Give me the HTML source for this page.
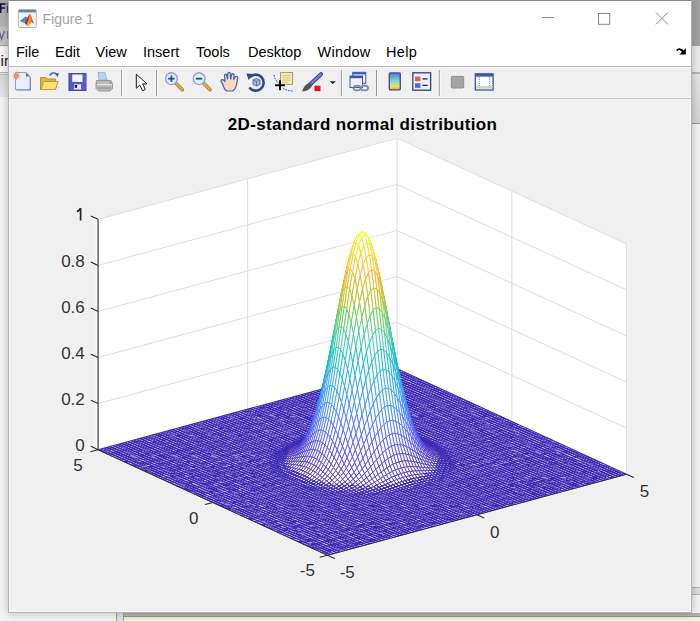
<!DOCTYPE html>
<html><head><meta charset="utf-8"><style>
html,body{margin:0;padding:0;}
body{width:700px;height:621px;position:relative;overflow:hidden;background:#f4f4f4;font-family:"Liberation Sans",sans-serif;}
.a{position:absolute;}
#win{position:absolute;left:8px;top:0px;width:684px;height:613px;background:#f0f0f0;box-sizing:border-box;border:1px solid #b4b4b4;border-top-color:#8a8a8a;box-shadow:0 0 9px rgba(0,0,0,0.26), inset 1px 0 0 #f6f6f6, inset -1px 0 0 #f6f6f6, inset 0 -1px 0 #f4f4f4;}
#title{position:absolute;left:0;top:0;width:682px;height:37px;background:#fff;}
#menu{position:absolute;left:0;top:37px;width:682px;height:28px;background:#fff;}
#tb{position:absolute;left:0;top:65px;width:682px;height:31px;background:#f0f0f0;border-top:1px solid #b8b8b8;border-bottom:1px solid #c0c0c0;box-shadow:inset 0 1px 0 #f5f5f5, inset 0 -1px 0 #f6f6f6, 0 1px 0 #f8f8f8;}
.menu{position:absolute;top:44px;font-size:14.5px;color:#000;}
.c0{stroke:#3c28b2;stroke-width:1.05}.c1{stroke:#402ab4;stroke-width:0.75}.c2{stroke:#422ec0;stroke-width:0.75}.c3{stroke:#4332cb;stroke-width:0.75}.c4{stroke:#4537d5;stroke-width:0.75}.c5{stroke:#463cde;stroke-width:0.75}.c6{stroke:#4741e5;stroke-width:0.75}.c7{stroke:#4747eb;stroke-width:0.75}.c8{stroke:#484df0;stroke-width:0.75}.c9{stroke:#4852f4;stroke-width:0.75}.c10{stroke:#4758f8;stroke-width:0.75}.c11{stroke:#465efb;stroke-width:0.75}.c12{stroke:#4563fd;stroke-width:0.75}.c13{stroke:#4269fe;stroke-width:0.75}.c14{stroke:#3e6fff;stroke-width:0.75}.c15{stroke:#3875fe;stroke-width:0.75}.c16{stroke:#327cfc;stroke-width:0.75}.c17{stroke:#2f81fa;stroke-width:0.75}.c18{stroke:#2e87f7;stroke-width:0.75}.c19{stroke:#2d8cf3;stroke-width:0.75}.c20{stroke:#2b91ef;stroke-width:0.75}.c21{stroke:#2797eb;stroke-width:0.75}.c22{stroke:#259be8;stroke-width:0.75}.c23{stroke:#23a0e5;stroke-width:0.75}.c24{stroke:#20a5e3;stroke-width:0.75}.c25{stroke:#1ca9df;stroke-width:0.75}.c26{stroke:#18addb;stroke-width:0.75}.c27{stroke:#12b1d6;stroke-width:0.75}.c29{stroke:#01b8ca;stroke-width:0.75}.c30{stroke:#02bac3;stroke-width:0.75}.c32{stroke:#19bfb6;stroke-width:0.75}.c34{stroke:#2cc4a7;stroke-width:0.75}.c35{stroke:#31c69f;stroke-width:0.75}.c36{stroke:#37c897;stroke-width:0.75}.c37{stroke:#3fca8e;stroke-width:0.75}.c38{stroke:#4acb84;stroke-width:0.75}.c39{stroke:#57cc7a;stroke-width:0.75}.c40{stroke:#64cd6f;stroke-width:0.95}.c41{stroke:#72cd64;stroke-width:0.95}.c42{stroke:#81cc59;stroke-width:0.95}.c44{stroke:#9dc943;stroke-width:0.95}.c46{stroke:#b9c431;stroke-width:0.95}.c47{stroke:#c5c22a;stroke-width:0.95}.c48{stroke:#d1bf27;stroke-width:0.95}.c49{stroke:#dcbd29;stroke-width:0.95}.c50{stroke:#e6bb2d;stroke-width:0.95}.c51{stroke:#f0ba36;stroke-width:0.95}.c52{stroke:#f8ba3d;stroke-width:0.95}.c55{stroke:#fec934;stroke-width:0.95}.c56{stroke:#fccf30;stroke-width:0.95}.c58{stroke:#f7dc2a;stroke-width:0.95}.c59{stroke:#f5e327;stroke-width:0.95}.c60{stroke:#f5e924;stroke-width:0.95}.c62{stroke:#f7f51b;stroke-width:0.95}.c63{stroke:#f9fb15;stroke-width:0.95}
svg text{font-family:"Liberation Sans",sans-serif;font-size:17px;fill:#333;}
</style></head><body>
<div class="a" style="left:0;top:0;width:9px;height:27px;background:linear-gradient(180deg,#a8a8a8,#b8b8b8);"></div>
<div class="a" style="left:0;top:27px;width:9px;height:18px;background:#c4c4c4;"></div><div class="a" style="left:0;top:45px;width:9px;height:1px;background:#a8a8a8;"></div><div class="a" style="left:0;top:46px;width:9px;height:1px;background:#e8e8e8;"></div>
<div class="a" style="left:0;top:47px;width:9px;height:25px;background:#f8f8f8;"></div>
<div class="a" style="left:0;top:72px;width:9px;height:3px;background:linear-gradient(180deg,#b8b8b8 0,#b8b8b8 1px,#e4e4e4 1px,#e4e4e4 2px,#c0c0c0 2px);"></div><div class="a" style="left:0;top:75px;width:9px;height:22px;background:linear-gradient(180deg,#dadada,#e8e8e8);"></div>
<svg class="a" style="left:0;top:0" width="9" height="75"><path d="M-0.2 3.2H5.6V4.7H1.5V7.3H5V8.7H1.5V12.9H-0.2Z" fill="#1e0a3c"/><path d="M6.8 3.2H8.3V4.6H6.8ZM6.8 5.8H8.3V12.9H6.8Z" fill="#4a3a6a"/><path d="M-0.8 30.9L1.6 39.1L4.4 30.9" stroke="#6a6a86" stroke-width="1.4" fill="none"/><path d="M7.8 30.9V39.1" stroke="#6a6a86" stroke-width="1.3"/><text x="0.6" y="66.3" style="font-family:'Liberation Sans';font-size:15px;fill:#1a1a1a">ir</text></svg>
<div class="a" style="left:691px;top:0;width:9px;height:46px;background:#a4a4a4;"></div>
<div class="a" style="left:691px;top:46px;width:9px;height:27px;background:#ececec;"></div>
<div class="a" style="left:691px;top:72px;width:9px;height:2px;background:#b8b8b8;"></div><div class="a" style="left:691px;top:74px;width:9px;height:49px;background:linear-gradient(180deg,#e6e6e6,#d4d4d4);"></div><div class="a" style="left:691px;top:123px;width:9px;height:1px;background:#999;"></div><div class="a" style="left:691px;top:587px;width:9px;height:8px;background:#dedede;border-top:1px solid #b4b4b4;border-bottom:1px solid #b4b4b4;box-sizing:border-box;"></div>
<div class="a" style="left:124px;top:613px;width:576px;height:8px;background:linear-gradient(180deg,#acacac 0,#b8b8b8 3px,#929292 3px,#929292 4px,#eeeed4 4px,#f8f8de 8px);"></div>
<div class="a" style="left:116px;top:613px;width:1px;height:8px;background:#a0a0a0;"></div>
<div class="a" style="left:117px;top:613px;width:6px;height:8px;background:#e2e2e2;"></div>
<div class="a" style="left:123px;top:613px;width:1px;height:8px;background:#a0a0a0;"></div>
<div id="win">
 <div id="title"></div>
 <div id="menu"></div>
 <div id="tb"></div>
</div>
<div class="a" style="left:42.5px;top:11px;font-size:14px;color:#a2a2a2;">Figure 1</div>
<div class="menu" style="left:16px">File</div>
<div class="menu" style="left:55px">Edit</div>
<div class="menu" style="left:95.5px">View</div>
<div class="menu" style="left:143px">Insert</div>
<div class="menu" style="left:196px">Tools</div>
<div class="menu" style="left:248px">Desktop</div>
<div class="menu" style="left:317.5px;letter-spacing:0.25px">Window</div>
<div class="menu" style="left:386px;letter-spacing:0.3px">Help</div>
<svg class="a" style="left:0;top:0" width="700" height="621" viewBox="0 0 700 621">
<path d="M98.1 449.7L397.1 368.7L397.1 138.3L98.1 219.3Z M397.1 368.7L626.5 474.2L626.5 243.9L397.1 138.3Z M98.1 449.7L397.1 368.7L626.5 474.2L327.5 555.2Z" fill="#fff"/>
<path d="M98.1 449.7L397.1 368.7L626.5 474.2M98.1 403.6L397.1 322.6L626.5 428.1M98.1 357.5L397.1 276.6L626.5 382.1M98.1 311.4L397.1 230.5L626.5 336M98.1 265.4L397.1 184.4L626.5 289.9M98.1 219.3L397.1 138.3L626.5 243.9M247.6 409.2L247.6 178.8M397.1 368.7L397.1 138.3M511.8 421.5L511.8 191.1M626.5 474.2L626.5 243.9" stroke="#dedede" stroke-width="1" fill="none"/>
<filter id="fb" x="-5%" y="-5%" width="110%" height="110%"><feGaussianBlur stdDeviation="0.3"/></filter><path d="M327.5 555.2L98.1 449.7M327.5 555.2L626.5 474.2M330.5 554.4L101.1 448.9M325.2 554.1L624.2 473.2M333.5 553.6L104.1 448M322.9 553.1L621.9 472.1M336.5 552.8L107 447.2M320.6 552L619.6 471.1M339.5 551.9L110 446.4M318.3 551L617.4 470M342.5 551.1L113 445.6M316 549.9L615.1 468.9M345.5 550.3L116 444.8M313.7 548.9L612.8 467.9M348.4 549.5L119 444M311.5 547.8L610.5 466.8M351.4 548.7L122 443.2M309.2 546.7L608.2 465.8M354.4 547.9L125 442.4M306.9 545.7L605.9 464.7M357.4 547.1L128 441.6M304.6 544.6L603.6 463.7M360.4 546.3L131 440.8M302.3 543.6L601.3 462.6M363.4 545.5L134 440M300 542.5L599 461.6M366.4 544.7L136.9 439.1M297.7 541.5L596.7 460.5M369.4 543.8L139.9 438.3M295.4 540.4L594.4 459.4M372.4 543L142.9 437.5M293.1 539.4L592.1 458.4M375.4 542.2L145.9 436.7M290.8 538.3L589.8 457.3M378.3 541.4L148.9 435.9M288.5 537.2L587.5 456.3M381.3 540.6L151.9 435.1M286.2 536.2L585.2 455.2M384.3 539.8L154.9 434.3M283.9 535.1L582.9 454.2M387.3 539L157.9 433.5M281.6 534.1L580.6 453.1M390.3 538.2L160.9 432.7M279.3 533L578.3 452.1M393.3 537.4L163.9 431.9M277 532L576.1 451M396.3 536.6L166.8 431M274.7 530.9L573.8 449.9M399.3 535.8L169.8 430.2M272.4 529.9L571.5 448.9M402.3 534.9L172.8 429.4M270.2 528.8L569.2 447.8M405.3 534.1L175.8 428.6M267.9 527.7L566.9 446.8M408.2 533.3L178.8 427.8M265.6 526.7L564.6 445.7M411.2 532.5L181.8 427M263.3 525.6L562.3 444.7M414.2 531.7L184.8 426.2M261 524.6L560 443.6M417.2 530.9L187.8 425.4M258.7 523.5L557.7 442.6M420.2 530.1L190.8 424.6M256.4 522.5L555.4 441.5M423.2 529.3L193.8 423.8M254.1 521.4L553.1 440.5M426.2 528.5L196.7 422.9M251.8 520.4L550.8 439.4M429.2 527.7L199.7 422.1M249.5 519.3L548.5 438.3M432.2 526.8L202.7 421.3M247.2 518.3L546.2 437.3M435.2 526L205.7 420.5M244.9 517.2L543.9 436.2M438.1 525.2L208.7 419.7M242.6 516.1L541.6 435.2M441.1 524.4L211.7 418.9M240.3 515.1L539.3 434.1M444.1 523.6L214.7 418.1M238 514L537 433.1M447.1 522.8L217.7 417.3M235.7 513L534.8 432M450.1 522L220.7 416.5M233.4 511.9L532.5 431M453.1 521.2L223.7 415.7M231.1 510.9L530.2 429.9M456.1 520.4L226.6 414.9M228.9 509.8L527.9 428.8M459.1 519.6L229.6 414M226.6 508.8L525.6 427.8M462.1 518.7L232.6 413.2M224.3 507.7L523.3 426.7M465.1 517.9L235.6 412.4M222 506.6L521 425.7M468.1 517.1L238.6 411.6M219.7 505.6L518.7 424.6M471 516.3L241.6 410.8M217.4 504.5L516.4 423.6M474 515.5L244.6 410M215.1 503.5L514.1 422.5M477 514.7L247.6 409.2M212.8 502.4L511.8 421.5M480 513.9L250.6 408.4M210.5 501.4L509.5 420.4M483 513.1L253.6 407.6M208.2 500.3L507.2 419.3M486 512.3L256.5 406.8M205.9 499.3L504.9 418.3M489 511.5L259.5 405.9M203.6 498.2L502.6 417.2M492 510.7L262.5 405.1M201.3 497.1L500.3 416.2M495 509.8L265.5 404.3M199 496.1L498 415.1M498 509L268.5 403.5M196.7 495L495.7 414.1M500.9 508.2L271.5 402.7M194.4 494L493.5 413M503.9 507.4L274.5 401.9M192.1 492.9L491.2 412M506.9 506.6L277.5 401.1M189.8 491.9L488.9 410.9M509.9 505.8L280.5 400.3M187.6 490.8L486.6 409.9M512.9 505L283.5 399.5M185.3 489.8L484.3 408.8M515.9 504.2L286.5 398.7M183 488.7L482 407.7M518.9 503.4L289.4 397.8M180.7 487.7L479.7 406.7M521.9 502.6L292.4 397M178.4 486.6L477.4 405.6M524.9 501.7L295.4 396.2M176.1 485.5L475.1 404.6M527.9 500.9L298.4 395.4M173.8 484.5L472.8 403.5M530.8 500.1L301.4 394.6M171.5 483.4L470.5 402.5M533.8 499.3L304.4 393.8M169.2 482.4L468.2 401.4M536.8 498.5L307.4 393M166.9 481.3L465.9 400.4M539.8 497.7L310.4 392.2M164.6 480.3L463.6 399.3M542.8 496.9L313.4 391.4M162.3 479.2L461.3 398.2M545.8 496.1L316.4 390.6M160 478.2L459 397.2M548.8 495.3L319.3 389.8M157.7 477.1L456.7 396.1M551.8 494.5L322.3 388.9M155.4 476L454.4 395.1M554.8 493.6L325.3 388.1M153.1 475L452.2 394M557.8 492.8L328.3 387.3M150.8 473.9L449.9 393M560.7 492L331.3 386.5M148.5 472.9L447.6 391.9M563.7 491.2L334.3 385.7M146.3 471.8L445.3 390.9M566.7 490.4L337.3 384.9M144 470.8L443 389.8M569.7 489.6L340.3 384.1M141.7 469.7L440.7 388.7M572.7 488.8L343.3 383.3M139.4 468.7L438.4 387.7M575.7 488L346.3 382.5M137.1 467.6L436.1 386.6M578.7 487.2L349.2 381.7M134.8 466.5L433.8 385.6M581.7 486.4L352.2 380.8M132.5 465.5L431.5 384.5M584.7 485.6L355.2 380M130.2 464.4L429.2 383.5M587.7 484.7L358.2 379.2M127.9 463.4L426.9 382.4M590.6 483.9L361.2 378.4M125.6 462.3L424.6 381.4M593.6 483.1L364.2 377.6M123.3 461.3L422.3 380.3M596.6 482.3L367.2 376.8M121 460.2L420 379.3M599.6 481.5L370.2 376M118.7 459.2L417.7 378.2M602.6 480.7L373.2 375.2M116.4 458.1L415.4 377.1M605.6 479.9L376.2 374.4M114.1 457.1L413.1 376.1M608.6 479.1L379.1 373.6M111.8 456L410.9 375M611.6 478.3L382.1 372.7M109.5 454.9L408.6 374M614.6 477.5L385.1 371.9M107.2 453.9L406.3 372.9M617.6 476.6L388.1 371.1M105 452.8L404 371.9M620.5 475.8L391.1 370.3M102.7 451.8L401.7 370.8M623.5 475L394.1 369.5M100.4 450.7L399.4 369.8M626.5 474.2L397.1 368.7M98.1 449.7L397.1 368.7" stroke="#3c28b2" stroke-width="1.05" fill="none" filter="url(#fb)"/>
<g fill="#fff">
<g class="c0"><path d="M321.5 434.4L324.5 433.6 322.2 432.6 319.2 433.4z"/><path d="M318.5 435.1L321.5 434.4 319.2 433.4 316.2 434.2z"/><path d="M315.5 435.9L318.5 435.1 316.2 434.2 313.2 435z"/><path d="M312.5 436.6L315.5 435.9 313.2 435 310.2 435.8z"/><path d="M309.5 437.4L312.5 436.6 310.2 435.8 307.2 436.6z"/><path d="M306.5 438.3L309.5 437.4 307.2 436.6 304.2 437.4z"/><path d="M303.5 439.1L306.5 438.3 304.2 437.4 301.3 438.2z"/><path d="M300.6 440L303.5 439.1 301.3 438.2 298.3 439z"/><path d="M297.6 440.8L300.6 440 298.3 439 295.3 439.9z"/><path d="M294.6 441.7L297.6 440.8 295.3 439.9 292.3 440.7z"/><path d="M335.7 432.2L338.7 431.4 336.4 430.4 333.4 431.2z"/><path d="M332.8 432.9L335.7 432.2 333.4 431.2 330.5 432z"/><path d="M329.8 433.5L332.8 432.9 330.5 432 327.5 432.8z"/><path d="M326.8 434.2L329.8 433.5 327.5 432.8 324.5 433.6z"/><path d="M323.8 434.9L326.8 434.2 324.5 433.6 321.5 434.4z"/><path d="M320.8 435.6L323.8 434.9 321.5 434.4 318.5 435.1z"/><path d="M317.8 436.3L320.8 435.6 318.5 435.1 315.5 435.9z"/><path d="M314.8 437L317.8 436.3 315.5 435.9 312.5 436.6z"/><path d="M311.8 437.8L314.8 437 312.5 436.6 309.5 437.4z"/><path d="M308.8 438.7L311.8 437.8 309.5 437.4 306.5 438.3z"/><path d="M305.8 439.5L308.8 438.7 306.5 438.3 303.5 439.1z"/><path d="M302.9 440.4L305.8 439.5 303.5 439.1 300.6 440z"/><path d="M299.9 441.3L302.9 440.4 300.6 440 297.6 440.8z"/><path d="M296.9 442.3L299.9 441.3 297.6 440.8 294.6 441.7z"/><path d="M293.9 443.2L296.9 442.3 294.6 441.7 291.6 442.5z"/><path d="M290.9 444.2L293.9 443.2 291.6 442.5 288.6 443.3z"/><path d="M287.9 445.2L290.9 444.2 288.6 443.3 285.6 444.1z"/><path d="M284.9 446L287.9 445.2 285.6 444.1 282.6 445z"/><path d="M344 431.6L347 430.9 344.7 429.8 341.7 430.6z"/><path d="M341 432.2L344 431.6 341.7 430.6 338.7 431.4z"/><path d="M338 432.7L341 432.2 338.7 431.4 335.7 432.2z"/><path d="M335 433.3L338 432.7 335.7 432.2 332.8 432.9z"/><path d="M332.1 433.9L335 433.3 332.8 432.9 329.8 433.5z"/><path d="M329.1 434.5L332.1 433.9 329.8 433.5 326.8 434.2z"/><path d="M326.1 435.1L329.1 434.5 326.8 434.2 323.8 434.9z"/><path d="M323.1 435.7L326.1 435.1 323.8 434.9 320.8 435.6z"/><path d="M320.1 436.4L323.1 435.7 320.8 435.6 317.8 436.3z"/><path d="M317.1 437.1L320.1 436.4 317.8 436.3 314.8 437z"/><path d="M314.1 437.9L317.1 437.1 314.8 437 311.8 437.8z"/><path d="M311.1 438.7L314.1 437.9 311.8 437.8 308.8 438.7z"/><path d="M308.1 439.6L311.1 438.7 308.8 438.7 305.8 439.5z"/><path d="M305.1 440.6L308.1 439.6 305.8 439.5 302.9 440.4z"/><path d="M302.2 441.6L305.1 440.6 302.9 440.4 299.9 441.3z"/><path d="M299.2 442.6L302.2 441.6 299.9 441.3 296.9 442.3z"/><path d="M296.2 443.6L299.2 442.6 296.9 442.3 293.9 443.2z"/><path d="M293.2 444.7L296.2 443.6 293.9 443.2 290.9 444.2z"/><path d="M290.2 445.7L293.2 444.7 290.9 444.2 287.9 445.2z"/><path d="M287.2 446.7L290.2 445.7 287.9 445.2 284.9 446z"/><path d="M284.2 447.8L287.2 446.7 284.9 446 281.9 446.8z"/><path d="M281.2 448.7L284.2 447.8 281.9 446.8 278.9 447.6z"/><path d="M352.3 431L355.3 430.3 353 429.3 350 430.1z"/><path d="M349.3 431.6L352.3 431 350 430.1 347 430.9z"/><path d="M346.3 432.1L349.3 431.6 347 430.9 344 431.6z"/><path d="M343.3 432.6L346.3 432.1 344 431.6 341 432.2z"/><path d="M340.3 433.1L343.3 432.6 341 432.2 338 432.7z"/><path d="M337.3 433.5L340.3 433.1 338 432.7 335 433.3z"/><path d="M334.4 433.9L337.3 433.5 335 433.3 332.1 433.9z"/><path d="M331.4 434.4L334.4 433.9 332.1 433.9 329.1 434.5z"/><path d="M328.4 434.9L331.4 434.4 329.1 434.5 326.1 435.1z"/><path d="M325.4 435.5L328.4 434.9 326.1 435.1 323.1 435.7z"/><path d="M322.4 436.1L325.4 435.5 323.1 435.7 320.1 436.4z"/><path d="M319.4 436.8L322.4 436.1 320.1 436.4 317.1 437.1z"/><path d="M316.4 437.5L319.4 436.8 317.1 437.1 314.1 437.9z"/><path d="M313.4 438.4L316.4 437.5 314.1 437.9 311.1 438.7z"/><path d="M310.4 439.3L313.4 438.4 311.1 438.7 308.1 439.6z"/><path d="M307.4 440.3L310.4 439.3 308.1 439.6 305.1 440.6z"/><path d="M304.5 441.4L307.4 440.3 305.1 440.6 302.2 441.6z"/><path d="M301.5 442.5L304.5 441.4 302.2 441.6 299.2 442.6z"/><path d="M298.5 443.7L301.5 442.5 299.2 442.6 296.2 443.6z"/><path d="M295.5 444.8L298.5 443.7 296.2 443.6 293.2 444.7z"/><path d="M292.5 446L295.5 444.8 293.2 444.7 290.2 445.7z"/><path d="M289.5 447.2L292.5 446 290.2 445.7 287.2 446.7z"/><path d="M286.5 448.3L289.5 447.2 287.2 446.7 284.2 447.8z"/><path d="M283.5 449.4L286.5 448.3 284.2 447.8 281.2 448.7z"/><path d="M280.5 450.5L283.5 449.4 281.2 448.7 278.2 449.5z"/><path d="M277.5 451.4L280.5 450.5 278.2 449.5 275.2 450.3z"/><path d="M357.6 431.1L360.6 430.6 358.3 429.5 355.3 430.3z"/><path d="M354.6 431.6L357.6 431.1 355.3 430.3 352.3 431z"/><path d="M351.6 432L354.6 431.6 352.3 431 349.3 431.6z"/><path d="M348.6 432.4L351.6 432 349.3 431.6 346.3 432.1z"/><path d="M345.6 432.7L348.6 432.4 346.3 432.1 343.3 432.6z"/><path d="M342.6 433L345.6 432.7 343.3 432.6 340.3 433.1z"/><path d="M339.6 433.3L342.6 433 340.3 433.1 337.3 433.5z"/><path d="M336.6 433.6L339.6 433.3 337.3 433.5 334.4 433.9z"/></g>
<g class="c1"><path d="M333.7 433.9L336.6 433.6 334.4 433.9 331.4 434.4z"/><path d="M330.7 434.2L333.7 433.9 331.4 434.4 328.4 434.9z"/><path d="M327.7 434.7L330.7 434.2 328.4 434.9 325.4 435.5z"/><path d="M324.7 435.2L327.7 434.7 325.4 435.5 322.4 436.1z"/><path d="M321.7 435.8L324.7 435.2 322.4 436.1 319.4 436.8z"/><path d="M318.7 436.6L321.7 435.8 319.4 436.8 316.4 437.5z"/><path d="M315.7 437.4L318.7 436.6 316.4 437.5 313.4 438.4z"/><path d="M312.7 438.4L315.7 437.4 313.4 438.4 310.4 439.3z"/><path d="M309.7 439.5L312.7 438.4 310.4 439.3 307.4 440.3z"/><path d="M306.7 440.7L309.7 439.5 307.4 440.3 304.5 441.4z"/><path d="M303.8 442L306.7 440.7 304.5 441.4 301.5 442.5z"/><path d="M300.8 443.3L303.8 442 301.5 442.5 298.5 443.7z"/></g>
<g class="c0"><path d="M297.8 444.7L300.8 443.3 298.5 443.7 295.5 444.8z"/><path d="M294.8 446L297.8 444.7 295.5 444.8 292.5 446z"/><path d="M291.8 447.3L294.8 446 292.5 446 289.5 447.2z"/><path d="M288.8 448.6L291.8 447.3 289.5 447.2 286.5 448.3z"/><path d="M285.8 449.9L288.8 448.6 286.5 448.3 283.5 449.4z"/><path d="M282.8 451.1L285.8 449.9 283.5 449.4 280.5 450.5z"/><path d="M279.8 452.2L282.8 451.1 280.5 450.5 277.5 451.4z"/><path d="M276.8 453.2L279.8 452.2 277.5 451.4 274.5 452.2z"/><path d="M365.9 430.8L368.8 430 366.5 428.9 363.6 429.7z"/><path d="M362.9 431.3L365.9 430.8 363.6 429.7 360.6 430.6z"/><path d="M359.9 431.7L362.9 431.3 360.6 430.6 357.6 431.1z"/><path d="M356.9 432L359.9 431.7 357.6 431.1 354.6 431.6z"/><path d="M353.9 432.3L356.9 432 354.6 431.6 351.6 432z"/><path d="M350.9 432.4L353.9 432.3 351.6 432 348.6 432.4z"/><path d="M347.9 432.6L350.9 432.4 348.6 432.4 345.6 432.7z"/></g>
<g class="c1"><path d="M344.9 432.6L347.9 432.6 345.6 432.7 342.6 433z"/><path d="M341.9 432.7L344.9 432.6 342.6 433 339.6 433.3z"/><path d="M338.9 432.7L341.9 432.7 339.6 433.3 336.6 433.6z"/><path d="M336 432.8L338.9 432.7 336.6 433.6 333.7 433.9z"/><path d="M333 432.9L336 432.8 333.7 433.9 330.7 434.2z"/><path d="M330 433.2L333 432.9 330.7 434.2 327.7 434.7z"/><path d="M327 433.6L330 433.2 327.7 434.7 324.7 435.2z"/></g>
<g class="c2"><path d="M324 434.1L327 433.6 324.7 435.2 321.7 435.8z"/><path d="M321 434.8L324 434.1 321.7 435.8 318.7 436.6z"/><path d="M318 435.7L321 434.8 318.7 436.6 315.7 437.4z"/><path d="M315 436.8L318 435.7 315.7 437.4 312.7 438.4z"/></g>
<g class="c1"><path d="M312 438L315 436.8 312.7 438.4 309.7 439.5z"/><path d="M309 439.4L312 438 309.7 439.5 306.7 440.7z"/><path d="M306 440.9L309 439.4 306.7 440.7 303.8 442z"/><path d="M303.1 442.4L306 440.9 303.8 442 300.8 443.3z"/><path d="M300.1 444L303.1 442.4 300.8 443.3 297.8 444.7z"/><path d="M297.1 445.6L300.1 444 297.8 444.7 294.8 446z"/><path d="M294.1 447.1L297.1 445.6 294.8 446 291.8 447.3z"/></g>
<g class="c0"><path d="M291.1 448.6L294.1 447.1 291.8 447.3 288.8 448.6z"/><path d="M288.1 450.1L291.1 448.6 288.8 448.6 285.8 449.9z"/><path d="M285.1 451.4L288.1 450.1 285.8 449.9 282.8 451.1z"/><path d="M282.1 452.7L285.1 451.4 282.8 451.1 279.8 452.2z"/><path d="M279.1 453.9L282.1 452.7 279.8 452.2 276.8 453.2z"/><path d="M276.1 455.1L279.1 453.9 276.8 453.2 273.9 454z"/><path d="M273.2 455.9L276.1 455.1 273.9 454 270.9 454.8z"/><path d="M371.1 431L374.1 430.2 371.8 429.2 368.8 430z"/><path d="M368.1 431.4L371.1 431 368.8 430 365.9 430.8z"/><path d="M365.2 431.8L368.1 431.4 365.9 430.8 362.9 431.3z"/><path d="M362.2 432L365.2 431.8 362.9 431.3 359.9 431.7z"/><path d="M359.2 432.2L362.2 432 359.9 431.7 356.9 432z"/><path d="M356.2 432.2L359.2 432.2 356.9 432 353.9 432.3z"/></g>
<g class="c1"><path d="M353.2 432.1L356.2 432.2 353.9 432.3 350.9 432.4z"/><path d="M350.2 431.9L353.2 432.1 350.9 432.4 347.9 432.6z"/><path d="M347.2 431.7L350.2 431.9 347.9 432.6 344.9 432.6z"/><path d="M344.2 431.4L347.2 431.7 344.9 432.6 341.9 432.7z"/><path d="M341.2 431.1L344.2 431.4 341.9 432.7 338.9 432.7z"/></g>
<g class="c2"><path d="M338.2 430.9L341.2 431.1 338.9 432.7 336 432.8z"/><path d="M335.3 430.7L338.2 430.9 336 432.8 333 432.9z"/><path d="M332.3 430.8L335.3 430.7 333 432.9 330 433.2z"/><path d="M329.3 431L332.3 430.8 330 433.2 327 433.6z"/><path d="M326.3 431.4L329.3 431 327 433.6 324 434.1z"/></g>
<g class="c3"><path d="M323.3 432.1L326.3 431.4 324 434.1 321 434.8z"/><path d="M320.3 433L323.3 432.1 321 434.8 318 435.7z"/></g>
<g class="c2"><path d="M317.3 434.2L320.3 433 318 435.7 315 436.8z"/><path d="M314.3 435.6L317.3 434.2 315 436.8 312 438z"/><path d="M311.3 437.2L314.3 435.6 312 438 309 439.4z"/><path d="M308.3 439L311.3 437.2 309 439.4 306 440.9z"/><path d="M305.4 440.8L308.3 439 306 440.9 303.1 442.4z"/></g>
<g class="c1"><path d="M302.4 442.7L305.4 440.8 303.1 442.4 300.1 444z"/><path d="M299.4 444.6L302.4 442.7 300.1 444 297.1 445.6z"/><path d="M296.4 446.5L299.4 444.6 297.1 445.6 294.1 447.1z"/><path d="M293.4 448.3L296.4 446.5 294.1 447.1 291.1 448.6z"/><path d="M290.4 450L293.4 448.3 291.1 448.6 288.1 450.1z"/></g>
<g class="c0"><path d="M287.4 451.6L290.4 450 288.1 450.1 285.1 451.4z"/><path d="M284.4 453.1L287.4 451.6 285.1 451.4 282.1 452.7z"/><path d="M281.4 454.5L284.4 453.1 282.1 452.7 279.1 453.9z"/><path d="M278.4 455.7L281.4 454.5 279.1 453.9 276.1 455.1z"/><path d="M275.5 456.9L278.4 455.7 276.1 455.1 273.2 455.9z"/><path d="M272.5 457.8L275.5 456.9 273.2 455.9 270.2 456.7z"/><path d="M376.4 431.2L379.4 430.5 377.1 429.4 374.1 430.2z"/><path d="M373.4 431.6L376.4 431.2 374.1 430.2 371.1 431z"/><path d="M370.4 432L373.4 431.6 371.1 431 368.1 431.4z"/><path d="M367.5 432.1L370.4 432 368.1 431.4 365.2 431.8z"/><path d="M364.5 432.2L367.5 432.1 365.2 431.8 362.2 432z"/><path d="M361.5 432L364.5 432.2 362.2 432 359.2 432.2z"/></g>
<g class="c1"><path d="M358.5 431.7L361.5 432 359.2 432.2 356.2 432.2z"/><path d="M355.5 431.3L358.5 431.7 356.2 432.2 353.2 432.1z"/><path d="M352.5 430.7L355.5 431.3 353.2 432.1 350.2 431.9z"/></g>
<g class="c2"><path d="M349.5 430.1L352.5 430.7 350.2 431.9 347.2 431.7z"/><path d="M346.5 429.4L349.5 430.1 347.2 431.7 344.2 431.4z"/><path d="M343.5 428.7L346.5 429.4 344.2 431.4 341.2 431.1z"/></g>
<g class="c3"><path d="M340.5 428L343.5 428.7 341.2 431.1 338.2 430.9z"/><path d="M337.5 427.5L340.5 428 338.2 430.9 335.3 430.7z"/><path d="M334.6 427.2L337.5 427.5 335.3 430.7 332.3 430.8z"/><path d="M331.6 427.2L334.6 427.2 332.3 430.8 329.3 431z"/></g>
<g class="c4"><path d="M328.6 427.5L331.6 427.2 329.3 431 326.3 431.4z"/><path d="M325.6 428.1L328.6 427.5 326.3 431.4 323.3 432.1z"/><path d="M322.6 429.1L325.6 428.1 323.3 432.1 320.3 433z"/><path d="M319.6 430.4L322.6 429.1 320.3 433 317.3 434.2z"/></g>
<g class="c3"><path d="M316.6 432.1L319.6 430.4 317.3 434.2 314.3 435.6z"/><path d="M313.6 434L316.6 432.1 314.3 435.6 311.3 437.2z"/><path d="M310.6 436.1L313.6 434 311.3 437.2 308.3 439z"/><path d="M307.6 438.4L310.6 436.1 308.3 439 305.4 440.8z"/></g>
<g class="c2"><path d="M304.7 440.7L307.6 438.4 305.4 440.8 302.4 442.7z"/><path d="M301.7 443L304.7 440.7 302.4 442.7 299.4 444.6z"/><path d="M298.7 445.3L301.7 443 299.4 444.6 296.4 446.5z"/></g>
<g class="c1"><path d="M295.7 447.5L298.7 445.3 296.4 446.5 293.4 448.3z"/><path d="M292.7 449.6L295.7 447.5 293.4 448.3 290.4 450z"/><path d="M289.7 451.5L292.7 449.6 290.4 450 287.4 451.6z"/></g>
<g class="c0"><path d="M286.7 453.2L289.7 451.5 287.4 451.6 284.4 453.1z"/><path d="M283.7 454.8L286.7 453.2 284.4 453.1 281.4 454.5z"/><path d="M280.7 456.2L283.7 454.8 281.4 454.5 278.4 455.7z"/><path d="M277.7 457.6L280.7 456.2 278.4 455.7 275.5 456.9z"/><path d="M274.8 458.8L277.7 457.6 275.5 456.9 272.5 457.8z"/><path d="M271.8 459.6L274.8 458.8 272.5 457.8 269.5 458.6z"/><path d="M381.7 431.5L384.7 430.7 382.4 429.7 379.4 430.5z"/><path d="M378.7 431.9L381.7 431.5 379.4 430.5 376.4 431.2z"/><path d="M375.7 432.2L378.7 431.9 376.4 431.2 373.4 431.6z"/><path d="M372.7 432.3L375.7 432.2 373.4 431.6 370.4 432z"/><path d="M369.7 432.3L372.7 432.3 370.4 432 367.5 432.1z"/><path d="M366.8 432L369.7 432.3 367.5 432.1 364.5 432.2z"/></g>
<g class="c1"><path d="M363.8 431.5L366.8 432 364.5 432.2 361.5 432z"/><path d="M360.8 430.9L363.8 431.5 361.5 432 358.5 431.7z"/><path d="M357.8 430L360.8 430.9 358.5 431.7 355.5 431.3z"/></g>
<g class="c2"><path d="M354.8 428.9L357.8 430 355.5 431.3 352.5 430.7z"/><path d="M351.8 427.7L354.8 428.9 352.5 430.7 349.5 430.1z"/></g>
<g class="c3"><path d="M348.8 426.4L351.8 427.7 349.5 430.1 346.5 429.4z"/><path d="M345.8 425.2L348.8 426.4 346.5 429.4 343.5 428.7z"/></g>
<g class="c4"><path d="M342.8 424L345.8 425.2 343.5 428.7 340.5 428z"/><path d="M339.8 423L342.8 424 340.5 428 337.5 427.5z"/></g>
<g class="c5"><path d="M336.9 422.3L339.8 423 337.5 427.5 334.6 427.2z"/><path d="M333.9 422L336.9 422.3 334.6 427.2 331.6 427.2z"/><path d="M330.9 422.1L333.9 422 331.6 427.2 328.6 427.5z"/><path d="M327.9 422.7L330.9 422.1 328.6 427.5 325.6 428.1z"/><path d="M324.9 423.7L327.9 422.7 325.6 428.1 322.6 429.1z"/><path d="M321.9 425.2L324.9 423.7 322.6 429.1 319.6 430.4z"/><path d="M318.9 427.2L321.9 425.2 319.6 430.4 316.6 432.1z"/><path d="M315.9 429.5L318.9 427.2 316.6 432.1 313.6 434z"/></g>
<g class="c4"><path d="M312.9 432.1L315.9 429.5 313.6 434 310.6 436.1z"/><path d="M309.9 434.9L312.9 432.1 310.6 436.1 307.6 438.4z"/></g>
<g class="c3"><path d="M307 437.8L309.9 434.9 307.6 438.4 304.7 440.7z"/><path d="M304 440.7L307 437.8 304.7 440.7 301.7 443z"/></g>
<g class="c2"><path d="M301 443.5L304 440.7 301.7 443 298.7 445.3z"/><path d="M298 446.2L301 443.5 298.7 445.3 295.7 447.5z"/></g>
<g class="c1"><path d="M295 448.7L298 446.2 295.7 447.5 292.7 449.6z"/><path d="M292 451L295 448.7 292.7 449.6 289.7 451.5z"/><path d="M289 453.1L292 451 289.7 451.5 286.7 453.2z"/></g>
<g class="c0"><path d="M286 454.9L289 453.1 286.7 453.2 283.7 454.8z"/><path d="M283 456.6L286 454.9 283.7 454.8 280.7 456.2z"/><path d="M280 458.1L283 456.6 280.7 456.2 277.7 457.6z"/><path d="M277.1 459.4L280 458.1 277.7 457.6 274.8 458.8z"/><path d="M274.1 460.7L277.1 459.4 274.8 458.8 271.8 459.6z"/><path d="M271.1 461.5L274.1 460.7 271.8 459.6 268.8 460.4z"/><path d="M384 432.2L387 431.8 384.7 430.7 381.7 431.5z"/><path d="M381 432.5L384 432.2 381.7 431.5 378.7 431.9z"/><path d="M378 432.6L381 432.5 378.7 431.9 375.7 432.2z"/><path d="M375 432.5L378 432.6 375.7 432.2 372.7 432.3z"/><path d="M372 432.2L375 432.5 372.7 432.3 369.7 432.3z"/></g>
<g class="c1"><path d="M369.1 431.6L372 432.2 369.7 432.3 366.8 432z"/><path d="M366.1 430.7L369.1 431.6 366.8 432 363.8 431.5z"/></g>
<g class="c2"><path d="M363.1 429.5L366.1 430.7 363.8 431.5 360.8 430.9z"/><path d="M360.1 428L363.1 429.5 360.8 430.9 357.8 430z"/></g>
<g class="c3"><path d="M357.1 426.3L360.1 428 357.8 430 354.8 428.9z"/><path d="M354.1 424.4L357.1 426.3 354.8 428.9 351.8 427.7z"/></g>
<g class="c4"><path d="M351.1 422.5L354.1 424.4 351.8 427.7 348.8 426.4z"/></g>
<g class="c5"><path d="M348.1 420.5L351.1 422.5 348.8 426.4 345.8 425.2z"/><path d="M345.1 418.7L348.1 420.5 345.8 425.2 342.8 424z"/></g>
<g class="c6"><path d="M342.1 417.1L345.1 418.7 342.8 424 339.8 423z"/><path d="M339.1 415.9L342.1 417.1 339.8 423 336.9 422.3z"/></g>
<g class="c7"><path d="M336.2 415.2L339.1 415.9 336.9 422.3 333.9 422z"/><path d="M333.2 415L336.2 415.2 333.9 422 330.9 422.1z"/><path d="M330.2 415.5L333.2 415 330.9 422.1 327.9 422.7z"/><path d="M327.2 416.6L330.2 415.5 327.9 422.7 324.9 423.7z"/><path d="M324.2 418.4L327.2 416.6 324.9 423.7 321.9 425.2z"/><path d="M321.2 420.7L324.2 418.4 321.9 425.2 318.9 427.2z"/></g>
<g class="c6"><path d="M318.2 423.6L321.2 420.7 318.9 427.2 315.9 429.5z"/><path d="M315.2 426.8L318.2 423.6 315.9 429.5 312.9 432.1z"/></g>
<g class="c5"><path d="M312.2 430.2L315.2 426.8 312.9 432.1 309.9 434.9z"/><path d="M309.2 433.8L312.2 430.2 309.9 434.9 307 437.8z"/></g>
<g class="c4"><path d="M306.3 437.4L309.2 433.8 307 437.8 304 440.7z"/></g>
<g class="c3"><path d="M303.3 440.9L306.3 437.4 304 440.7 301 443.5z"/><path d="M300.3 444.2L303.3 440.9 301 443.5 298 446.2z"/></g>
<g class="c2"><path d="M297.3 447.3L300.3 444.2 298 446.2 295 448.7z"/><path d="M294.3 450.1L297.3 447.3 295 448.7 292 451z"/></g>
<g class="c1"><path d="M291.3 452.6L294.3 450.1 292 451 289 453.1z"/><path d="M288.3 454.8L291.3 452.6 289 453.1 286 454.9z"/></g>
<g class="c0"><path d="M285.3 456.8L288.3 454.8 286 454.9 283 456.6z"/><path d="M282.3 458.5L285.3 456.8 283 456.6 280 458.1z"/><path d="M279.3 460L282.3 458.5 280 458.1 277.1 459.4z"/><path d="M276.4 461.4L279.3 460 277.1 459.4 274.1 460.7z"/><path d="M273.4 462.6L276.4 461.4 274.1 460.7 271.1 461.5z"/><path d="M389.3 432.6L392.3 432 390 431 387 431.8z"/><path d="M386.3 432.9L389.3 432.6 387 431.8 384 432.2z"/><path d="M383.3 433L386.3 432.9 384 432.2 381 432.5z"/><path d="M380.3 432.9L383.3 433 381 432.5 378 432.6z"/><path d="M377.3 432.5L380.3 432.9 378 432.6 375 432.5z"/></g>
<g class="c1"><path d="M374.3 431.8L377.3 432.5 375 432.5 372 432.2z"/><path d="M371.3 430.7L374.3 431.8 372 432.2 369.1 431.6z"/></g>
<g class="c2"><path d="M368.4 429.3L371.3 430.7 369.1 431.6 366.1 430.7z"/><path d="M365.4 427.5L368.4 429.3 366.1 430.7 363.1 429.5z"/></g>
<g class="c3"><path d="M362.4 425.4L365.4 427.5 363.1 429.5 360.1 428z"/></g>
<g class="c4"><path d="M359.4 422.9L362.4 425.4 360.1 428 357.1 426.3z"/></g>
<g class="c5"><path d="M356.4 420.2L359.4 422.9 357.1 426.3 354.1 424.4z"/><path d="M353.4 417.3L356.4 420.2 354.1 424.4 351.1 422.5z"/></g>
<g class="c6"><path d="M350.4 414.5L353.4 417.3 351.1 422.5 348.1 420.5z"/></g>
<g class="c7"><path d="M347.4 411.9L350.4 414.5 348.1 420.5 345.1 418.7z"/></g>
<g class="c8"><path d="M344.4 409.5L347.4 411.9 345.1 418.7 342.1 417.1z"/></g>
<g class="c9"><path d="M341.4 407.7L344.4 409.5 342.1 417.1 339.1 415.9z"/><path d="M338.5 406.5L341.4 407.7 339.1 415.9 336.2 415.2z"/></g>
<g class="c10"><path d="M335.5 406.1L338.5 406.5 336.2 415.2 333.2 415z"/><path d="M332.5 406.5L335.5 406.1 333.2 415 330.2 415.5z"/><path d="M329.5 407.7L332.5 406.5 330.2 415.5 327.2 416.6z"/><path d="M326.5 409.8L329.5 407.7 327.2 416.6 324.2 418.4z"/></g>
<g class="c9"><path d="M323.5 412.6L326.5 409.8 324.2 418.4 321.2 420.7z"/><path d="M320.5 416L323.5 412.6 321.2 420.7 318.2 423.6z"/></g>
<g class="c8"><path d="M317.5 420L320.5 416 318.2 423.6 315.2 426.8z"/></g>
<g class="c7"><path d="M314.5 424.2L317.5 420 315.2 426.8 312.2 430.2z"/></g>
<g class="c6"><path d="M311.5 428.7L314.5 424.2 312.2 430.2 309.2 433.8z"/></g>
<g class="c5"><path d="M308.6 433.1L311.5 428.7 309.2 433.8 306.3 437.4z"/><path d="M305.6 437.5L308.6 433.1 306.3 437.4 303.3 440.9z"/></g>
<g class="c4"><path d="M302.6 441.5L305.6 437.5 303.3 440.9 300.3 444.2z"/></g>
<g class="c3"><path d="M299.6 445.3L302.6 441.5 300.3 444.2 297.3 447.3z"/></g>
<g class="c2"><path d="M296.6 448.8L299.6 445.3 297.3 447.3 294.3 450.1z"/><path d="M293.6 451.8L296.6 448.8 294.3 450.1 291.3 452.6z"/></g>
<g class="c1"><path d="M290.6 454.5L293.6 451.8 291.3 452.6 288.3 454.8z"/><path d="M287.6 456.8L290.6 454.5 288.3 454.8 285.3 456.8z"/></g>
<g class="c0"><path d="M284.6 458.8L287.6 456.8 285.3 456.8 282.3 458.5z"/><path d="M281.6 460.5L284.6 458.8 282.3 458.5 279.3 460z"/><path d="M278.6 462.1L281.6 460.5 279.3 460 276.4 461.4z"/><path d="M275.7 463.4L278.6 462.1 276.4 461.4 273.4 462.6z"/><path d="M272.7 464.4L275.7 463.4 273.4 462.6 270.4 463.4z"/><path d="M394.6 433L397.6 432.3 395.3 431.2 392.3 432z"/><path d="M391.6 433.3L394.6 433 392.3 432 389.3 432.6z"/><path d="M388.6 433.5L391.6 433.3 389.3 432.6 386.3 432.9z"/><path d="M385.6 433.4L388.6 433.5 386.3 432.9 383.3 433z"/><path d="M382.6 433L385.6 433.4 383.3 433 380.3 432.9z"/></g>
<g class="c1"><path d="M379.6 432.3L382.6 433 380.3 432.9 377.3 432.5z"/><path d="M376.6 431.2L379.6 432.3 377.3 432.5 374.3 431.8z"/></g>
<g class="c2"><path d="M373.6 429.6L376.6 431.2 374.3 431.8 371.3 430.7z"/><path d="M370.6 427.5L373.6 429.6 371.3 430.7 368.4 429.3z"/></g>
<g class="c3"><path d="M367.7 425L370.6 427.5 368.4 429.3 365.4 427.5z"/></g>
<g class="c4"><path d="M364.7 421.9L367.7 425 365.4 427.5 362.4 425.4z"/></g>
<g class="c5"><path d="M361.7 418.5L364.7 421.9 362.4 425.4 359.4 422.9z"/></g>
<g class="c6"><path d="M358.7 414.8L361.7 418.5 359.4 422.9 356.4 420.2z"/></g>
<g class="c7"><path d="M355.7 411L358.7 414.8 356.4 420.2 353.4 417.3z"/></g>
<g class="c8"><path d="M352.7 407.1L355.7 411 353.4 417.3 350.4 414.5z"/></g>
<g class="c9"><path d="M349.7 403.5L352.7 407.1 350.4 414.5 347.4 411.9z"/></g>
<g class="c10"><path d="M346.7 400.3L349.7 403.5 347.4 411.9 344.4 409.5z"/></g>
<g class="c11"><path d="M343.7 397.7L346.7 400.3 344.4 409.5 341.4 407.7z"/></g>
<g class="c12"><path d="M340.7 395.9L343.7 397.7 341.4 407.7 338.5 406.5z"/></g>
<g class="c13"><path d="M337.8 395.1L340.7 395.9 338.5 406.5 335.5 406.1z"/><path d="M334.8 395.4L337.8 395.1 335.5 406.1 332.5 406.5z"/><path d="M331.8 396.8L334.8 395.4 332.5 406.5 329.5 407.7z"/><path d="M328.8 399.2L331.8 396.8 329.5 407.7 326.5 409.8z"/></g>
<g class="c12"><path d="M325.8 402.6L328.8 399.2 326.5 409.8 323.5 412.6z"/></g>
<g class="c11"><path d="M322.8 406.7L325.8 402.6 323.5 412.6 320.5 416z"/></g>
<g class="c10"><path d="M319.8 411.6L322.8 406.7 320.5 416 317.5 420z"/></g>
<g class="c9"><path d="M316.8 416.8L319.8 411.6 317.5 420 314.5 424.2z"/></g>
<g class="c8"><path d="M313.8 422.3L316.8 416.8 314.5 424.2 311.5 428.7z"/></g>
<g class="c7"><path d="M310.8 427.8L313.8 422.3 311.5 428.7 308.6 433.1z"/></g>
<g class="c6"><path d="M307.9 433.1L310.8 427.8 308.6 433.1 305.6 437.5z"/></g>
<g class="c5"><path d="M304.9 438.1L307.9 433.1 305.6 437.5 302.6 441.5z"/></g>
<g class="c4"><path d="M301.9 442.8L304.9 438.1 302.6 441.5 299.6 445.3z"/></g>
<g class="c3"><path d="M298.9 446.9L301.9 442.8 299.6 445.3 296.6 448.8z"/></g>
<g class="c2"><path d="M295.9 450.6L298.9 446.9 296.6 448.8 293.6 451.8z"/><path d="M292.9 453.8L295.9 450.6 293.6 451.8 290.6 454.5z"/></g>
<g class="c1"><path d="M289.9 456.6L292.9 453.8 290.6 454.5 287.6 456.8z"/><path d="M286.9 458.9L289.9 456.6 287.6 456.8 284.6 458.8z"/></g>
<g class="c0"><path d="M283.9 460.9L286.9 458.9 284.6 458.8 281.6 460.5z"/><path d="M280.9 462.6L283.9 460.9 281.6 460.5 278.6 462.1z"/><path d="M278 464.1L280.9 462.6 278.6 462.1 275.7 463.4z"/><path d="M275 465.4L278 464.1 275.7 463.4 272.7 464.4z"/><path d="M272 466.3L275 465.4 272.7 464.4 269.7 465.2z"/><path d="M396.9 433.8L399.9 433.3 397.6 432.3 394.6 433z"/><path d="M393.9 434L396.9 433.8 394.6 433 391.6 433.3z"/><path d="M390.9 434L393.9 434 391.6 433.3 388.6 433.5z"/><path d="M387.9 433.7L390.9 434 388.6 433.5 385.6 433.4z"/></g>
<g class="c1"><path d="M384.9 433L387.9 433.7 385.6 433.4 382.6 433z"/><path d="M381.9 431.8L384.9 433 382.6 433 379.6 432.3z"/></g>
<g class="c2"><path d="M378.9 430.2L381.9 431.8 379.6 432.3 376.6 431.2z"/><path d="M375.9 428L378.9 430.2 376.6 431.2 373.6 429.6z"/></g>
<g class="c3"><path d="M372.9 425.2L375.9 428 373.6 429.6 370.6 427.5z"/></g>
<g class="c4"><path d="M370 421.8L372.9 425.2 370.6 427.5 367.7 425z"/></g>
<g class="c5"><path d="M367 417.8L370 421.8 367.7 425 364.7 421.9z"/></g>
<g class="c6"><path d="M364 413.3L367 417.8 364.7 421.9 361.7 418.5z"/></g>
<g class="c8"><path d="M361 408.4L364 413.3 361.7 418.5 358.7 414.8z"/></g>
<g class="c9"><path d="M358 403.3L361 408.4 358.7 414.8 355.7 411z"/></g>
<g class="c11"><path d="M355 398.3L358 403.3 355.7 411 352.7 407.1z"/></g>
<g class="c12"><path d="M352 393.5L355 398.3 352.7 407.1 349.7 403.5z"/></g>
<g class="c13"><path d="M349 389.2L352 393.5 349.7 403.5 346.7 400.3z"/></g>
<g class="c15"><path d="M346 385.8L349 389.2 346.7 400.3 343.7 397.7z"/></g>
<g class="c16"><path d="M343 383.4L346 385.8 343.7 397.7 340.7 395.9z"/><path d="M340.1 382.2L343 383.4 340.7 395.9 337.8 395.1z"/></g>
<g class="c17"><path d="M337.1 382.3L340.1 382.2 337.8 395.1 334.8 395.4z"/><path d="M334.1 383.8L337.1 382.3 334.8 395.4 331.8 396.8z"/></g>
<g class="c16"><path d="M331.1 386.6L334.1 383.8 331.8 396.8 328.8 399.2z"/><path d="M328.1 390.7L331.1 386.6 328.8 399.2 325.8 402.6z"/></g>
<g class="c15"><path d="M325.1 395.7L328.1 390.7 325.8 402.6 322.8 406.7z"/></g>
<g class="c13"><path d="M322.1 401.6L325.1 395.7 322.8 406.7 319.8 411.6z"/></g>
<g class="c12"><path d="M319.1 408L322.1 401.6 319.8 411.6 316.8 416.8z"/></g>
<g class="c11"><path d="M316.1 414.7L319.1 408 316.8 416.8 313.8 422.3z"/></g>
<g class="c9"><path d="M313.1 421.4L316.1 414.7 313.8 422.3 310.8 427.8z"/></g>
<g class="c8"><path d="M310.2 427.9L313.1 421.4 310.8 427.8 307.9 433.1z"/></g>
<g class="c6"><path d="M307.2 434L310.2 427.9 307.9 433.1 304.9 438.1z"/></g>
<g class="c5"><path d="M304.2 439.6L307.2 434 304.9 438.1 301.9 442.8z"/></g>
<g class="c4"><path d="M301.2 444.6L304.2 439.6 301.9 442.8 298.9 446.9z"/></g>
<g class="c3"><path d="M298.2 449.1L301.2 444.6 298.9 446.9 295.9 450.6z"/></g>
<g class="c2"><path d="M295.2 452.9L298.2 449.1 295.9 450.6 292.9 453.8z"/><path d="M292.2 456.1L295.2 452.9 292.9 453.8 289.9 456.6z"/></g>
<g class="c1"><path d="M289.2 458.9L292.2 456.1 289.9 456.6 286.9 458.9z"/><path d="M286.2 461.2L289.2 458.9 286.9 458.9 283.9 460.9z"/></g>
<g class="c0"><path d="M283.2 463.1L286.2 461.2 283.9 460.9 280.9 462.6z"/><path d="M280.2 464.8L283.2 463.1 280.9 462.6 278 464.1z"/><path d="M277.3 466.2L280.2 464.8 278 464.1 275 465.4z"/><path d="M274.3 467.3L277.3 466.2 275 465.4 272 466.3z"/><path d="M402.1 434.3L405.1 433.6 402.8 432.5 399.9 433.3z"/><path d="M399.2 434.6L402.1 434.3 399.9 433.3 396.9 433.8z"/><path d="M396.2 434.6L399.2 434.6 396.9 433.8 393.9 434z"/><path d="M393.2 434.4L396.2 434.6 393.9 434 390.9 434z"/></g>
<g class="c1"><path d="M390.2 433.8L393.2 434.4 390.9 434 387.9 433.7z"/><path d="M387.2 432.8L390.2 433.8 387.9 433.7 384.9 433z"/><path d="M384.2 431.2L387.2 432.8 384.9 433 381.9 431.8z"/></g>
<g class="c2"><path d="M381.2 429L384.2 431.2 381.9 431.8 378.9 430.2z"/></g>
<g class="c3"><path d="M378.2 426.1L381.2 429 378.9 430.2 375.9 428z"/></g>
<g class="c4"><path d="M375.2 422.4L378.2 426.1 375.9 428 372.9 425.2z"/></g>
<g class="c5"><path d="M372.2 418L375.2 422.4 372.9 425.2 370 421.8z"/></g>
<g class="c7"><path d="M369.3 412.9L372.2 418 370 421.8 367 417.8z"/></g>
<g class="c8"><path d="M366.3 407.2L369.3 412.9 367 417.8 364 413.3z"/></g>
<g class="c10"><path d="M363.3 401L366.3 407.2 364 413.3 361 408.4z"/></g>
<g class="c12"><path d="M360.3 394.5L363.3 401 361 408.4 358 403.3z"/></g>
<g class="c13"><path d="M357.3 388.1L360.3 394.5 358 403.3 355 398.3z"/></g>
<g class="c15"><path d="M354.3 382L357.3 388.1 355 398.3 352 393.5z"/></g>
<g class="c17"><path d="M351.3 376.6L354.3 382 352 393.5 349 389.2z"/></g>
<g class="c18"><path d="M348.3 372.1L351.3 376.6 349 389.2 346 385.8z"/></g>
<g class="c19"><path d="M345.3 368.9L348.3 372.1 346 385.8 343 383.4z"/></g>
<g class="c20"><path d="M342.3 367.3L345.3 368.9 343 383.4 340.1 382.2z"/></g>
<g class="c21"><path d="M339.4 367.2L342.3 367.3 340.1 382.2 337.1 382.3z"/><path d="M336.4 368.9L339.4 367.2 337.1 382.3 334.1 383.8z"/></g>
<g class="c20"><path d="M333.4 372.2L336.4 368.9 334.1 383.8 331.1 386.6z"/></g>
<g class="c19"><path d="M330.4 377L333.4 372.2 331.1 386.6 328.1 390.7z"/></g>
<g class="c18"><path d="M327.4 383L330.4 377 328.1 390.7 325.1 395.7z"/></g>
<g class="c17"><path d="M324.4 390.1L327.4 383 325.1 395.7 322.1 401.6z"/></g>
<g class="c15"><path d="M321.4 397.8L324.4 390.1 322.1 401.6 319.1 408z"/></g>
<g class="c13"><path d="M318.4 405.9L321.4 397.8 319.1 408 316.1 414.7z"/></g>
<g class="c12"><path d="M315.4 413.9L318.4 405.9 316.1 414.7 313.1 421.4z"/></g>
<g class="c10"><path d="M312.4 421.8L315.4 413.9 313.1 421.4 310.2 427.9z"/></g>
<g class="c8"><path d="M309.5 429.1L312.4 421.8 310.2 427.9 307.2 434z"/></g>
<g class="c7"><path d="M306.5 435.8L309.5 429.1 307.2 434 304.2 439.6z"/></g>
<g class="c5"><path d="M303.5 441.9L306.5 435.8 304.2 439.6 301.2 444.6z"/></g>
<g class="c4"><path d="M300.5 447.1L303.5 441.9 301.2 444.6 298.2 449.1z"/></g>
<g class="c3"><path d="M297.5 451.7L300.5 447.1 298.2 449.1 295.2 452.9z"/></g>
<g class="c2"><path d="M294.5 455.5L297.5 451.7 295.2 452.9 292.2 456.1z"/></g>
<g class="c1"><path d="M291.5 458.7L294.5 455.5 292.2 456.1 289.2 458.9z"/><path d="M288.5 461.4L291.5 458.7 289.2 458.9 286.2 461.2z"/><path d="M285.5 463.6L288.5 461.4 286.2 461.2 283.2 463.1z"/></g>
<g class="c0"><path d="M282.5 465.4L285.5 463.6 283.2 463.1 280.2 464.8z"/><path d="M279.6 466.9L282.5 465.4 280.2 464.8 277.3 466.2z"/><path d="M276.6 468.3L279.6 466.9 277.3 466.2 274.3 467.3z"/><path d="M273.6 469.2L276.6 468.3 274.3 467.3 271.3 468.1z"/><path d="M404.4 435.1L407.4 434.6 405.1 433.6 402.1 434.3z"/><path d="M401.5 435.3L404.4 435.1 402.1 434.3 399.2 434.6z"/><path d="M398.5 435.2L401.5 435.3 399.2 434.6 396.2 434.6z"/><path d="M395.5 434.8L398.5 435.2 396.2 434.6 393.2 434.4z"/></g>
<g class="c1"><path d="M392.5 433.9L395.5 434.8 393.2 434.4 390.2 433.8z"/><path d="M389.5 432.5L392.5 433.9 390.2 433.8 387.2 432.8z"/></g>
<g class="c2"><path d="M386.5 430.4L389.5 432.5 387.2 432.8 384.2 431.2z"/></g>
<g class="c3"><path d="M383.5 427.5L386.5 430.4 384.2 431.2 381.2 429z"/></g>
<g class="c4"><path d="M380.5 423.9L383.5 427.5 381.2 429 378.2 426.1z"/></g>
<g class="c5"><path d="M377.5 419.3L380.5 423.9 378.2 426.1 375.2 422.4z"/></g>
<g class="c6"><path d="M374.5 413.8L377.5 419.3 375.2 422.4 372.2 418z"/></g>
<g class="c8"><path d="M371.6 407.4L374.5 413.8 372.2 418 369.3 412.9z"/></g>
<g class="c10"><path d="M368.6 400.3L371.6 407.4 369.3 412.9 366.3 407.2z"/></g>
<g class="c12"><path d="M365.6 392.6L368.6 400.3 366.3 407.2 363.3 401z"/></g>
<g class="c14"><path d="M362.6 384.7L365.6 392.6 363.3 401 360.3 394.5z"/></g>
<g class="c17"><path d="M359.6 376.7L362.6 384.7 360.3 394.5 357.3 388.1z"/></g>
<g class="c19"><path d="M356.6 369.2L359.6 376.7 357.3 388.1 354.3 382z"/></g>
<g class="c21"><path d="M353.6 362.5L356.6 369.2 354.3 382 351.3 376.6z"/></g>
<g class="c22"><path d="M350.6 356.9L353.6 362.5 351.3 376.6 348.3 372.1z"/></g>
<g class="c24"><path d="M347.6 352.9L350.6 356.9 348.3 372.1 345.3 368.9z"/></g>
<g class="c25"><path d="M344.6 350.7L347.6 352.9 345.3 368.9 342.3 367.3z"/><path d="M341.7 350.5L344.6 350.7 342.3 367.3 339.4 367.2z"/><path d="M338.7 352.3L341.7 350.5 339.4 367.2 336.4 368.9z"/><path d="M335.7 356.1L338.7 352.3 336.4 368.9 333.4 372.2z"/></g>
<g class="c24"><path d="M332.7 361.8L335.7 356.1 333.4 372.2 330.4 377z"/></g>
<g class="c22"><path d="M329.7 368.9L332.7 361.8 330.4 377 327.4 383z"/></g>
<g class="c21"><path d="M326.7 377.3L329.7 368.9 327.4 383 324.4 390.1z"/></g>
<g class="c19"><path d="M323.7 386.4L326.7 377.3 324.4 390.1 321.4 397.8z"/></g>
<g class="c17"><path d="M320.7 396L323.7 386.4 321.4 397.8 318.4 405.9z"/></g>
<g class="c14"><path d="M317.7 405.6L320.7 396 318.4 405.9 315.4 413.9z"/></g>
<g class="c12"><path d="M314.7 414.9L317.7 405.6 315.4 413.9 312.4 421.8z"/></g>
<g class="c10"><path d="M311.7 423.6L314.7 414.9 312.4 421.8 309.5 429.1z"/></g>
<g class="c8"><path d="M308.8 431.6L311.7 423.6 309.5 429.1 306.5 435.8z"/></g>
<g class="c6"><path d="M305.8 438.7L308.8 431.6 306.5 435.8 303.5 441.9z"/></g>
<g class="c5"><path d="M302.8 444.9L305.8 438.7 303.5 441.9 300.5 447.1z"/></g>
<g class="c4"><path d="M299.8 450.2L302.8 444.9 300.5 447.1 297.5 451.7z"/></g>
<g class="c3"><path d="M296.8 454.7L299.8 450.2 297.5 451.7 294.5 455.5z"/></g>
<g class="c2"><path d="M293.8 458.4L296.8 454.7 294.5 455.5 291.5 458.7z"/></g>
<g class="c1"><path d="M290.8 461.4L293.8 458.4 291.5 458.7 288.5 461.4z"/><path d="M287.8 463.9L290.8 461.4 288.5 461.4 285.5 463.6z"/></g>
<g class="c0"><path d="M284.8 466L287.8 463.9 285.5 463.6 282.5 465.4z"/><path d="M281.8 467.7L284.8 466 282.5 465.4 279.6 466.9z"/><path d="M278.9 469.1L281.8 467.7 279.6 466.9 276.6 468.3z"/><path d="M275.9 470.3L278.9 469.1 276.6 468.3 273.6 469.2z"/><path d="M409.7 435.6L412.7 434.9 410.4 433.8 407.4 434.6z"/><path d="M406.7 435.9L409.7 435.6 407.4 434.6 404.4 435.1z"/><path d="M403.7 436L406.7 435.9 404.4 435.1 401.5 435.3z"/><path d="M400.8 435.7L403.7 436 401.5 435.3 398.5 435.2z"/></g>
<g class="c1"><path d="M397.8 435.1L400.8 435.7 398.5 435.2 395.5 434.8z"/><path d="M394.8 433.9L397.8 435.1 395.5 434.8 392.5 433.9z"/></g>
<g class="c2"><path d="M391.8 432L394.8 433.9 392.5 433.9 389.5 432.5z"/><path d="M388.8 429.4L391.8 432 389.5 432.5 386.5 430.4z"/></g>
<g class="c3"><path d="M385.8 425.9L388.8 429.4 386.5 430.4 383.5 427.5z"/></g>
<g class="c5"><path d="M382.8 421.4L385.8 425.9 383.5 427.5 380.5 423.9z"/></g>
<g class="c6"><path d="M379.8 415.8L382.8 421.4 380.5 423.9 377.5 419.3z"/></g>
<g class="c8"><path d="M376.8 409.2L379.8 415.8 377.5 419.3 374.5 413.8z"/></g>
<g class="c10"><path d="M373.8 401.5L376.8 409.2 374.5 413.8 371.6 407.4z"/></g>
<g class="c12"><path d="M370.9 392.9L373.8 401.5 371.6 407.4 368.6 400.3z"/></g>
<g class="c15"><path d="M367.9 383.6L370.9 392.9 368.6 400.3 365.6 392.6z"/></g>
<g class="c17"><path d="M364.9 374L367.9 383.6 365.6 392.6 362.6 384.7z"/></g>
<g class="c20"><path d="M361.9 364.5L364.9 374 362.6 384.7 359.6 376.7z"/></g>
<g class="c22"><path d="M358.9 355.4L361.9 364.5 359.6 376.7 356.6 369.2z"/></g>
<g class="c25"><path d="M355.9 347.3L358.9 355.4 356.6 369.2 353.6 362.5z"/></g>
<g class="c27"><path d="M352.9 340.5L355.9 347.3 353.6 362.5 350.6 356.9z"/></g>
<g class="c29"><path d="M349.9 335.6L352.9 340.5 350.6 356.9 347.6 352.9z"/></g>
<g class="c30"><path d="M346.9 332.9L349.9 335.6 347.6 352.9 344.6 350.7z"/><path d="M343.9 332.5L346.9 332.9 344.6 350.7 341.7 350.5z"/><path d="M341 334.5L343.9 332.5 341.7 350.5 338.7 352.3z"/><path d="M338 338.9L341 334.5 338.7 352.3 335.7 356.1z"/></g>
<g class="c29"><path d="M335 345.4L338 338.9 335.7 356.1 332.7 361.8z"/></g>
<g class="c27"><path d="M332 353.7L335 345.4 332.7 361.8 329.7 368.9z"/></g>
<g class="c25"><path d="M329 363.5L332 353.7 329.7 368.9 326.7 377.3z"/></g>
<g class="c22"><path d="M326 374.2L329 363.5 326.7 377.3 323.7 386.4z"/></g>
<g class="c20"><path d="M323 385.4L326 374.2 323.7 386.4 320.7 396z"/></g>
<g class="c17"><path d="M320 396.6L323 385.4 320.7 396 317.7 405.6z"/></g>
<g class="c15"><path d="M317 407.5L320 396.6 317.7 405.6 314.7 414.9z"/></g>
<g class="c12"><path d="M314 417.7L317 407.5 314.7 414.9 311.7 423.6z"/></g>
<g class="c10"><path d="M311.1 427L314 417.7 311.7 423.6 308.8 431.6z"/></g>
<g class="c8"><path d="M308.1 435.2L311.1 427 308.8 431.6 305.8 438.7z"/></g>
<g class="c6"><path d="M305.1 442.4L308.1 435.2 305.8 438.7 302.8 444.9z"/></g>
<g class="c5"><path d="M302.1 448.6L305.1 442.4 302.8 444.9 299.8 450.2z"/></g>
<g class="c3"><path d="M299.1 453.7L302.1 448.6 299.8 450.2 296.8 454.7z"/></g>
<g class="c2"><path d="M296.1 458L299.1 453.7 296.8 454.7 293.8 458.4z"/><path d="M293.1 461.4L296.1 458 293.8 458.4 290.8 461.4z"/></g>
<g class="c1"><path d="M290.1 464.2L293.1 461.4 290.8 461.4 287.8 463.9z"/><path d="M287.1 466.5L290.1 464.2 287.8 463.9 284.8 466z"/></g>
<g class="c0"><path d="M284.1 468.4L287.1 466.5 284.8 466 281.8 467.7z"/><path d="M281.2 469.9L284.1 468.4 281.8 467.7 278.9 469.1z"/><path d="M278.2 471.3L281.2 469.9 278.9 469.1 275.9 470.3z"/><path d="M275.2 472.1L278.2 471.3 275.9 470.3 272.9 471.1z"/><path d="M412 436.5L415 435.9 412.7 434.9 409.7 435.6z"/><path d="M409 436.8L412 436.5 409.7 435.6 406.7 435.9z"/><path d="M406 436.7L409 436.8 406.7 435.9 403.7 436z"/><path d="M403.1 436.3L406 436.7 403.7 436 400.8 435.7z"/></g>
<g class="c1"><path d="M400.1 435.4L403.1 436.3 400.8 435.7 397.8 435.1z"/><path d="M397.1 433.8L400.1 435.4 397.8 435.1 394.8 433.9z"/></g>
<g class="c2"><path d="M394.1 431.6L397.1 433.8 394.8 433.9 391.8 432z"/></g>
<g class="c3"><path d="M391.1 428.4L394.1 431.6 391.8 432 388.8 429.4z"/></g>
<g class="c4"><path d="M388.1 424.2L391.1 428.4 388.8 429.4 385.8 425.9z"/></g>
<g class="c5"><path d="M385.1 418.8L388.1 424.2 385.8 425.9 382.8 421.4z"/></g>
<g class="c7"><path d="M382.1 412.2L385.1 418.8 382.8 421.4 379.8 415.8z"/></g>
<g class="c9"><path d="M379.1 404.3L382.1 412.2 379.8 415.8 376.8 409.2z"/></g>
<g class="c12"><path d="M376.1 395.3L379.1 404.3 376.8 409.2 373.8 401.5z"/></g>
<g class="c14"><path d="M373.2 385.2L376.1 395.3 373.8 401.5 370.9 392.9z"/></g>
<g class="c17"><path d="M370.2 374.3L373.2 385.2 370.9 392.9 367.9 383.6z"/></g>
<g class="c20"><path d="M367.2 363L370.2 374.3 367.9 383.6 364.9 374z"/></g>
<g class="c23"><path d="M364.2 351.8L367.2 363 364.9 374 361.9 364.5z"/></g>
<g class="c26"><path d="M361.2 341.1L364.2 351.8 361.9 364.5 358.9 355.4z"/></g>
<g class="c29"><path d="M358.2 331.5L361.2 341.1 358.9 355.4 355.9 347.3z"/></g>
<g class="c32"><path d="M355.2 323.6L358.2 331.5 355.9 347.3 352.9 340.5z"/></g>
<g class="c34"><path d="M352.2 317.7L355.2 323.6 352.9 340.5 349.9 335.6z"/></g>
<g class="c35"><path d="M349.2 314.4L352.2 317.7 349.9 335.6 346.9 332.9z"/></g>
<g class="c36"><path d="M346.2 313.8L349.2 314.4 346.9 332.9 343.9 332.5z"/><path d="M343.2 316L346.2 313.8 343.9 332.5 341 334.5z"/></g>
<g class="c35"><path d="M340.3 321L343.2 316 341 334.5 338 338.9z"/></g>
<g class="c34"><path d="M337.3 328.4L340.3 321 338 338.9 335 345.4z"/></g>
<g class="c32"><path d="M334.3 338L337.3 328.4 335 345.4 332 353.7z"/></g>
<g class="c29"><path d="M331.3 349.2L334.3 338 332 353.7 329 363.5z"/></g>
<g class="c26"><path d="M328.3 361.5L331.3 349.2 329 363.5 326 374.2z"/></g>
<g class="c23"><path d="M325.3 374.3L328.3 361.5 326 374.2 323 385.4z"/></g>
<g class="c20"><path d="M322.3 387.2L325.3 374.3 323 385.4 320 396.6z"/></g>
<g class="c17"><path d="M319.3 399.7L322.3 387.2 320 396.6 317 407.5z"/></g>
<g class="c14"><path d="M316.3 411.5L319.3 399.7 317 407.5 314 417.7z"/></g>
<g class="c12"><path d="M313.3 422.1L316.3 411.5 314 417.7 311.1 427z"/></g>
<g class="c9"><path d="M310.4 431.6L313.3 422.1 311.1 427 308.1 435.2z"/></g>
<g class="c7"><path d="M307.4 439.9L310.4 431.6 308.1 435.2 305.1 442.4z"/></g>
<g class="c5"><path d="M304.4 446.9L307.4 439.9 305.1 442.4 302.1 448.6z"/></g>
<g class="c4"><path d="M301.4 452.7L304.4 446.9 302.1 448.6 299.1 453.7z"/></g>
<g class="c3"><path d="M298.4 457.5L301.4 452.7 299.1 453.7 296.1 458z"/></g>
<g class="c2"><path d="M295.4 461.4L298.4 457.5 296.1 458 293.1 461.4z"/></g>
<g class="c1"><path d="M292.4 464.5L295.4 461.4 293.1 461.4 290.1 464.2z"/><path d="M289.4 467L292.4 464.5 290.1 464.2 287.1 466.5z"/></g>
<g class="c0"><path d="M286.4 469.1L289.4 467 287.1 466.5 284.1 468.4z"/><path d="M283.4 470.8L286.4 469.1 284.1 468.4 281.2 469.9z"/><path d="M280.5 472.2L283.4 470.8 281.2 469.9 278.2 471.3z"/><path d="M277.5 473.2L280.5 472.2 278.2 471.3 275.2 472.1z"/><path d="M414.3 437.4L417.3 437 415 435.9 412 436.5z"/><path d="M411.3 437.6L414.3 437.4 412 436.5 409 436.8z"/><path d="M408.3 437.4L411.3 437.6 409 436.8 406 436.7z"/><path d="M405.3 436.8L408.3 437.4 406 436.7 403.1 436.3z"/></g>
<g class="c1"><path d="M402.4 435.6L405.3 436.8 403.1 436.3 400.1 435.4z"/><path d="M399.4 433.8L402.4 435.6 400.1 435.4 397.1 433.8z"/></g>
<g class="c2"><path d="M396.4 431.1L399.4 433.8 397.1 433.8 394.1 431.6z"/></g>
<g class="c3"><path d="M393.4 427.4L396.4 431.1 394.1 431.6 391.1 428.4z"/></g>
<g class="c5"><path d="M390.4 422.5L393.4 427.4 391.1 428.4 388.1 424.2z"/></g>
<g class="c6"><path d="M387.4 416.2L390.4 422.5 388.1 424.2 385.1 418.8z"/></g>
<g class="c8"><path d="M384.4 408.6L387.4 416.2 385.1 418.8 382.1 412.2z"/></g>
<g class="c11"><path d="M381.4 399.5L384.4 408.6 382.1 412.2 379.1 404.3z"/></g>
<g class="c13"><path d="M378.4 389.1L381.4 399.5 379.1 404.3 376.1 395.3z"/></g>
<g class="c17"><path d="M375.4 377.5L378.4 389.1 376.1 395.3 373.2 385.2z"/></g>
<g class="c20"><path d="M372.5 365L375.4 377.5 373.2 385.2 370.2 374.3z"/></g>
<g class="c23"><path d="M369.5 352L372.5 365 370.2 374.3 367.2 363z"/></g>
<g class="c27"><path d="M366.5 339.1L369.5 352 367.2 363 364.2 351.8z"/></g>
<g class="c30"><path d="M363.5 326.8L366.5 339.1 364.2 351.8 361.2 341.1z"/></g>
<g class="c34"><path d="M360.5 315.8L363.5 326.8 361.2 341.1 358.2 331.5z"/></g>
<g class="c37"><path d="M357.5 306.6L360.5 315.8 358.2 331.5 355.2 323.6z"/></g>
<g class="c39"><path d="M354.5 299.9L357.5 306.6 355.2 323.6 352.2 317.7z"/></g>
<g class="c40"><path d="M351.5 296L354.5 299.9 352.2 317.7 349.2 314.4z"/></g>
<g class="c41"><path d="M348.5 295.2L351.5 296 349.2 314.4 346.2 313.8z"/><path d="M345.5 297.6L348.5 295.2 346.2 313.8 343.2 316z"/></g>
<g class="c40"><path d="M342.6 303.1L345.5 297.6 343.2 316 340.3 321z"/></g>
<g class="c39"><path d="M339.6 311.5L342.6 303.1 340.3 321 337.3 328.4z"/></g>
<g class="c37"><path d="M336.6 322.3L339.6 311.5 337.3 328.4 334.3 338z"/></g>
<g class="c34"><path d="M333.6 334.9L336.6 322.3 334.3 338 331.3 349.2z"/></g>
<g class="c30"><path d="M330.6 348.8L333.6 334.9 331.3 349.2 328.3 361.5z"/></g>
<g class="c27"><path d="M327.6 363.3L330.6 348.8 328.3 361.5 325.3 374.3z"/></g>
<g class="c23"><path d="M324.6 377.9L327.6 363.3 325.3 374.3 322.3 387.2z"/></g>
<g class="c20"><path d="M321.6 392L324.6 377.9 322.3 387.2 319.3 399.7z"/></g>
<g class="c17"><path d="M318.6 405.3L321.6 392 319.3 399.7 316.3 411.5z"/></g>
<g class="c13"><path d="M315.6 417.3L318.6 405.3 316.3 411.5 313.3 422.1z"/></g>
<g class="c11"><path d="M312.7 428L315.6 417.3 313.3 422.1 310.4 431.6z"/></g>
<g class="c8"><path d="M309.7 437.3L312.7 428 310.4 431.6 307.4 439.9z"/></g>
<g class="c6"><path d="M306.7 445.1L309.7 437.3 307.4 439.9 304.4 446.9z"/></g>
<g class="c5"><path d="M303.7 451.7L306.7 445.1 304.4 446.9 301.4 452.7z"/></g>
<g class="c3"><path d="M300.7 457L303.7 451.7 301.4 452.7 298.4 457.5z"/></g>
<g class="c2"><path d="M297.7 461.3L300.7 457 298.4 457.5 295.4 461.4z"/></g>
<g class="c1"><path d="M294.7 464.8L297.7 461.3 295.4 461.4 292.4 464.5z"/><path d="M291.7 467.6L294.7 464.8 292.4 464.5 289.4 467z"/></g>
<g class="c0"><path d="M288.7 469.8L291.7 467.6 289.4 467 286.4 469.1z"/><path d="M285.7 471.6L288.7 469.8 286.4 469.1 283.4 470.8z"/><path d="M282.8 473.1L285.7 471.6 283.4 470.8 280.5 472.2z"/><path d="M279.8 474.2L282.8 473.1 280.5 472.2 277.5 473.2z"/><path d="M416.6 438.4L419.6 438 417.3 437 414.3 437.4z"/><path d="M413.6 438.4L416.6 438.4 414.3 437.4 411.3 437.6z"/><path d="M410.6 438.1L413.6 438.4 411.3 437.6 408.3 437.4z"/></g>
<g class="c1"><path d="M407.6 437.3L410.6 438.1 408.3 437.4 405.3 436.8z"/><path d="M404.7 436L407.6 437.3 405.3 436.8 402.4 435.6z"/></g>
<g class="c2"><path d="M401.7 433.8L404.7 436 402.4 435.6 399.4 433.8z"/></g>
<g class="c3"><path d="M398.7 430.7L401.7 433.8 399.4 433.8 396.4 431.1z"/></g>
<g class="c4"><path d="M395.7 426.5L398.7 430.7 396.4 431.1 393.4 427.4z"/></g>
<g class="c5"><path d="M392.7 420.9L395.7 426.5 393.4 427.4 390.4 422.5z"/></g>
<g class="c7"><path d="M389.7 413.8L392.7 420.9 390.4 422.5 387.4 416.2z"/></g>
<g class="c9"><path d="M386.7 405.2L389.7 413.8 387.4 416.2 384.4 408.6z"/></g>
<g class="c12"><path d="M383.7 395L386.7 405.2 384.4 408.6 381.4 399.5z"/></g>
<g class="c15"><path d="M380.7 383.2L383.7 395 381.4 399.5 378.4 389.1z"/></g>
<g class="c19"><path d="M377.7 370.2L380.7 383.2 378.4 389.1 375.4 377.5z"/></g>
<g class="c22"><path d="M374.7 356.1L377.7 370.2 375.4 377.5 372.5 365z"/></g>
<g class="c26"><path d="M371.8 341.6L374.7 356.1 372.5 365 369.5 352z"/></g>
<g class="c30"><path d="M368.8 327.1L371.8 341.6 369.5 352 366.5 339.1z"/></g>
<g class="c34"><path d="M365.8 313.3L368.8 327.1 366.5 339.1 363.5 326.8z"/></g>
<g class="c38"><path d="M362.8 300.9L365.8 313.3 363.5 326.8 360.5 315.8z"/></g>
<g class="c41"><path d="M359.8 290.5L362.8 300.9 360.5 315.8 357.5 306.6z"/></g>
<g class="c44"><path d="M356.8 282.9L359.8 290.5 357.5 306.6 354.5 299.9z"/></g>
<g class="c46"><path d="M353.8 278.4L356.8 282.9 354.5 299.9 351.5 296z"/></g>
<g class="c47"><path d="M350.8 277.5L353.8 278.4 351.5 296 348.5 295.2z"/><path d="M347.8 280.1L350.8 277.5 348.5 295.2 345.5 297.6z"/></g>
<g class="c46"><path d="M344.8 286.1L347.8 280.1 345.5 297.6 342.6 303.1z"/></g>
<g class="c44"><path d="M341.9 295.4L344.8 286.1 342.6 303.1 339.6 311.5z"/></g>
<g class="c41"><path d="M338.9 307.3L341.9 295.4 339.6 311.5 336.6 322.3z"/></g>
<g class="c38"><path d="M335.9 321.4L338.9 307.3 336.6 322.3 333.6 334.9z"/></g>
<g class="c34"><path d="M332.9 336.8L335.9 321.4 333.6 334.9 330.6 348.8z"/></g>
<g class="c30"><path d="M329.9 352.9L332.9 336.8 330.6 348.8 327.6 363.3z"/></g>
<g class="c26"><path d="M326.9 369.1L329.9 352.9 327.6 363.3 324.6 377.9z"/></g>
<g class="c22"><path d="M323.9 384.7L326.9 369.1 324.6 377.9 321.6 392z"/></g>
<g class="c19"><path d="M320.9 399.4L323.9 384.7 321.6 392 318.6 405.3z"/></g>
<g class="c15"><path d="M317.9 412.8L320.9 399.4 318.6 405.3 315.6 417.3z"/></g>
<g class="c12"><path d="M314.9 424.6L317.9 412.8 315.6 417.3 312.7 428z"/></g>
<g class="c9"><path d="M312 434.9L314.9 424.6 312.7 428 309.7 437.3z"/></g>
<g class="c7"><path d="M309 443.6L312 434.9 309.7 437.3 306.7 445.1z"/></g>
<g class="c5"><path d="M306 450.8L309 443.6 306.7 445.1 303.7 451.7z"/></g>
<g class="c4"><path d="M303 456.6L306 450.8 303.7 451.7 300.7 457z"/></g>
<g class="c3"><path d="M300 461.3L303 456.6 300.7 457 297.7 461.3z"/></g>
<g class="c2"><path d="M297 465.1L300 461.3 297.7 461.3 294.7 464.8z"/></g>
<g class="c1"><path d="M294 468.1L297 465.1 294.7 464.8 291.7 467.6z"/><path d="M291 470.5L294 468.1 291.7 467.6 288.7 469.8z"/></g>
<g class="c0"><path d="M288 472.4L291 470.5 288.7 469.8 285.7 471.6z"/><path d="M285 474L288 472.4 285.7 471.6 282.8 473.1z"/><path d="M282.1 475.3L285 474 282.8 473.1 279.8 474.2z"/><path d="M421.9 439L424.9 438.3 422.6 437.2 419.6 438z"/><path d="M418.9 439.3L421.9 439 419.6 438 416.6 438.4z"/><path d="M415.9 439.2L418.9 439.3 416.6 438.4 413.6 438.4z"/><path d="M412.9 438.8L415.9 439.2 413.6 438.4 410.6 438.1z"/></g>
<g class="c1"><path d="M409.9 437.9L412.9 438.8 410.6 438.1 407.6 437.3z"/><path d="M406.9 436.4L409.9 437.9 407.6 437.3 404.7 436z"/></g>
<g class="c2"><path d="M404 433.9L406.9 436.4 404.7 436 401.7 433.8z"/></g>
<g class="c3"><path d="M401 430.5L404 433.9 401.7 433.8 398.7 430.7z"/></g>
<g class="c4"><path d="M398 425.7L401 430.5 398.7 430.7 395.7 426.5z"/></g>
<g class="c6"><path d="M395 419.5L398 425.7 395.7 426.5 392.7 420.9z"/></g>
<g class="c8"><path d="M392 411.8L395 419.5 392.7 420.9 389.7 413.8z"/></g>
<g class="c10"><path d="M389 402.2L392 411.8 389.7 413.8 386.7 405.2z"/></g>
<g class="c13"><path d="M386 391L389 402.2 386.7 405.2 383.7 395z"/></g>
<g class="c17"><path d="M383 378L386 391 383.7 395 380.7 383.2z"/></g>
<g class="c21"><path d="M380 363.7L383 378 380.7 383.2 377.7 370.2z"/></g>
<g class="c25"><path d="M377 348.2L380 363.7 377.7 370.2 374.7 356.1z"/></g>
<g class="c29"><path d="M374.1 332.2L377 348.2 374.7 356.1 371.8 341.6z"/></g>
<g class="c34"><path d="M371.1 316.3L374.1 332.2 371.8 341.6 368.8 327.1z"/></g>
<g class="c38"><path d="M368.1 301.1L371.1 316.3 368.8 327.1 365.8 313.3z"/></g>
<g class="c42"><path d="M365.1 287.5L368.1 301.1 365.8 313.3 362.8 300.9z"/></g>
<g class="c46"><path d="M362.1 276.1L365.1 287.5 362.8 300.9 359.8 290.5z"/></g>
<g class="c48"><path d="M359.1 267.7L362.1 276.1 359.8 290.5 356.8 282.9z"/></g>
<g class="c50"><path d="M356.1 262.7L359.1 267.7 356.8 282.9 353.8 278.4z"/></g>
<g class="c51"><path d="M353.1 261.6L356.1 262.7 353.8 278.4 350.8 277.5z"/><path d="M350.1 264.3L353.1 261.6 350.8 277.5 347.8 280.1z"/></g>
<g class="c50"><path d="M347.1 270.9L350.1 264.3 347.8 280.1 344.8 286.1z"/></g>
<g class="c48"><path d="M344.2 280.9L347.1 270.9 344.8 286.1 341.9 295.4z"/></g>
<g class="c46"><path d="M341.2 293.9L344.2 280.9 341.9 295.4 338.9 307.3z"/></g>
<g class="c42"><path d="M338.2 309.2L341.2 293.9 338.9 307.3 335.9 321.4z"/></g>
<g class="c38"><path d="M335.2 326L338.2 309.2 335.9 321.4 332.9 336.8z"/></g>
<g class="c34"><path d="M332.2 343.6L335.2 326 332.9 336.8 329.9 352.9z"/></g>
<g class="c29"><path d="M329.2 361.2L332.2 343.6 329.9 352.9 326.9 369.1z"/></g>
<g class="c25"><path d="M326.2 378.3L329.2 361.2 326.9 369.1 323.9 384.7z"/></g>
<g class="c21"><path d="M323.2 394.2L326.2 378.3 323.9 384.7 320.9 399.4z"/></g>
<g class="c17"><path d="M320.2 408.8L323.2 394.2 320.9 399.4 317.9 412.8z"/></g>
<g class="c13"><path d="M317.2 421.7L320.2 408.8 317.9 412.8 314.9 424.6z"/></g>
<g class="c10"><path d="M314.3 432.8L317.2 421.7 314.9 424.6 312 434.9z"/></g>
<g class="c8"><path d="M311.3 442.2L314.3 432.8 312 434.9 309 443.6z"/></g>
<g class="c6"><path d="M308.3 450L311.3 442.2 309 443.6 306 450.8z"/></g>
<g class="c4"><path d="M305.3 456.4L308.3 450 306 450.8 303 456.6z"/></g>
<g class="c3"><path d="M302.3 461.5L305.3 456.4 303 456.6 300 461.3z"/></g>
<g class="c2"><path d="M299.3 465.5L302.3 461.5 300 461.3 297 465.1z"/></g>
<g class="c1"><path d="M296.3 468.7L299.3 465.5 297 465.1 294 468.1z"/><path d="M293.3 471.2L296.3 468.7 294 468.1 291 470.5z"/></g>
<g class="c0"><path d="M290.3 473.3L293.3 471.2 291 470.5 288 472.4z"/><path d="M287.3 474.9L290.3 473.3 288 472.4 285 474z"/><path d="M284.3 476.3L287.3 474.9 285 474 282.1 475.3z"/><path d="M281.4 477.2L284.3 476.3 282.1 475.3 279.1 476.1z"/><path d="M424.2 440L427.2 439.3 424.9 438.3 421.9 439z"/><path d="M421.2 440.2L424.2 440 421.9 439 418.9 439.3z"/><path d="M418.2 440.1L421.2 440.2 418.9 439.3 415.9 439.2z"/><path d="M415.2 439.6L418.2 440.1 415.9 439.2 412.9 438.8z"/></g>
<g class="c1"><path d="M412.2 438.6L415.2 439.6 412.9 438.8 409.9 437.9z"/><path d="M409.2 436.8L412.2 438.6 409.9 437.9 406.9 436.4z"/></g>
<g class="c2"><path d="M406.2 434.2L409.2 436.8 406.9 436.4 404 433.9z"/></g>
<g class="c3"><path d="M403.3 430.4L406.2 434.2 404 433.9 401 430.5z"/></g>
<g class="c5"><path d="M400.3 425.3L403.3 430.4 401 430.5 398 425.7z"/></g>
<g class="c6"><path d="M397.3 418.6L400.3 425.3 398 425.7 395 419.5z"/></g>
<g class="c9"><path d="M394.3 410.2L397.3 418.6 395 419.5 392 411.8z"/></g>
<g class="c11"><path d="M391.3 399.9L394.3 410.2 392 411.8 389 402.2z"/></g>
<g class="c15"><path d="M388.3 387.8L391.3 399.9 389 402.2 386 391z"/></g>
<g class="c18"><path d="M385.3 373.8L388.3 387.8 386 391 383 378z"/></g>
<g class="c22"><path d="M382.3 358.4L385.3 373.8 383 378 380 363.7z"/></g>
<g class="c27"><path d="M379.3 341.8L382.3 358.4 380 363.7 377 348.2z"/></g>
<g class="c32"><path d="M376.3 324.5L379.3 341.8 377 348.2 374.1 332.2z"/></g>
<g class="c37"><path d="M373.4 307.4L376.3 324.5 374.1 332.2 371.1 316.3z"/></g>
<g class="c41"><path d="M370.4 291L373.4 307.4 371.1 316.3 368.1 301.1z"/></g>
<g class="c46"><path d="M367.4 276.3L370.4 291 368.1 301.1 365.1 287.5z"/></g>
<g class="c49"><path d="M364.4 264.1L367.4 276.3 365.1 287.5 362.1 276.1z"/></g>
<g class="c52"><path d="M361.4 255L364.4 264.1 362.1 276.1 359.1 267.7z"/></g>
<g class="c55"><path d="M358.4 249.6L361.4 255 359.1 267.7 356.1 262.7z"/></g>
<g class="c56"><path d="M355.4 248.3L358.4 249.6 356.1 262.7 353.1 261.6z"/><path d="M352.4 251.2L355.4 248.3 353.1 261.6 350.1 264.3z"/></g>
<g class="c55"><path d="M349.4 258.2L352.4 251.2 350.1 264.3 347.1 270.9z"/></g>
<g class="c52"><path d="M346.4 268.9L349.4 258.2 347.1 270.9 344.2 280.9z"/></g>
<g class="c49"><path d="M343.5 282.8L346.4 268.9 344.2 280.9 341.2 293.9z"/></g>
<g class="c46"><path d="M340.5 299.1L343.5 282.8 341.2 293.9 338.2 309.2z"/></g>
<g class="c41"><path d="M337.5 317.1L340.5 299.1 338.2 309.2 335.2 326z"/></g>
<g class="c37"><path d="M334.5 335.9L337.5 317.1 335.2 326 332.2 343.6z"/></g>
<g class="c32"><path d="M331.5 354.7L334.5 335.9 332.2 343.6 329.2 361.2z"/></g>
<g class="c27"><path d="M328.5 373L331.5 354.7 329.2 361.2 326.2 378.3z"/></g>
<g class="c22"><path d="M325.5 390L328.5 373 326.2 378.3 323.2 394.2z"/></g>
<g class="c18"><path d="M322.5 405.6L325.5 390 323.2 394.2 320.2 408.8z"/></g>
<g class="c15"><path d="M319.5 419.3L322.5 405.6 320.2 408.8 317.2 421.7z"/></g>
<g class="c11"><path d="M316.5 431.2L319.5 419.3 317.2 421.7 314.3 432.8z"/></g>
<g class="c9"><path d="M313.6 441.3L316.5 431.2 314.3 432.8 311.3 442.2z"/></g>
<g class="c6"><path d="M310.6 449.6L313.6 441.3 311.3 442.2 308.3 450z"/></g>
<g class="c5"><path d="M307.6 456.3L310.6 449.6 308.3 450 305.3 456.4z"/></g>
<g class="c3"><path d="M304.6 461.7L307.6 456.3 305.3 456.4 302.3 461.5z"/></g>
<g class="c2"><path d="M301.6 466L304.6 461.7 302.3 461.5 299.3 465.5z"/></g>
<g class="c1"><path d="M298.6 469.4L301.6 466 299.3 465.5 296.3 468.7z"/><path d="M295.6 472L298.6 469.4 296.3 468.7 293.3 471.2z"/></g>
<g class="c0"><path d="M292.6 474.1L295.6 472 293.3 471.2 290.3 473.3z"/><path d="M289.6 475.8L292.6 474.1 290.3 473.3 287.3 474.9z"/><path d="M286.6 477.3L289.6 475.8 287.3 474.9 284.3 476.3z"/><path d="M283.7 478.2L286.6 477.3 284.3 476.3 281.4 477.2z"/><path d="M426.5 441L429.5 440.4 427.2 439.3 424.2 440z"/><path d="M423.5 441.2L426.5 441 424.2 440 421.2 440.2z"/><path d="M420.5 441.1L423.5 441.2 421.2 440.2 418.2 440.1z"/><path d="M417.5 440.5L420.5 441.1 418.2 440.1 415.2 439.6z"/></g>
<g class="c1"><path d="M414.5 439.4L417.5 440.5 415.2 439.6 412.2 438.6z"/><path d="M411.5 437.5L414.5 439.4 412.2 438.6 409.2 436.8z"/></g>
<g class="c2"><path d="M408.5 434.6L411.5 437.5 409.2 436.8 406.2 434.2z"/></g>
<g class="c3"><path d="M405.6 430.6L408.5 434.6 406.2 434.2 403.3 430.4z"/></g>
<g class="c5"><path d="M402.6 425.2L405.6 430.6 403.3 430.4 400.3 425.3z"/></g>
<g class="c7"><path d="M399.6 418.1L402.6 425.2 400.3 425.3 397.3 418.6z"/></g>
<g class="c9"><path d="M396.6 409.2L399.6 418.1 397.3 418.6 394.3 410.2z"/></g>
<g class="c12"><path d="M393.6 398.4L396.6 409.2 394.3 410.2 391.3 399.9z"/></g>
<g class="c16"><path d="M390.6 385.6L393.6 398.4 391.3 399.9 388.3 387.8z"/></g>
<g class="c19"><path d="M387.6 370.9L390.6 385.6 388.3 387.8 385.3 373.8z"/></g>
<g class="c24"><path d="M384.6 354.6L387.6 370.9 385.3 373.8 382.3 358.4z"/></g>
<g class="c29"><path d="M381.6 337.1L384.6 354.6 382.3 358.4 379.3 341.8z"/></g>
<g class="c34"><path d="M378.6 319L381.6 337.1 379.3 341.8 376.3 324.5z"/></g>
<g class="c39"><path d="M375.7 300.9L378.6 319 376.3 324.5 373.4 307.4z"/></g>
<g class="c44"><path d="M372.7 283.6L375.7 300.9 373.4 307.4 370.4 291z"/></g>
<g class="c48"><path d="M369.7 268.2L372.7 283.6 370.4 291 367.4 276.3z"/></g>
<g class="c52"><path d="M366.7 255.2L369.7 268.2 367.4 276.3 364.4 264.1z"/></g>
<g class="c56"><path d="M363.7 245.6L366.7 255.2 364.4 264.1 361.4 255z"/></g>
<g class="c58"><path d="M360.7 239.9L363.7 245.6 361.4 255 358.4 249.6z"/></g>
<g class="c59"><path d="M357.7 238.5L360.7 239.9 358.4 249.6 355.4 248.3z"/><path d="M354.7 241.6L357.7 238.5 355.4 248.3 352.4 251.2z"/></g>
<g class="c58"><path d="M351.7 248.9L354.7 241.6 352.4 251.2 349.4 258.2z"/></g>
<g class="c56"><path d="M348.7 260.1L351.7 248.9 349.4 258.2 346.4 268.9z"/></g>
<g class="c52"><path d="M345.8 274.6L348.7 260.1 346.4 268.9 343.5 282.8z"/></g>
<g class="c48"><path d="M342.8 291.7L345.8 274.6 343.5 282.8 340.5 299.1z"/></g>
<g class="c44"><path d="M339.8 310.6L342.8 291.7 340.5 299.1 337.5 317.1z"/></g>
<g class="c39"><path d="M336.8 330.3L339.8 310.6 337.5 317.1 334.5 335.9z"/></g>
<g class="c34"><path d="M333.8 350.1L336.8 330.3 334.5 335.9 331.5 354.7z"/></g>
<g class="c29"><path d="M330.8 369.2L333.8 350.1 331.5 354.7 328.5 373z"/></g>
<g class="c24"><path d="M327.8 387.1L330.8 369.2 328.5 373 325.5 390z"/></g>
<g class="c19"><path d="M324.8 403.4L327.8 387.1 325.5 390 322.5 405.6z"/></g>
<g class="c16"><path d="M321.8 417.8L324.8 403.4 322.5 405.6 319.5 419.3z"/></g>
<g class="c12"><path d="M318.8 430.3L321.8 417.8 319.5 419.3 316.5 431.2z"/></g>
<g class="c9"><path d="M315.8 440.8L318.8 430.3 316.5 431.2 313.6 441.3z"/></g>
<g class="c7"><path d="M312.9 449.5L315.8 440.8 313.6 441.3 310.6 449.6z"/></g>
<g class="c5"><path d="M309.9 456.5L312.9 449.5 310.6 449.6 307.6 456.3z"/></g>
<g class="c3"><path d="M306.9 462.2L309.9 456.5 307.6 456.3 304.6 461.7z"/></g>
<g class="c2"><path d="M303.9 466.6L306.9 462.2 304.6 461.7 301.6 466z"/></g>
<g class="c1"><path d="M300.9 470.1L303.9 466.6 301.6 466 298.6 469.4z"/><path d="M297.9 472.9L300.9 470.1 298.6 469.4 295.6 472z"/></g>
<g class="c0"><path d="M294.9 475.1L297.9 472.9 295.6 472 292.6 474.1z"/><path d="M291.9 476.8L294.9 475.1 292.6 474.1 289.6 475.8z"/><path d="M288.9 478.3L291.9 476.8 289.6 475.8 286.6 477.3z"/><path d="M285.9 479.3L288.9 478.3 286.6 477.3 283.7 478.2z"/><path d="M428.8 442L431.8 441.5 429.5 440.4 426.5 441z"/><path d="M425.8 442.2L428.8 442 426.5 441 423.5 441.2z"/><path d="M422.8 442L425.8 442.2 423.5 441.2 420.5 441.1z"/><path d="M419.8 441.4L422.8 442 420.5 441.1 417.5 440.5z"/></g>
<g class="c1"><path d="M416.8 440.2L419.8 441.4 417.5 440.5 414.5 439.4z"/></g>
<g class="c2"><path d="M413.8 438.3L416.8 440.2 414.5 439.4 411.5 437.5z"/><path d="M410.8 435.3L413.8 438.3 411.5 437.5 408.5 434.6z"/></g>
<g class="c4"><path d="M407.8 431.2L410.8 435.3 408.5 434.6 405.6 430.6z"/></g>
<g class="c5"><path d="M404.9 425.5L407.8 431.2 405.6 430.6 402.6 425.2z"/></g>
<g class="c7"><path d="M401.9 418.2L404.9 425.5 402.6 425.2 399.6 418.1z"/></g>
<g class="c10"><path d="M398.9 409L401.9 418.2 399.6 418.1 396.6 409.2z"/></g>
<g class="c13"><path d="M395.9 397.8L398.9 409 396.6 409.2 393.6 398.4z"/></g>
<g class="c16"><path d="M392.9 384.6L395.9 397.8 393.6 398.4 390.6 385.6z"/></g>
<g class="c20"><path d="M389.9 369.5L392.9 384.6 390.6 385.6 387.6 370.9z"/></g>
<g class="c25"><path d="M386.9 352.7L389.9 369.5 387.6 370.9 384.6 354.6z"/></g>
<g class="c30"><path d="M383.9 334.6L386.9 352.7 384.6 354.6 381.6 337.1z"/></g>
<g class="c35"><path d="M380.9 315.9L383.9 334.6 381.6 337.1 378.6 319z"/></g>
<g class="c40"><path d="M377.9 297.2L380.9 315.9 378.6 319 375.7 300.9z"/></g>
<g class="c46"><path d="M375 279.4L377.9 297.2 375.7 300.9 372.7 283.6z"/></g>
<g class="c50"><path d="M372 263.4L375 279.4 372.7 283.6 369.7 268.2z"/></g>
<g class="c55"><path d="M369 250.1L372 263.4 369.7 268.2 366.7 255.2z"/></g>
<g class="c58"><path d="M366 240.2L369 250.1 366.7 255.2 363.7 245.6z"/></g>
<g class="c60"><path d="M363 234.3L366 240.2 363.7 245.6 360.7 239.9z"/></g>
<g class="c62"><path d="M360 232.8L363 234.3 360.7 239.9 357.7 238.5z"/><path d="M357 235.9L360 232.8 357.7 238.5 354.7 241.6z"/></g>
<g class="c60"><path d="M354 243.4L357 235.9 354.7 241.6 351.7 248.9z"/></g>
<g class="c58"><path d="M351 255L354 243.4 351.7 248.9 348.7 260.1z"/></g>
<g class="c55"><path d="M348 269.9L351 255 348.7 260.1 345.8 274.6z"/></g>
<g class="c50"><path d="M345.1 287.5L348 269.9 345.8 274.6 342.8 291.7z"/></g>
<g class="c46"><path d="M342.1 306.9L345.1 287.5 342.8 291.7 339.8 310.6z"/></g>
<g class="c40"><path d="M339.1 327.2L342.1 306.9 339.8 310.6 336.8 330.3z"/></g>
<g class="c35"><path d="M336.1 347.5L339.1 327.2 336.8 330.3 333.8 350.1z"/></g>
<g class="c30"><path d="M333.1 367.2L336.1 347.5 333.8 350.1 330.8 369.2z"/></g>
<g class="c25"><path d="M330.1 385.7L333.1 367.2 330.8 369.2 327.8 387.1z"/></g>
<g class="c20"><path d="M327.1 402.4L330.1 385.7 327.8 387.1 324.8 403.4z"/></g>
<g class="c16"><path d="M324.1 417.3L327.1 402.4 324.8 403.4 321.8 417.8z"/></g>
<g class="c13"><path d="M321.1 430.1L324.1 417.3 321.8 417.8 318.8 430.3z"/></g>
<g class="c10"><path d="M318.1 440.9L321.1 430.1 318.8 430.3 315.8 440.8z"/></g>
<g class="c7"><path d="M315.2 449.8L318.1 440.9 315.8 440.8 312.9 449.5z"/></g>
<g class="c5"><path d="M312.2 457.1L315.2 449.8 312.9 449.5 309.9 456.5z"/></g>
<g class="c4"><path d="M309.2 462.8L312.2 457.1 309.9 456.5 306.9 462.2z"/></g>
<g class="c2"><path d="M306.2 467.4L309.2 462.8 306.9 462.2 303.9 466.6z"/><path d="M303.2 471L306.2 467.4 303.9 466.6 300.9 470.1z"/></g>
<g class="c1"><path d="M300.2 473.8L303.2 471 300.9 470.1 297.9 472.9z"/></g>
<g class="c0"><path d="M297.2 476L300.2 473.8 297.9 472.9 294.9 475.1z"/><path d="M294.2 477.8L297.2 476 294.9 475.1 291.9 476.8z"/><path d="M291.2 479.3L294.2 477.8 291.9 476.8 288.9 478.3z"/><path d="M288.2 480.3L291.2 479.3 288.9 478.3 285.9 479.3z"/><path d="M431.1 443.1L434.1 442.5 431.8 441.5 428.8 442z"/><path d="M428.1 443.2L431.1 443.1 428.8 442 425.8 442.2z"/><path d="M425.1 443.1L428.1 443.2 425.8 442.2 422.8 442z"/><path d="M422.1 442.4L425.1 443.1 422.8 442 419.8 441.4z"/></g>
<g class="c1"><path d="M419.1 441.2L422.1 442.4 419.8 441.4 416.8 440.2z"/></g>
<g class="c2"><path d="M416.1 439.2L419.1 441.2 416.8 440.2 413.8 438.3z"/></g>
<g class="c3"><path d="M413.1 436.2L416.1 439.2 413.8 438.3 410.8 435.3z"/></g>
<g class="c4"><path d="M410.1 432L413.1 436.2 410.8 435.3 407.8 431.2z"/></g>
<g class="c5"><path d="M407.2 426.3L410.1 432 407.8 431.2 404.9 425.5z"/></g>
<g class="c7"><path d="M404.2 419L407.2 426.3 404.9 425.5 401.9 418.2z"/></g>
<g class="c10"><path d="M401.2 409.7L404.2 419 401.9 418.2 398.9 409z"/></g>
<g class="c13"><path d="M398.2 398.4L401.2 409.7 398.9 409 395.9 397.8z"/></g>
<g class="c17"><path d="M395.2 385L398.2 398.4 395.9 397.8 392.9 384.6z"/></g>
<g class="c21"><path d="M392.2 369.7L395.2 385 392.9 384.6 389.9 369.5z"/></g>
<g class="c25"><path d="M389.2 352.7L392.2 369.7 389.9 369.5 386.9 352.7z"/></g>
<g class="c30"><path d="M386.2 334.4L389.2 352.7 386.9 352.7 383.9 334.6z"/></g>
<g class="c36"><path d="M383.2 315.5L386.2 334.4 383.9 334.6 380.9 315.9z"/></g>
<g class="c41"><path d="M380.2 296.6L383.2 315.5 380.9 315.9 377.9 297.2z"/></g>
<g class="c47"><path d="M377.3 278.7L380.2 296.6 377.9 297.2 375 279.4z"/></g>
<g class="c51"><path d="M374.3 262.5L377.3 278.7 375 279.4 372 263.4z"/></g>
<g class="c56"><path d="M371.3 249.1L374.3 262.5 372 263.4 369 250.1z"/></g>
<g class="c59"><path d="M368.3 239L371.3 249.1 369 250.1 366 240.2z"/></g>
<g class="c62"><path d="M365.3 233.1L368.3 239 366 240.2 363 234.3z"/></g>
<g class="c63"><path d="M362.3 231.6L365.3 233.1 363 234.3 360 232.8z"/><path d="M359.3 234.7L362.3 231.6 360 232.8 357 235.9z"/></g>
<g class="c62"><path d="M356.3 242.3L359.3 234.7 357 235.9 354 243.4z"/></g>
<g class="c59"><path d="M353.3 253.9L356.3 242.3 354 243.4 351 255z"/></g>
<g class="c56"><path d="M350.3 269L353.3 253.9 351 255 348 269.9z"/></g>
<g class="c51"><path d="M347.3 286.8L350.3 269 348 269.9 345.1 287.5z"/></g>
<g class="c47"><path d="M344.4 306.4L347.3 286.8 345.1 287.5 342.1 306.9z"/></g>
<g class="c41"><path d="M341.4 326.8L344.4 306.4 342.1 306.9 339.1 327.2z"/></g>
<g class="c36"><path d="M338.4 347.4L341.4 326.8 339.1 327.2 336.1 347.5z"/></g>
<g class="c30"><path d="M335.4 367.3L338.4 347.4 336.1 347.5 333.1 367.2z"/></g>
<g class="c25"><path d="M332.4 385.9L335.4 367.3 333.1 367.2 330.1 385.7z"/></g>
<g class="c21"><path d="M329.4 402.8L332.4 385.9 330.1 385.7 327.1 402.4z"/></g>
<g class="c17"><path d="M326.4 417.8L329.4 402.8 327.1 402.4 324.1 417.3z"/></g>
<g class="c13"><path d="M323.4 430.7L326.4 417.8 324.1 417.3 321.1 430.1z"/></g>
<g class="c10"><path d="M320.4 441.6L323.4 430.7 321.1 430.1 318.1 440.9z"/></g>
<g class="c7"><path d="M317.4 450.6L320.4 441.6 318.1 440.9 315.2 449.8z"/></g>
<g class="c5"><path d="M314.5 457.9L317.4 450.6 315.2 449.8 312.2 457.1z"/></g>
<g class="c4"><path d="M311.5 463.8L314.5 457.9 312.2 457.1 309.2 462.8z"/></g>
<g class="c3"><path d="M308.5 468.4L311.5 463.8 309.2 462.8 306.2 467.4z"/></g>
<g class="c2"><path d="M305.5 472L308.5 468.4 306.2 467.4 303.2 471z"/></g>
<g class="c1"><path d="M302.5 474.8L305.5 472 303.2 471 300.2 473.8z"/></g>
<g class="c0"><path d="M299.5 477.1L302.5 474.8 300.2 473.8 297.2 476z"/><path d="M296.5 478.9L299.5 477.1 297.2 476 294.2 477.8z"/><path d="M293.5 480.3L296.5 478.9 294.2 477.8 291.2 479.3z"/><path d="M290.5 481.4L293.5 480.3 291.2 479.3 288.2 480.3z"/><path d="M433.4 444.1L436.4 443.6 434.1 442.5 431.1 443.1z"/><path d="M430.4 444.3L433.4 444.1 431.1 443.1 428.1 443.2z"/><path d="M427.4 444.1L430.4 444.3 428.1 443.2 425.1 443.1z"/><path d="M424.4 443.5L427.4 444.1 425.1 443.1 422.1 442.4z"/></g>
<g class="c1"><path d="M421.4 442.3L424.4 443.5 422.1 442.4 419.1 441.2z"/></g>
<g class="c2"><path d="M418.4 440.4L421.4 442.3 419.1 441.2 416.1 439.2z"/></g>
<g class="c3"><path d="M415.4 437.4L418.4 440.4 416.1 439.2 413.1 436.2z"/></g>
<g class="c4"><path d="M412.4 433.3L415.4 437.4 413.1 436.2 410.1 432z"/></g>
<g class="c5"><path d="M409.4 427.6L412.4 433.3 410.1 432 407.2 426.3z"/></g>
<g class="c7"><path d="M406.5 420.3L409.4 427.6 407.2 426.3 404.2 419z"/></g>
<g class="c10"><path d="M403.5 411.1L406.5 420.3 404.2 419 401.2 409.7z"/></g>
<g class="c13"><path d="M400.5 400L403.5 411.1 401.2 409.7 398.2 398.4z"/></g>
<g class="c17"><path d="M397.5 386.7L400.5 400 398.2 398.4 395.2 385z"/></g>
<g class="c21"><path d="M394.5 371.6L397.5 386.7 395.2 385 392.2 369.7z"/></g>
<g class="c25"><path d="M391.5 354.8L394.5 371.6 392.2 369.7 389.2 352.7z"/></g>
<g class="c30"><path d="M388.5 336.7L391.5 354.8 389.2 352.7 386.2 334.4z"/></g>
<g class="c36"><path d="M385.5 318L388.5 336.7 386.2 334.4 383.2 315.5z"/></g>
<g class="c41"><path d="M382.5 299.3L385.5 318 383.2 315.5 380.2 296.6z"/></g>
<g class="c47"><path d="M379.5 281.5L382.5 299.3 380.2 296.6 377.3 278.7z"/></g>
<g class="c51"><path d="M376.6 265.6L379.5 281.5 377.3 278.7 374.3 262.5z"/></g>
<g class="c56"><path d="M373.6 252.2L376.6 265.6 374.3 262.5 371.3 249.1z"/></g>
<g class="c59"><path d="M370.6 242.3L373.6 252.2 371.3 249.1 368.3 239z"/></g>
<g class="c62"><path d="M367.6 236.4L370.6 242.3 368.3 239 365.3 233.1z"/></g>
<g class="c63"><path d="M364.6 234.9L367.6 236.4 365.3 233.1 362.3 231.6z"/><path d="M361.6 238L364.6 234.9 362.3 231.6 359.3 234.7z"/></g>
<g class="c62"><path d="M358.6 245.5L361.6 238 359.3 234.7 356.3 242.3z"/></g>
<g class="c59"><path d="M355.6 257.1L358.6 245.5 356.3 242.3 353.3 253.9z"/></g>
<g class="c56"><path d="M352.6 272L355.6 257.1 353.3 253.9 350.3 269z"/></g>
<g class="c51"><path d="M349.6 289.6L352.6 272 350.3 269 347.3 286.8z"/></g>
<g class="c47"><path d="M346.7 309L349.6 289.6 347.3 286.8 344.4 306.4z"/></g>
<g class="c41"><path d="M343.7 329.3L346.7 309 344.4 306.4 341.4 326.8z"/></g>
<g class="c36"><path d="M340.7 349.7L343.7 329.3 341.4 326.8 338.4 347.4z"/></g>
<g class="c30"><path d="M337.7 369.3L340.7 349.7 338.4 347.4 335.4 367.3z"/></g>
<g class="c25"><path d="M334.7 387.8L337.7 369.3 335.4 367.3 332.4 385.9z"/></g>
<g class="c21"><path d="M331.7 404.5L334.7 387.8 332.4 385.9 329.4 402.8z"/></g>
<g class="c17"><path d="M328.7 419.4L331.7 404.5 329.4 402.8 326.4 417.8z"/></g>
<g class="c13"><path d="M325.7 432.2L328.7 419.4 326.4 417.8 323.4 430.7z"/></g>
<g class="c10"><path d="M322.7 443L325.7 432.2 323.4 430.7 320.4 441.6z"/></g>
<g class="c7"><path d="M319.7 451.9L322.7 443 320.4 441.6 317.4 450.6z"/></g>
<g class="c5"><path d="M316.8 459.2L319.7 451.9 317.4 450.6 314.5 457.9z"/></g>
<g class="c4"><path d="M313.8 465L316.8 459.2 314.5 457.9 311.5 463.8z"/></g>
<g class="c3"><path d="M310.8 469.5L313.8 465 311.5 463.8 308.5 468.4z"/></g>
<g class="c2"><path d="M307.8 473.1L310.8 469.5 308.5 468.4 305.5 472z"/></g>
<g class="c1"><path d="M304.8 475.9L307.8 473.1 305.5 472 302.5 474.8z"/></g>
<g class="c0"><path d="M301.8 478.1L304.8 475.9 302.5 474.8 299.5 477.1z"/><path d="M298.8 479.9L301.8 478.1 299.5 477.1 296.5 478.9z"/><path d="M295.8 481.4L298.8 479.9 296.5 478.9 293.5 480.3z"/><path d="M292.8 482.4L295.8 481.4 293.5 480.3 290.5 481.4z"/><path d="M435.7 445.2L438.7 444.6 436.4 443.6 433.4 444.1z"/><path d="M432.7 445.4L435.7 445.2 433.4 444.1 430.4 444.3z"/><path d="M429.7 445.3L432.7 445.4 430.4 444.3 427.4 444.1z"/><path d="M426.7 444.7L429.7 445.3 427.4 444.1 424.4 443.5z"/></g>
<g class="c1"><path d="M423.7 443.6L426.7 444.7 424.4 443.5 421.4 442.3z"/></g>
<g class="c2"><path d="M420.7 441.7L423.7 443.6 421.4 442.3 418.4 440.4z"/><path d="M417.7 438.9L420.7 441.7 418.4 440.4 415.4 437.4z"/></g>
<g class="c4"><path d="M414.7 434.8L417.7 438.9 415.4 437.4 412.4 433.3z"/></g>
<g class="c5"><path d="M411.7 429.4L414.7 434.8 412.4 433.3 409.4 427.6z"/></g>
<g class="c7"><path d="M408.8 422.3L411.7 429.4 409.4 427.6 406.5 420.3z"/></g>
<g class="c10"><path d="M405.8 413.4L408.8 422.3 406.5 420.3 403.5 411.1z"/></g>
<g class="c13"><path d="M402.8 402.6L405.8 413.4 403.5 411.1 400.5 400z"/></g>
<g class="c16"><path d="M399.8 389.8L402.8 402.6 400.5 400 397.5 386.7z"/></g>
<g class="c20"><path d="M396.8 375.1L399.8 389.8 397.5 386.7 394.5 371.6z"/></g>
<g class="c25"><path d="M393.8 358.8L396.8 375.1 394.5 371.6 391.5 354.8z"/></g>
<g class="c30"><path d="M390.8 341.3L393.8 358.8 391.5 354.8 388.5 336.7z"/></g>
<g class="c35"><path d="M387.8 323.2L390.8 341.3 388.5 336.7 385.5 318z"/></g>
<g class="c40"><path d="M384.8 305.1L387.8 323.2 385.5 318 382.5 299.3z"/></g>
<g class="c46"><path d="M381.8 287.9L384.8 305.1 382.5 299.3 379.5 281.5z"/></g>
<g class="c50"><path d="M378.8 272.4L381.8 287.9 379.5 281.5 376.6 265.6z"/></g>
<g class="c55"><path d="M375.9 259.5L378.8 272.4 376.6 265.6 373.6 252.2z"/></g>
<g class="c58"><path d="M372.9 249.9L375.9 259.5 373.6 252.2 370.6 242.3z"/></g>
<g class="c60"><path d="M369.9 244.2L372.9 249.9 370.6 242.3 367.6 236.4z"/></g>
<g class="c62"><path d="M366.9 242.8L369.9 244.2 367.6 236.4 364.6 234.9z"/><path d="M363.9 245.8L366.9 242.8 364.6 234.9 361.6 238z"/></g>
<g class="c60"><path d="M360.9 253.1L363.9 245.8 361.6 238 358.6 245.5z"/></g>
<g class="c58"><path d="M357.9 264.3L360.9 253.1 358.6 245.5 355.6 257.1z"/></g>
<g class="c55"><path d="M354.9 278.9L357.9 264.3 355.6 257.1 352.6 272z"/></g>
<g class="c50"><path d="M351.9 296L354.9 278.9 352.6 272 349.6 289.6z"/></g>
<g class="c46"><path d="M348.9 314.8L351.9 296 349.6 289.6 346.7 309z"/></g>
<g class="c40"><path d="M346 334.5L348.9 314.8 346.7 309 343.7 329.3z"/></g>
<g class="c35"><path d="M343 354.3L346 334.5 343.7 329.3 340.7 349.7z"/></g>
<g class="c30"><path d="M340 373.4L343 354.3 340.7 349.7 337.7 369.3z"/></g>
<g class="c25"><path d="M337 391.3L340 373.4 337.7 369.3 334.7 387.8z"/></g>
<g class="c20"><path d="M334 407.6L337 391.3 334.7 387.8 331.7 404.5z"/></g>
<g class="c16"><path d="M331 422L334 407.6 331.7 404.5 328.7 419.4z"/></g>
<g class="c13"><path d="M328 434.5L331 422 328.7 419.4 325.7 432.2z"/></g>
<g class="c10"><path d="M325 445L328 434.5 325.7 432.2 322.7 443z"/></g>
<g class="c7"><path d="M322 453.7L325 445 322.7 443 319.7 451.9z"/></g>
<g class="c5"><path d="M319 460.8L322 453.7 319.7 451.9 316.8 459.2z"/></g>
<g class="c4"><path d="M316.1 466.4L319 460.8 316.8 459.2 313.8 465z"/></g>
<g class="c2"><path d="M313.1 470.8L316.1 466.4 313.8 465 310.8 469.5z"/><path d="M310.1 474.3L313.1 470.8 310.8 469.5 307.8 473.1z"/></g>
<g class="c1"><path d="M307.1 477.1L310.1 474.3 307.8 473.1 304.8 475.9z"/></g>
<g class="c0"><path d="M304.1 479.3L307.1 477.1 304.8 475.9 301.8 478.1z"/><path d="M301.1 481L304.1 479.3 301.8 478.1 298.8 479.9z"/><path d="M298.1 482.5L301.1 481 298.8 479.9 295.8 481.4z"/><path d="M295.1 483.5L298.1 482.5 295.8 481.4 292.8 482.4z"/><path d="M438 446.3L440.9 445.7 438.7 444.6 435.7 445.2z"/><path d="M435 446.5L438 446.3 435.7 445.2 432.7 445.4z"/><path d="M432 446.5L435 446.5 432.7 445.4 429.7 445.3z"/><path d="M429 446L432 446.5 429.7 445.3 426.7 444.7z"/></g>
<g class="c1"><path d="M426 444.9L429 446 426.7 444.7 423.7 443.6z"/><path d="M423 443.2L426 444.9 423.7 443.6 420.7 441.7z"/></g>
<g class="c2"><path d="M420 440.5L423 443.2 420.7 441.7 417.7 438.9z"/></g>
<g class="c3"><path d="M417 436.7L420 440.5 417.7 438.9 414.7 434.8z"/></g>
<g class="c5"><path d="M414 431.6L417 436.7 414.7 434.8 411.7 429.4z"/></g>
<g class="c7"><path d="M411 424.9L414 431.6 411.7 429.4 408.8 422.3z"/></g>
<g class="c9"><path d="M408.1 416.5L411 424.9 408.8 422.3 405.8 413.4z"/></g>
<g class="c12"><path d="M405.1 406.2L408.1 416.5 405.8 413.4 402.8 402.6z"/></g>
<g class="c16"><path d="M402.1 394.1L405.1 406.2 402.8 402.6 399.8 389.8z"/></g>
<g class="c19"><path d="M399.1 380.2L402.1 394.1 399.8 389.8 396.8 375.1z"/></g>
<g class="c24"><path d="M396.1 364.7L399.1 380.2 396.8 375.1 393.8 358.8z"/></g>
<g class="c29"><path d="M393.1 348.1L396.1 364.7 393.8 358.8 390.8 341.3z"/></g>
<g class="c34"><path d="M390.1 330.9L393.1 348.1 390.8 341.3 387.8 323.2z"/></g>
<g class="c39"><path d="M387.1 313.7L390.1 330.9 387.8 323.2 384.8 305.1z"/></g>
<g class="c44"><path d="M384.1 297.4L387.1 313.7 384.8 305.1 381.8 287.9z"/></g>
<g class="c48"><path d="M381.1 282.7L384.1 297.4 381.8 287.9 378.8 272.4z"/></g>
<g class="c52"><path d="M378.2 270.4L381.1 282.7 378.8 272.4 375.9 259.5z"/></g>
<g class="c56"><path d="M375.2 261.3L378.2 270.4 375.9 259.5 372.9 249.9z"/></g>
<g class="c58"><path d="M372.2 255.9L375.2 261.3 372.9 249.9 369.9 244.2z"/></g>
<g class="c59"><path d="M369.2 254.7L372.2 255.9 369.9 244.2 366.9 242.8z"/><path d="M366.2 257.6L369.2 254.7 366.9 242.8 363.9 245.8z"/></g>
<g class="c58"><path d="M363.2 264.6L366.2 257.6 363.9 245.8 360.9 253.1z"/></g>
<g class="c56"><path d="M360.2 275.3L363.2 264.6 360.9 253.1 357.9 264.3z"/></g>
<g class="c52"><path d="M357.2 289.1L360.2 275.3 357.9 264.3 354.9 278.9z"/></g>
<g class="c48"><path d="M354.2 305.5L357.2 289.1 354.9 278.9 351.9 296z"/></g>
<g class="c44"><path d="M351.2 323.4L354.2 305.5 351.9 296 348.9 314.8z"/></g>
<g class="c39"><path d="M348.3 342.2L351.2 323.4 348.9 314.8 346 334.5z"/></g>
<g class="c34"><path d="M345.3 361L348.3 342.2 346 334.5 343 354.3z"/></g>
<g class="c29"><path d="M342.3 379.3L345.3 361 343 354.3 340 373.4z"/></g>
<g class="c24"><path d="M339.3 396.4L342.3 379.3 340 373.4 337 391.3z"/></g>
<g class="c19"><path d="M336.3 411.9L339.3 396.4 337 391.3 334 407.6z"/></g>
<g class="c16"><path d="M333.3 425.7L336.3 411.9 334 407.6 331 422z"/></g>
<g class="c12"><path d="M330.3 437.6L333.3 425.7 331 422 328 434.5z"/></g>
<g class="c9"><path d="M327.3 447.6L330.3 437.6 328 434.5 325 445z"/></g>
<g class="c7"><path d="M324.3 455.9L327.3 447.6 325 445 322 453.7z"/></g>
<g class="c5"><path d="M321.3 462.6L324.3 455.9 322 453.7 319 460.8z"/></g>
<g class="c3"><path d="M318.4 468L321.3 462.6 319 460.8 316.1 466.4z"/></g>
<g class="c2"><path d="M315.4 472.3L318.4 468 316.1 466.4 313.1 470.8z"/></g>
<g class="c1"><path d="M312.4 475.7L315.4 472.3 313.1 470.8 310.1 474.3z"/><path d="M309.4 478.4L312.4 475.7 310.1 474.3 307.1 477.1z"/></g>
<g class="c0"><path d="M306.4 480.5L309.4 478.4 307.1 477.1 304.1 479.3z"/><path d="M303.4 482.2L306.4 480.5 304.1 479.3 301.1 481z"/><path d="M300.4 483.6L303.4 482.2 301.1 481 298.1 482.5z"/><path d="M297.4 484.5L300.4 483.6 298.1 482.5 295.1 483.5z"/><path d="M440.3 447.5L443.2 446.7 440.9 445.7 438 446.3z"/><path d="M437.3 447.7L440.3 447.5 438 446.3 435 446.5z"/><path d="M434.3 447.7L437.3 447.7 435 446.5 432 446.5z"/><path d="M431.3 447.3L434.3 447.7 432 446.5 429 446z"/></g>
<g class="c1"><path d="M428.3 446.4L431.3 447.3 429 446 426 444.9z"/><path d="M425.3 444.8L428.3 446.4 426 444.9 423 443.2z"/></g>
<g class="c2"><path d="M422.3 442.4L425.3 444.8 423 443.2 420 440.5z"/></g>
<g class="c3"><path d="M419.3 438.9L422.3 442.4 420 440.5 417 436.7z"/></g>
<g class="c5"><path d="M416.3 434.2L419.3 438.9 417 436.7 414 431.6z"/></g>
<g class="c6"><path d="M413.3 428L416.3 434.2 414 431.6 411 424.9z"/></g>
<g class="c9"><path d="M410.3 420.2L413.3 428 411 424.9 408.1 416.5z"/></g>
<g class="c11"><path d="M407.4 410.7L410.3 420.2 408.1 416.5 405.1 406.2z"/></g>
<g class="c15"><path d="M404.4 399.4L407.4 410.7 405.1 406.2 402.1 394.1z"/></g>
<g class="c18"><path d="M401.4 386.5L404.4 399.4 402.1 394.1 399.1 380.2z"/></g>
<g class="c22"><path d="M398.4 372.1L401.4 386.5 399.1 380.2 396.1 364.7z"/></g>
<g class="c27"><path d="M395.4 356.7L398.4 372.1 396.1 364.7 393.1 348.1z"/></g>
<g class="c32"><path d="M392.4 340.7L395.4 356.7 393.1 348.1 390.1 330.9z"/></g>
<g class="c37"><path d="M389.4 324.7L392.4 340.7 390.1 330.9 387.1 313.7z"/></g>
<g class="c41"><path d="M386.4 309.5L389.4 324.7 387.1 313.7 384.1 297.4z"/></g>
<g class="c46"><path d="M383.4 295.9L386.4 309.5 384.1 297.4 381.1 282.7z"/></g>
<g class="c49"><path d="M380.4 284.5L383.4 295.9 381.1 282.7 378.2 270.4z"/></g>
<g class="c52"><path d="M377.5 276.1L380.4 284.5 378.2 270.4 375.2 261.3z"/></g>
<g class="c55"><path d="M374.5 271.1L377.5 276.1 375.2 261.3 372.2 255.9z"/></g>
<g class="c56"><path d="M371.5 270L374.5 271.1 372.2 255.9 369.2 254.7z"/><path d="M368.5 272.8L371.5 270 369.2 254.7 366.2 257.6z"/></g>
<g class="c55"><path d="M365.5 279.3L368.5 272.8 366.2 257.6 363.2 264.6z"/></g>
<g class="c52"><path d="M362.5 289.4L365.5 279.3 363.2 264.6 360.2 275.3z"/></g>
<g class="c49"><path d="M359.5 302.4L362.5 289.4 360.2 275.3 357.2 289.1z"/></g>
<g class="c46"><path d="M356.5 317.6L359.5 302.4 357.2 289.1 354.2 305.5z"/></g>
<g class="c41"><path d="M353.5 334.4L356.5 317.6 354.2 305.5 351.2 323.4z"/></g>
<g class="c37"><path d="M350.5 352L353.5 334.4 351.2 323.4 348.3 342.2z"/></g>
<g class="c32"><path d="M347.6 369.6L350.5 352 348.3 342.2 345.3 361z"/></g>
<g class="c27"><path d="M344.6 386.7L347.6 369.6 345.3 361 342.3 379.3z"/></g>
<g class="c22"><path d="M341.6 402.7L344.6 386.7 342.3 379.3 339.3 396.4z"/></g>
<g class="c18"><path d="M338.6 417.2L341.6 402.7 339.3 396.4 336.3 411.9z"/></g>
<g class="c15"><path d="M335.6 430.1L338.6 417.2 336.3 411.9 333.3 425.7z"/></g>
<g class="c11"><path d="M332.6 441.2L335.6 430.1 333.3 425.7 330.3 437.6z"/></g>
<g class="c9"><path d="M329.6 450.7L332.6 441.2 330.3 437.6 327.3 447.6z"/></g>
<g class="c6"><path d="M326.6 458.5L329.6 450.7 327.3 447.6 324.3 455.9z"/></g>
<g class="c5"><path d="M323.6 464.8L326.6 458.5 324.3 455.9 321.3 462.6z"/></g>
<g class="c3"><path d="M320.6 469.9L323.6 464.8 321.3 462.6 318.4 468z"/></g>
<g class="c2"><path d="M317.7 473.9L320.6 469.9 318.4 468 315.4 472.3z"/></g>
<g class="c1"><path d="M314.7 477.1L317.7 473.9 315.4 472.3 312.4 475.7z"/><path d="M311.7 479.7L314.7 477.1 312.4 475.7 309.4 478.4z"/></g>
<g class="c0"><path d="M308.7 481.7L311.7 479.7 309.4 478.4 306.4 480.5z"/><path d="M305.7 483.3L308.7 481.7 306.4 480.5 303.4 482.2z"/><path d="M302.7 484.7L305.7 483.3 303.4 482.2 300.4 483.6z"/><path d="M299.7 485.6L302.7 484.7 300.4 483.6 297.4 484.5z"/><path d="M442.5 448.6L445.5 447.8 443.2 446.7 440.3 447.5z"/><path d="M439.6 448.9L442.5 448.6 440.3 447.5 437.3 447.7z"/><path d="M436.6 449L439.6 448.9 437.3 447.7 434.3 447.7z"/><path d="M433.6 448.7L436.6 449 434.3 447.7 431.3 447.3z"/></g>
<g class="c1"><path d="M430.6 447.9L433.6 448.7 431.3 447.3 428.3 446.4z"/><path d="M427.6 446.5L430.6 447.9 428.3 446.4 425.3 444.8z"/></g>
<g class="c2"><path d="M424.6 444.4L427.6 446.5 425.3 444.8 422.3 442.4z"/></g>
<g class="c3"><path d="M421.6 441.3L424.6 444.4 422.3 442.4 419.3 438.9z"/></g>
<g class="c4"><path d="M418.6 437L421.6 441.3 419.3 438.9 416.3 434.2z"/></g>
<g class="c6"><path d="M415.6 431.4L418.6 437 416.3 434.2 413.3 428z"/></g>
<g class="c8"><path d="M412.6 424.4L415.6 431.4 413.3 428 410.3 420.2z"/></g>
<g class="c10"><path d="M409.7 415.7L412.6 424.4 410.3 420.2 407.4 410.7z"/></g>
<g class="c13"><path d="M406.7 405.5L409.7 415.7 407.4 410.7 404.4 399.4z"/></g>
<g class="c17"><path d="M403.7 393.8L406.7 405.5 404.4 399.4 401.4 386.5z"/></g>
<g class="c21"><path d="M400.7 380.7L403.7 393.8 401.4 386.5 398.4 372.1z"/></g>
<g class="c25"><path d="M397.7 366.7L400.7 380.7 398.4 372.1 395.4 356.7z"/></g>
<g class="c29"><path d="M394.7 352.1L397.7 366.7 395.4 356.7 392.4 340.7z"/></g>
<g class="c34"><path d="M391.7 337.6L394.7 352.1 392.4 340.7 389.4 324.7z"/></g>
<g class="c38"><path d="M388.7 323.8L391.7 337.6 389.4 324.7 386.4 309.5z"/></g>
<g class="c42"><path d="M385.7 311.4L388.7 323.8 386.4 309.5 383.4 295.9z"/></g>
<g class="c46"><path d="M382.7 301.1L385.7 311.4 383.4 295.9 380.4 284.5z"/></g>
<g class="c48"><path d="M379.8 293.5L382.7 301.1 380.4 284.5 377.5 276.1z"/></g>
<g class="c50"><path d="M376.8 289L379.8 293.5 377.5 276.1 374.5 271.1z"/></g>
<g class="c51"><path d="M373.8 288L376.8 289 374.5 271.1 371.5 270z"/><path d="M370.8 290.6L373.8 288 371.5 270 368.5 272.8z"/></g>
<g class="c50"><path d="M367.8 296.7L370.8 290.6 368.5 272.8 365.5 279.3z"/></g>
<g class="c48"><path d="M364.8 305.9L367.8 296.7 365.5 279.3 362.5 289.4z"/></g>
<g class="c46"><path d="M361.8 317.9L364.8 305.9 362.5 289.4 359.5 302.4z"/></g>
<g class="c42"><path d="M358.8 331.9L361.8 317.9 359.5 302.4 356.5 317.6z"/></g>
<g class="c38"><path d="M355.8 347.3L358.8 331.9 356.5 317.6 353.5 334.4z"/></g>
<g class="c34"><path d="M352.8 363.5L355.8 347.3 353.5 334.4 350.5 352z"/></g>
<g class="c29"><path d="M349.9 379.6L352.8 363.5 350.5 352 347.6 369.6z"/></g>
<g class="c25"><path d="M346.9 395.3L349.9 379.6 347.6 369.6 344.6 386.7z"/></g>
<g class="c21"><path d="M343.9 410L346.9 395.3 344.6 386.7 341.6 402.7z"/></g>
<g class="c17"><path d="M340.9 423.3L343.9 410 341.6 402.7 338.6 417.2z"/></g>
<g class="c13"><path d="M337.9 435.2L340.9 423.3 338.6 417.2 335.6 430.1z"/></g>
<g class="c10"><path d="M334.9 445.4L337.9 435.2 335.6 430.1 332.6 441.2z"/></g>
<g class="c8"><path d="M331.9 454.1L334.9 445.4 332.6 441.2 329.6 450.7z"/></g>
<g class="c6"><path d="M328.9 461.3L331.9 454.1 329.6 450.7 326.6 458.5z"/></g>
<g class="c4"><path d="M325.9 467.2L328.9 461.3 326.6 458.5 323.6 464.8z"/></g>
<g class="c3"><path d="M322.9 471.9L325.9 467.2 323.6 464.8 320.6 469.9z"/></g>
<g class="c2"><path d="M319.9 475.7L322.9 471.9 320.6 469.9 317.7 473.9z"/></g>
<g class="c1"><path d="M317 478.7L319.9 475.7 317.7 473.9 314.7 477.1z"/><path d="M314 481L317 478.7 314.7 477.1 311.7 479.7z"/></g>
<g class="c0"><path d="M311 483L314 481 311.7 479.7 308.7 481.7z"/><path d="M308 484.5L311 483 308.7 481.7 305.7 483.3z"/><path d="M305 485.8L308 484.5 305.7 483.3 302.7 484.7z"/><path d="M302 486.6L305 485.8 302.7 484.7 299.7 485.6z"/><path d="M441.8 450.1L444.8 449.7 442.5 448.6 439.6 448.9z"/><path d="M438.9 450.2L441.8 450.1 439.6 448.9 436.6 449z"/><path d="M435.9 450L438.9 450.2 436.6 449 433.6 448.7z"/></g>
<g class="c1"><path d="M432.9 449.4L435.9 450 433.6 448.7 430.6 447.9z"/><path d="M429.9 448.3L432.9 449.4 430.6 447.9 427.6 446.5z"/></g>
<g class="c2"><path d="M426.9 446.5L429.9 448.3 427.6 446.5 424.6 444.4z"/></g>
<g class="c3"><path d="M423.9 443.8L426.9 446.5 424.6 444.4 421.6 441.3z"/></g>
<g class="c4"><path d="M420.9 440L423.9 443.8 421.6 441.3 418.6 437z"/></g>
<g class="c5"><path d="M417.9 435.1L420.9 440 418.6 437 415.6 431.4z"/></g>
<g class="c7"><path d="M414.9 428.9L417.9 435.1 415.6 431.4 412.6 424.4z"/></g>
<g class="c9"><path d="M411.9 421.3L414.9 428.9 412.6 424.4 409.7 415.7z"/></g>
<g class="c12"><path d="M409 412.2L411.9 421.3 409.7 415.7 406.7 405.5z"/></g>
<g class="c15"><path d="M406 401.7L409 412.2 406.7 405.5 403.7 393.8z"/></g>
<g class="c19"><path d="M403 390.1L406 401.7 403.7 393.8 400.7 380.7z"/></g>
<g class="c22"><path d="M400 377.6L403 390.1 400.7 380.7 397.7 366.7z"/></g>
<g class="c26"><path d="M397 364.7L400 377.6 397.7 366.7 394.7 352.1z"/></g>
<g class="c30"><path d="M394 351.8L397 364.7 394.7 352.1 391.7 337.6z"/></g>
<g class="c34"><path d="M391 339.5L394 351.8 391.7 337.6 388.7 323.8z"/></g>
<g class="c38"><path d="M388 328.5L391 339.5 388.7 323.8 385.7 311.4z"/></g>
<g class="c41"><path d="M385 319.3L388 328.5 385.7 311.4 382.7 301.1z"/></g>
<g class="c44"><path d="M382 312.5L385 319.3 382.7 301.1 379.8 293.5z"/></g>
<g class="c46"><path d="M379.1 308.6L382 312.5 379.8 293.5 376.8 289z"/></g>
<g class="c47"><path d="M376.1 307.8L379.1 308.6 376.8 289 373.8 288z"/><path d="M373.1 310.2L376.1 307.8 373.8 288 370.8 290.6z"/></g>
<g class="c46"><path d="M370.1 315.8L373.1 310.2 370.8 290.6 367.8 296.7z"/></g>
<g class="c44"><path d="M367.1 324.2L370.1 315.8 367.8 296.7 364.8 305.9z"/></g>
<g class="c41"><path d="M364.1 334.9L367.1 324.2 364.8 305.9 361.8 317.9z"/></g>
<g class="c38"><path d="M361.1 347.6L364.1 334.9 361.8 317.9 358.8 331.9z"/></g>
<g class="c34"><path d="M358.1 361.5L361.1 347.6 358.8 331.9 355.8 347.3z"/></g>
<g class="c30"><path d="M355.1 376L358.1 361.5 355.8 347.3 352.8 363.5z"/></g>
<g class="c26"><path d="M352.1 390.6L355.1 376 352.8 363.5 349.9 379.6z"/></g>
<g class="c22"><path d="M349.2 404.7L352.1 390.6 349.9 379.6 346.9 395.3z"/></g>
<g class="c19"><path d="M346.2 417.9L349.2 404.7 346.9 395.3 343.9 410z"/></g>
<g class="c15"><path d="M343.2 430L346.2 417.9 343.9 410 340.9 423.3z"/></g>
<g class="c12"><path d="M340.2 440.7L343.2 430 340.9 423.3 337.9 435.2z"/></g>
<g class="c9"><path d="M337.2 449.9L340.2 440.7 337.9 435.2 334.9 445.4z"/></g>
<g class="c7"><path d="M334.2 457.8L337.2 449.9 334.9 445.4 331.9 454.1z"/></g>
<g class="c5"><path d="M331.2 464.3L334.2 457.8 331.9 454.1 328.9 461.3z"/></g>
<g class="c4"><path d="M328.2 469.7L331.2 464.3 328.9 461.3 325.9 467.2z"/></g>
<g class="c3"><path d="M325.2 474L328.2 469.7 325.9 467.2 322.9 471.9z"/></g>
<g class="c2"><path d="M322.2 477.5L325.2 474 322.9 471.9 319.9 475.7z"/></g>
<g class="c1"><path d="M319.3 480.2L322.2 477.5 319.9 475.7 317 478.7z"/><path d="M316.3 482.4L319.3 480.2 317 478.7 314 481z"/></g>
<g class="c0"><path d="M313.3 484.2L316.3 482.4 314 481 311 483z"/><path d="M310.3 485.7L313.3 484.2 311 483 308 484.5z"/><path d="M307.3 486.9L310.3 485.7 308 484.5 305 485.8z"/><path d="M444.1 451.3L447.1 450.7 444.8 449.7 441.8 450.1z"/><path d="M441.2 451.5L444.1 451.3 441.8 450.1 438.9 450.2z"/><path d="M438.2 451.5L441.2 451.5 438.9 450.2 435.9 450z"/><path d="M435.2 451L438.2 451.5 435.9 450 432.9 449.4z"/></g>
<g class="c1"><path d="M432.2 450.1L435.2 451 432.9 449.4 429.9 448.3z"/><path d="M429.2 448.6L432.2 450.1 429.9 448.3 426.9 446.5z"/></g>
<g class="c2"><path d="M426.2 446.3L429.2 448.6 426.9 446.5 423.9 443.8z"/></g>
<g class="c3"><path d="M423.2 443.2L426.2 446.3 423.9 443.8 420.9 440z"/></g>
<g class="c5"><path d="M420.2 439L423.2 443.2 420.9 440 417.9 435.1z"/></g>
<g class="c6"><path d="M417.2 433.6L420.2 439 417.9 435.1 414.9 428.9z"/></g>
<g class="c8"><path d="M414.2 427L417.2 433.6 414.9 428.9 411.9 421.3z"/></g>
<g class="c11"><path d="M411.3 419.1L414.2 427 411.9 421.3 409 412.2z"/></g>
<g class="c13"><path d="M408.3 410L411.3 419.1 409 412.2 406 401.7z"/></g>
<g class="c17"><path d="M405.3 399.9L408.3 410 406 401.7 403 390.1z"/></g>
<g class="c20"><path d="M402.3 389.1L405.3 399.9 403 390.1 400 377.6z"/></g>
<g class="c23"><path d="M399.3 377.8L402.3 389.1 400 377.6 397 364.7z"/></g>
<g class="c27"><path d="M396.3 366.5L399.3 377.8 397 364.7 394 351.8z"/></g>
<g class="c30"><path d="M393.3 355.9L396.3 366.5 394 351.8 391 339.5z"/></g>
<g class="c34"><path d="M390.3 346.3L393.3 355.9 391 339.5 388 328.5z"/></g>
<g class="c37"><path d="M387.3 338.3L390.3 346.3 388 328.5 385 319.3z"/></g>
<g class="c39"><path d="M384.3 332.5L387.3 338.3 385 319.3 382 312.5z"/></g>
<g class="c40"><path d="M381.4 329.2L384.3 332.5 382 312.5 379.1 308.6z"/></g>
<g class="c41"><path d="M378.4 328.6L381.4 329.2 379.1 308.6 376.1 307.8z"/><path d="M375.4 330.8L378.4 328.6 376.1 307.8 373.1 310.2z"/></g>
<g class="c40"><path d="M372.4 335.7L375.4 330.8 373.1 310.2 370.1 315.8z"/></g>
<g class="c39"><path d="M369.4 343.2L372.4 335.7 370.1 315.8 367.1 324.2z"/></g>
<g class="c37"><path d="M366.4 352.7L369.4 343.2 367.1 324.2 364.1 334.9z"/></g>
<g class="c34"><path d="M363.4 364L366.4 352.7 364.1 334.9 361.1 347.6z"/></g>
<g class="c30"><path d="M360.4 376.3L363.4 364 361.1 347.6 358.1 361.5z"/></g>
<g class="c27"><path d="M357.4 389.1L360.4 376.3 358.1 361.5 355.1 376z"/></g>
<g class="c23"><path d="M354.4 402L357.4 389.1 355.1 376 352.1 390.6z"/></g>
<g class="c20"><path d="M351.4 414.5L354.4 402 352.1 390.6 349.2 404.7z"/></g>
<g class="c17"><path d="M348.5 426.2L351.4 414.5 349.2 404.7 346.2 417.9z"/></g>
<g class="c13"><path d="M345.5 436.9L348.5 426.2 346.2 417.9 343.2 430z"/></g>
<g class="c11"><path d="M342.5 446.4L345.5 436.9 343.2 430 340.2 440.7z"/></g>
<g class="c8"><path d="M339.5 454.6L342.5 446.4 340.2 440.7 337.2 449.9z"/></g>
<g class="c6"><path d="M336.5 461.6L339.5 454.6 337.2 449.9 334.2 457.8z"/></g>
<g class="c5"><path d="M333.5 467.5L336.5 461.6 334.2 457.8 331.2 464.3z"/></g>
<g class="c3"><path d="M330.5 472.3L333.5 467.5 331.2 464.3 328.2 469.7z"/></g>
<g class="c2"><path d="M327.5 476.1L330.5 472.3 328.2 469.7 325.2 474z"/></g>
<g class="c1"><path d="M324.5 479.3L327.5 476.1 325.2 474 322.2 477.5z"/><path d="M321.5 481.8L324.5 479.3 322.2 477.5 319.3 480.2z"/></g>
<g class="c0"><path d="M318.6 483.9L321.5 481.8 319.3 480.2 316.3 482.4z"/><path d="M315.6 485.5L318.6 483.9 316.3 482.4 313.3 484.2z"/><path d="M312.6 486.9L315.6 485.5 313.3 484.2 310.3 485.7z"/><path d="M309.6 487.9L312.6 486.9 310.3 485.7 307.3 486.9z"/><path d="M446.4 452.5L449.4 451.8 447.1 450.7 444.1 451.3z"/><path d="M443.4 452.8L446.4 452.5 444.1 451.3 441.2 451.5z"/><path d="M440.5 452.9L443.4 452.8 441.2 451.5 438.2 451.5z"/><path d="M437.5 452.6L440.5 452.9 438.2 451.5 435.2 451z"/></g>
<g class="c1"><path d="M434.5 452L437.5 452.6 435.2 451 432.2 450.1z"/><path d="M431.5 450.8L434.5 452 432.2 450.1 429.2 448.6z"/></g>
<g class="c2"><path d="M428.5 448.9L431.5 450.8 429.2 448.6 426.2 446.3z"/></g>
<g class="c3"><path d="M425.5 446.3L428.5 448.9 426.2 446.3 423.2 443.2z"/></g>
<g class="c4"><path d="M422.5 442.8L425.5 446.3 423.2 443.2 420.2 439z"/></g>
<g class="c5"><path d="M419.5 438.3L422.5 442.8 420.2 439 417.2 433.6z"/></g>
<g class="c7"><path d="M416.5 432.7L419.5 438.3 417.2 433.6 414.2 427z"/></g>
<g class="c9"><path d="M413.5 426L416.5 432.7 414.2 427 411.3 419.1z"/></g>
<g class="c12"><path d="M410.6 418.3L413.5 426 411.3 419.1 408.3 410z"/></g>
<g class="c14"><path d="M407.6 409.8L410.6 418.3 408.3 410 405.3 399.9z"/></g>
<g class="c17"><path d="M404.6 400.5L407.6 409.8 405.3 399.9 402.3 389.1z"/></g>
<g class="c20"><path d="M401.6 390.9L404.6 400.5 402.3 389.1 399.3 377.8z"/></g>
<g class="c23"><path d="M398.6 381.4L401.6 390.9 399.3 377.8 396.3 366.5z"/></g>
<g class="c26"><path d="M395.6 372.3L398.6 381.4 396.3 366.5 393.3 355.9z"/></g>
<g class="c29"><path d="M392.6 364.1L395.6 372.3 393.3 355.9 390.3 346.3z"/></g>
<g class="c32"><path d="M389.6 357.4L392.6 364.1 390.3 346.3 387.3 338.3z"/></g>
<g class="c34"><path d="M386.6 352.5L389.6 357.4 387.3 338.3 384.3 332.5z"/></g>
<g class="c35"><path d="M383.6 349.8L386.6 352.5 384.3 332.5 381.4 329.2z"/></g>
<g class="c36"><path d="M380.7 349.4L383.6 349.8 381.4 329.2 378.4 328.6z"/><path d="M377.7 351.4L380.7 349.4 378.4 328.6 375.4 330.8z"/></g>
<g class="c35"><path d="M374.7 355.8L377.7 351.4 375.4 330.8 372.4 335.7z"/></g>
<g class="c34"><path d="M371.7 362.3L374.7 355.8 372.4 335.7 369.4 343.2z"/></g>
<g class="c32"><path d="M368.7 370.6L371.7 362.3 369.4 343.2 366.4 352.7z"/></g>
<g class="c29"><path d="M365.7 380.4L368.7 370.6 366.4 352.7 363.4 364z"/></g>
<g class="c26"><path d="M362.7 391.1L365.7 380.4 363.4 364 360.4 376.3z"/></g>
<g class="c23"><path d="M359.7 402.3L362.7 391.1 360.4 376.3 357.4 389.1z"/></g>
<g class="c20"><path d="M356.7 413.5L359.7 402.3 357.4 389.1 354.4 402z"/></g>
<g class="c17"><path d="M353.7 424.3L356.7 413.5 354.4 402 351.4 414.5z"/></g>
<g class="c14"><path d="M350.8 434.5L353.7 424.3 351.4 414.5 348.5 426.2z"/></g>
<g class="c12"><path d="M347.8 443.8L350.8 434.5 348.5 426.2 345.5 436.9z"/></g>
<g class="c9"><path d="M344.8 452.1L347.8 443.8 345.5 436.9 342.5 446.4z"/></g>
<g class="c7"><path d="M341.8 459.3L344.8 452.1 342.5 446.4 339.5 454.6z"/></g>
<g class="c5"><path d="M338.8 465.5L341.8 459.3 339.5 454.6 336.5 461.6z"/></g>
<g class="c4"><path d="M335.8 470.6L338.8 465.5 336.5 461.6 333.5 467.5z"/></g>
<g class="c3"><path d="M332.8 474.8L335.8 470.6 333.5 467.5 330.5 472.3z"/></g>
<g class="c2"><path d="M329.8 478.3L332.8 474.8 330.5 472.3 327.5 476.1z"/></g>
<g class="c1"><path d="M326.8 481.1L329.8 478.3 327.5 476.1 324.5 479.3z"/><path d="M323.8 483.4L326.8 481.1 324.5 479.3 321.5 481.8z"/></g>
<g class="c0"><path d="M320.9 485.3L323.8 483.4 321.5 481.8 318.6 483.9z"/><path d="M317.9 486.8L320.9 485.3 318.6 483.9 315.6 485.5z"/><path d="M314.9 488.2L317.9 486.8 315.6 485.5 312.6 486.9z"/><path d="M311.9 489L314.9 488.2 312.6 486.9 309.6 487.9z"/><path d="M448.7 453.6L451.7 452.8 449.4 451.8 446.4 452.5z"/><path d="M445.7 454.1L448.7 453.6 446.4 452.5 443.4 452.8z"/><path d="M442.8 454.3L445.7 454.1 443.4 452.8 440.5 452.9z"/><path d="M439.8 454.2L442.8 454.3 440.5 452.9 437.5 452.6z"/></g>
<g class="c1"><path d="M436.8 453.8L439.8 454.2 437.5 452.6 434.5 452z"/><path d="M433.8 452.9L436.8 453.8 434.5 452 431.5 450.8z"/></g>
<g class="c2"><path d="M430.8 451.5L433.8 452.9 431.5 450.8 428.5 448.9z"/><path d="M427.8 449.4L430.8 451.5 428.5 448.9 425.5 446.3z"/></g>
<g class="c3"><path d="M424.8 446.5L427.8 449.4 425.5 446.3 422.5 442.8z"/></g>
<g class="c5"><path d="M421.8 442.9L424.8 446.5 422.5 442.8 419.5 438.3z"/></g>
<g class="c6"><path d="M418.8 438.3L421.8 442.9 419.5 438.3 416.5 432.7z"/></g>
<g class="c8"><path d="M415.8 432.8L418.8 438.3 416.5 432.7 413.5 426z"/></g>
<g class="c10"><path d="M412.9 426.4L415.8 432.8 413.5 426 410.6 418.3z"/></g>
<g class="c12"><path d="M409.9 419.3L412.9 426.4 410.6 418.3 407.6 409.8z"/></g>
<g class="c15"><path d="M406.9 411.6L409.9 419.3 407.6 409.8 404.6 400.5z"/></g>
<g class="c17"><path d="M403.9 403.7L406.9 411.6 404.6 400.5 401.6 390.9z"/></g>
<g class="c20"><path d="M400.9 395.7L403.9 403.7 401.6 390.9 398.6 381.4z"/></g>
<g class="c22"><path d="M397.9 388.2L400.9 395.7 398.6 381.4 395.6 372.3z"/></g>
<g class="c25"><path d="M394.9 381.4L397.9 388.2 395.6 372.3 392.6 364.1z"/></g>
<g class="c27"><path d="M391.9 375.9L394.9 381.4 392.6 364.1 389.6 357.4z"/></g>
<g class="c29"><path d="M388.9 371.9L391.9 375.9 389.6 357.4 386.6 352.5z"/></g>
<g class="c30"><path d="M385.9 369.7L388.9 371.9 386.6 352.5 383.6 349.8z"/><path d="M382.9 369.5L385.9 369.7 383.6 349.8 380.7 349.4z"/><path d="M380 371.3L382.9 369.5 380.7 349.4 377.7 351.4z"/><path d="M377 375.1L380 371.3 377.7 351.4 374.7 355.8z"/></g>
<g class="c29"><path d="M374 380.8L377 375.1 374.7 355.8 371.7 362.3z"/></g>
<g class="c27"><path d="M371 387.9L374 380.8 371.7 362.3 368.7 370.6z"/></g>
<g class="c25"><path d="M368 396.3L371 387.9 368.7 370.6 365.7 380.4z"/></g>
<g class="c22"><path d="M365 405.4L368 396.3 365.7 380.4 362.7 391.1z"/></g>
<g class="c20"><path d="M362 415L365 405.4 362.7 391.1 359.7 402.3z"/></g>
<g class="c17"><path d="M359 424.6L362 415 359.7 402.3 356.7 413.5z"/></g>
<g class="c15"><path d="M356 433.9L359 424.6 356.7 413.5 353.7 424.3z"/></g>
<g class="c12"><path d="M353 442.6L356 433.9 353.7 424.3 350.8 434.5z"/></g>
<g class="c10"><path d="M350.1 450.6L353 442.6 350.8 434.5 347.8 443.8z"/></g>
<g class="c8"><path d="M347.1 457.7L350.1 450.6 347.8 443.8 344.8 452.1z"/></g>
<g class="c6"><path d="M344.1 463.9L347.1 457.7 344.8 452.1 341.8 459.3z"/></g>
<g class="c5"><path d="M341.1 469.2L344.1 463.9 341.8 459.3 338.8 465.5z"/></g>
<g class="c3"><path d="M338.1 473.7L341.1 469.2 338.8 465.5 335.8 470.6z"/></g>
<g class="c2"><path d="M335.1 477.4L338.1 473.7 335.8 470.6 332.8 474.8z"/><path d="M332.1 480.4L335.1 477.4 332.8 474.8 329.8 478.3z"/></g>
<g class="c1"><path d="M329.1 482.9L332.1 480.4 329.8 478.3 326.8 481.1z"/><path d="M326.1 485L329.1 482.9 326.8 481.1 323.8 483.4z"/></g>
<g class="c0"><path d="M323.1 486.7L326.1 485 323.8 483.4 320.9 485.3z"/><path d="M320.2 488.1L323.1 486.7 320.9 485.3 317.9 486.8z"/><path d="M317.2 489.3L320.2 488.1 317.9 486.8 314.9 488.2z"/><path d="M314.2 490.1L317.2 489.3 314.9 488.2 311.9 489z"/><path d="M448 455.4L451 454.7 448.7 453.6 445.7 454.1z"/><path d="M445 455.7L448 455.4 445.7 454.1 442.8 454.3z"/><path d="M442.1 455.7L445 455.7 442.8 454.3 439.8 454.2z"/><path d="M439.1 455.5L442.1 455.7 439.8 454.2 436.8 453.8z"/></g>
<g class="c1"><path d="M436.1 454.9L439.1 455.5 436.8 453.8 433.8 452.9z"/><path d="M433.1 453.9L436.1 454.9 433.8 452.9 430.8 451.5z"/></g>
<g class="c2"><path d="M430.1 452.3L433.1 453.9 430.8 451.5 427.8 449.4z"/></g>
<g class="c3"><path d="M427.1 450.1L430.1 452.3 427.8 449.4 424.8 446.5z"/></g>
<g class="c4"><path d="M424.1 447.2L427.1 450.1 424.8 446.5 421.8 442.9z"/></g>
<g class="c5"><path d="M421.1 443.5L424.1 447.2 421.8 442.9 418.8 438.3z"/></g>
<g class="c6"><path d="M418.1 439.1L421.1 443.5 418.8 438.3 415.8 432.8z"/></g>
<g class="c8"><path d="M415.1 434L418.1 439.1 415.8 432.8 412.9 426.4z"/></g>
<g class="c10"><path d="M412.2 428.3L415.1 434 412.9 426.4 409.9 419.3z"/></g>
<g class="c12"><path d="M409.2 422.1L412.2 428.3 409.9 419.3 406.9 411.6z"/></g>
<g class="c14"><path d="M406.2 415.6L409.2 422.1 406.9 411.6 403.9 403.7z"/></g>
<g class="c17"><path d="M403.2 409.2L406.2 415.6 403.9 403.7 400.9 395.7z"/></g>
<g class="c19"><path d="M400.2 403.1L403.2 409.2 400.9 395.7 397.9 388.2z"/></g>
<g class="c21"><path d="M397.2 397.7L400.2 403.1 397.9 388.2 394.9 381.4z"/></g>
<g class="c22"><path d="M394.2 393.2L397.2 397.7 394.9 381.4 391.9 375.9z"/></g>
<g class="c24"><path d="M391.2 390L394.2 393.2 391.9 375.9 388.9 371.9z"/></g>
<g class="c25"><path d="M388.2 388.4L391.2 390 388.9 371.9 385.9 369.7z"/><path d="M385.2 388.3L388.2 388.4 385.9 369.7 382.9 369.5z"/><path d="M382.3 390L385.2 388.3 382.9 369.5 380 371.3z"/><path d="M379.3 393.3L382.3 390 380 371.3 377 375.1z"/></g>
<g class="c24"><path d="M376.3 398.1L379.3 393.3 377 375.1 374 380.8z"/></g>
<g class="c22"><path d="M373.3 404.2L376.3 398.1 374 380.8 371 387.9z"/></g>
<g class="c21"><path d="M370.3 411.2L373.3 404.2 371 387.9 368 396.3z"/></g>
<g class="c19"><path d="M367.3 418.9L370.3 411.2 368 396.3 365 405.4z"/></g>
<g class="c17"><path d="M364.3 427L367.3 418.9 365 405.4 362 415z"/></g>
<g class="c14"><path d="M361.3 435L364.3 427 362 415 359 424.6z"/></g>
<g class="c12"><path d="M358.3 442.9L361.3 435 359 424.6 356 433.9z"/></g>
<g class="c10"><path d="M355.3 450.2L358.3 442.9 356 433.9 353 442.6z"/></g>
<g class="c8"><path d="M352.4 457L355.3 450.2 353 442.6 350.1 450.6z"/></g>
<g class="c6"><path d="M349.4 463L352.4 457 350.1 450.6 347.1 457.7z"/></g>
<g class="c5"><path d="M346.4 468.2L349.4 463 347.1 457.7 344.1 463.9z"/></g>
<g class="c4"><path d="M343.4 472.8L346.4 468.2 344.1 463.9 341.1 469.2z"/></g>
<g class="c3"><path d="M340.4 476.6L343.4 472.8 341.1 469.2 338.1 473.7z"/></g>
<g class="c2"><path d="M337.4 479.8L340.4 476.6 338.1 473.7 335.1 477.4z"/></g>
<g class="c1"><path d="M334.4 482.5L337.4 479.8 335.1 477.4 332.1 480.4z"/><path d="M331.4 484.7L334.4 482.5 332.1 480.4 329.1 482.9z"/></g>
<g class="c0"><path d="M328.4 486.5L331.4 484.7 329.1 482.9 326.1 485z"/><path d="M325.4 488.1L328.4 486.5 326.1 485 323.1 486.7z"/><path d="M322.5 489.4L325.4 488.1 323.1 486.7 320.2 488.1z"/><path d="M319.5 490.3L322.5 489.4 320.2 488.1 317.2 489.3z"/><path d="M450.3 456.5L453.3 455.7 451 454.7 448 455.4z"/><path d="M447.3 457L450.3 456.5 448 455.4 445 455.7z"/><path d="M444.4 457.2L447.3 457 445 455.7 442.1 455.7z"/><path d="M441.4 457.2L444.4 457.2 442.1 455.7 439.1 455.5z"/></g>
<g class="c1"><path d="M438.4 456.9L441.4 457.2 439.1 455.5 436.1 454.9z"/><path d="M435.4 456.2L438.4 456.9 436.1 454.9 433.1 453.9z"/><path d="M432.4 455.1L435.4 456.2 433.1 453.9 430.1 452.3z"/></g>
<g class="c2"><path d="M429.4 453.4L432.4 455.1 430.1 452.3 427.1 450.1z"/></g>
<g class="c3"><path d="M426.4 451.2L429.4 453.4 427.1 450.1 424.1 447.2z"/></g>
<g class="c4"><path d="M423.4 448.4L426.4 451.2 424.1 447.2 421.1 443.5z"/></g>
<g class="c5"><path d="M420.4 445L423.4 448.4 421.1 443.5 418.1 439.1z"/></g>
<g class="c7"><path d="M417.4 441L420.4 445 418.1 439.1 415.1 434z"/></g>
<g class="c8"><path d="M414.4 436.5L417.4 441 415.1 434 412.2 428.3z"/></g>
<g class="c10"><path d="M411.5 431.6L414.4 436.5 412.2 428.3 409.2 422.1z"/></g>
<g class="c12"><path d="M408.5 426.6L411.5 431.6 409.2 422.1 406.2 415.6z"/></g>
<g class="c13"><path d="M405.5 421.5L408.5 426.6 406.2 415.6 403.2 409.2z"/></g>
<g class="c15"><path d="M402.5 416.7L405.5 421.5 403.2 409.2 400.2 403.1z"/></g>
<g class="c17"><path d="M399.5 412.5L402.5 416.7 400.2 403.1 397.2 397.7z"/></g>
<g class="c18"><path d="M396.5 409L399.5 412.5 397.2 397.7 394.2 393.2z"/></g>
<g class="c19"><path d="M393.5 406.6L396.5 409 394.2 393.2 391.2 390z"/></g>
<g class="c20"><path d="M390.5 405.4L393.5 406.6 391.2 390 388.2 388.4z"/></g>
<g class="c21"><path d="M387.5 405.5L390.5 405.4 388.2 388.4 385.2 388.3z"/><path d="M384.5 407L387.5 405.5 385.2 388.3 382.3 390z"/></g>
<g class="c20"><path d="M381.6 409.8L384.5 407 382.3 390 379.3 393.3z"/></g>
<g class="c19"><path d="M378.6 413.9L381.6 409.8 379.3 393.3 376.3 398.1z"/></g>
<g class="c18"><path d="M375.6 418.9L378.6 413.9 376.3 398.1 373.3 404.2z"/></g>
<g class="c17"><path d="M372.6 424.8L375.6 418.9 373.3 404.2 370.3 411.2z"/></g>
<g class="c15"><path d="M369.6 431.2L372.6 424.8 370.3 411.2 367.3 418.9z"/></g>
<g class="c13"><path d="M366.6 437.9L369.6 431.2 367.3 418.9 364.3 427z"/></g>
<g class="c12"><path d="M363.6 444.6L366.6 437.9 364.3 427 361.3 435z"/></g>
<g class="c10"><path d="M360.6 451.1L363.6 444.6 361.3 435 358.3 442.9z"/></g>
<g class="c8"><path d="M357.6 457.2L360.6 451.1 358.3 442.9 355.3 450.2z"/></g>
<g class="c7"><path d="M354.6 462.8L357.6 457.2 355.3 450.2 352.4 457z"/></g>
<g class="c5"><path d="M351.7 467.8L354.6 462.8 352.4 457 349.4 463z"/></g>
<g class="c4"><path d="M348.7 472.3L351.7 467.8 349.4 463 346.4 468.2z"/></g>
<g class="c3"><path d="M345.7 476.1L348.7 472.3 346.4 468.2 343.4 472.8z"/></g>
<g class="c2"><path d="M342.7 479.3L345.7 476.1 343.4 472.8 340.4 476.6z"/></g>
<g class="c1"><path d="M339.7 482.1L342.7 479.3 340.4 476.6 337.4 479.8z"/><path d="M336.7 484.4L339.7 482.1 337.4 479.8 334.4 482.5z"/><path d="M333.7 486.3L336.7 484.4 334.4 482.5 331.4 484.7z"/></g>
<g class="c0"><path d="M330.7 488L333.7 486.3 331.4 484.7 328.4 486.5z"/><path d="M327.7 489.4L330.7 488 328.4 486.5 325.4 488.1z"/><path d="M324.7 490.6L327.7 489.4 325.4 488.1 322.5 489.4z"/><path d="M321.8 491.4L324.7 490.6 322.5 489.4 319.5 490.3z"/><path d="M449.6 458.3L452.6 457.6 450.3 456.5 447.3 457z"/><path d="M446.6 458.7L449.6 458.3 447.3 457 444.4 457.2z"/><path d="M443.7 458.8L446.6 458.7 444.4 457.2 441.4 457.2z"/><path d="M440.7 458.7L443.7 458.8 441.4 457.2 438.4 456.9z"/></g>
<g class="c1"><path d="M437.7 458.3L440.7 458.7 438.4 456.9 435.4 456.2z"/><path d="M434.7 457.6L437.7 458.3 435.4 456.2 432.4 455.1z"/></g>
<g class="c2"><path d="M431.7 456.5L434.7 457.6 432.4 455.1 429.4 453.4z"/><path d="M428.7 454.9L431.7 456.5 429.4 453.4 426.4 451.2z"/></g>
<g class="c3"><path d="M425.7 452.8L428.7 454.9 426.4 451.2 423.4 448.4z"/></g>
<g class="c4"><path d="M422.7 450.3L425.7 452.8 423.4 448.4 420.4 445z"/></g>
<g class="c5"><path d="M419.7 447.3L422.7 450.3 420.4 445 417.4 441z"/></g>
<g class="c6"><path d="M416.7 443.9L419.7 447.3 417.4 441 414.4 436.5z"/></g>
<g class="c8"><path d="M413.8 440.2L416.7 443.9 414.4 436.5 411.5 431.6z"/></g>
<g class="c9"><path d="M410.8 436.3L413.8 440.2 411.5 431.6 408.5 426.6z"/></g>
<g class="c11"><path d="M407.8 432.4L410.8 436.3 408.5 426.6 405.5 421.5z"/></g>
<g class="c12"><path d="M404.8 428.8L407.8 432.4 405.5 421.5 402.5 416.7z"/></g>
<g class="c13"><path d="M401.8 425.6L404.8 428.8 402.5 416.7 399.5 412.5z"/></g>
<g class="c15"><path d="M398.8 423L401.8 425.6 399.5 412.5 396.5 409z"/></g>
<g class="c16"><path d="M395.8 421.3L398.8 423 396.5 409 393.5 406.6z"/><path d="M392.8 420.5L395.8 421.3 393.5 406.6 390.5 405.4z"/></g>
<g class="c17"><path d="M389.8 420.7L392.8 420.5 390.5 405.4 387.5 405.5z"/><path d="M386.8 422.1L389.8 420.7 387.5 405.5 384.5 407z"/></g>
<g class="c16"><path d="M383.9 424.5L386.8 422.1 384.5 407 381.6 409.8z"/><path d="M380.9 427.9L383.9 424.5 381.6 409.8 378.6 413.9z"/></g>
<g class="c15"><path d="M377.9 432.1L380.9 427.9 378.6 413.9 375.6 418.9z"/></g>
<g class="c13"><path d="M374.9 436.9L377.9 432.1 375.6 418.9 372.6 424.8z"/></g>
<g class="c12"><path d="M371.9 442.2L374.9 436.9 372.6 424.8 369.6 431.2z"/></g>
<g class="c11"><path d="M368.9 447.6L371.9 442.2 369.6 431.2 366.6 437.9z"/></g>
<g class="c9"><path d="M365.9 453.1L368.9 447.6 366.6 437.9 363.6 444.6z"/></g>
<g class="c8"><path d="M362.9 458.4L365.9 453.1 363.6 444.6 360.6 451.1z"/></g>
<g class="c6"><path d="M359.9 463.5L362.9 458.4 360.6 451.1 357.6 457.2z"/></g>
<g class="c5"><path d="M356.9 468.1L359.9 463.5 357.6 457.2 354.6 462.8z"/></g>
<g class="c4"><path d="M354 472.3L356.9 468.1 354.6 462.8 351.7 467.8z"/></g>
<g class="c3"><path d="M351 475.9L354 472.3 351.7 467.8 348.7 472.3z"/></g>
<g class="c2"><path d="M348 479.1L351 475.9 348.7 472.3 345.7 476.1z"/><path d="M345 481.9L348 479.1 345.7 476.1 342.7 479.3z"/></g>
<g class="c1"><path d="M342 484.2L345 481.9 342.7 479.3 339.7 482.1z"/><path d="M339 486.2L342 484.2 339.7 482.1 336.7 484.4z"/></g>
<g class="c0"><path d="M336 488L339 486.2 336.7 484.4 333.7 486.3z"/><path d="M333 489.4L336 488 333.7 486.3 330.7 488z"/><path d="M330 490.7L333 489.4 330.7 488 327.7 489.4z"/><path d="M327 491.6L330 490.7 327.7 489.4 324.7 490.6z"/><path d="M451.9 459.5L454.9 458.7 452.6 457.6 449.6 458.3z"/><path d="M448.9 460L451.9 459.5 449.6 458.3 446.6 458.7z"/><path d="M446 460.3L448.9 460 446.6 458.7 443.7 458.8z"/><path d="M443 460.4L446 460.3 443.7 458.8 440.7 458.7z"/><path d="M440 460.3L443 460.4 440.7 458.7 437.7 458.3z"/></g>
<g class="c1"><path d="M437 459.9L440 460.3 437.7 458.3 434.7 457.6z"/><path d="M434 459.2L437 459.9 434.7 457.6 431.7 456.5z"/></g>
<g class="c2"><path d="M431 458.2L434 459.2 431.7 456.5 428.7 454.9z"/><path d="M428 456.8L431 458.2 428.7 454.9 425.7 452.8z"/></g>
<g class="c3"><path d="M425 455L428 456.8 425.7 452.8 422.7 450.3z"/></g>
<g class="c4"><path d="M422 452.8L425 455 422.7 450.3 419.7 447.3z"/></g>
<g class="c5"><path d="M419 450.3L422 452.8 419.7 447.3 416.7 443.9z"/></g>
<g class="c6"><path d="M416 447.6L419 450.3 416.7 443.9 413.8 440.2z"/></g>
<g class="c7"><path d="M413.1 444.8L416 447.6 413.8 440.2 410.8 436.3z"/></g>
<g class="c8"><path d="M410.1 442L413.1 444.8 410.8 436.3 407.8 432.4z"/></g>
<g class="c9"><path d="M407.1 439.3L410.1 442 407.8 432.4 404.8 428.8z"/></g>
<g class="c10"><path d="M404.1 437L407.1 439.3 404.8 428.8 401.8 425.6z"/></g>
<g class="c11"><path d="M401.1 435.2L404.1 437 401.8 425.6 398.8 423z"/></g>
<g class="c12"><path d="M398.1 434L401.1 435.2 398.8 423 395.8 421.3z"/></g>
<g class="c13"><path d="M395.1 433.5L398.1 434 395.8 421.3 392.8 420.5z"/><path d="M392.1 433.9L395.1 433.5 392.8 420.5 389.8 420.7z"/><path d="M389.1 435.1L392.1 433.9 389.8 420.7 386.8 422.1z"/><path d="M386.1 437.2L389.1 435.1 386.8 422.1 383.9 424.5z"/></g>
<g class="c12"><path d="M383.2 440L386.1 437.2 383.9 424.5 380.9 427.9z"/></g>
<g class="c11"><path d="M380.2 443.5L383.2 440 380.9 427.9 377.9 432.1z"/></g>
<g class="c10"><path d="M377.2 447.4L380.2 443.5 377.9 432.1 374.9 436.9z"/></g>
<g class="c9"><path d="M374.2 451.7L377.2 447.4 374.9 436.9 371.9 442.2z"/></g>
<g class="c8"><path d="M371.2 456.1L374.2 451.7 371.9 442.2 368.9 447.6z"/></g>
<g class="c7"><path d="M368.2 460.6L371.2 456.1 368.9 447.6 365.9 453.1z"/></g>
<g class="c6"><path d="M365.2 464.9L368.2 460.6 365.9 453.1 362.9 458.4z"/></g>
<g class="c5"><path d="M362.2 469L365.2 464.9 362.9 458.4 359.9 463.5z"/></g>
<g class="c4"><path d="M359.2 472.8L362.2 469 359.9 463.5 356.9 468.1z"/></g>
<g class="c3"><path d="M356.2 476.2L359.2 472.8 356.9 468.1 354 472.3z"/></g>
<g class="c2"><path d="M353.3 479.2L356.2 476.2 354 472.3 351 475.9z"/><path d="M350.3 481.9L353.3 479.2 351 475.9 348 479.1z"/></g>
<g class="c1"><path d="M347.3 484.2L350.3 481.9 348 479.1 345 481.9z"/><path d="M344.3 486.2L347.3 484.2 345 481.9 342 484.2z"/></g>
<g class="c0"><path d="M341.3 488L344.3 486.2 342 484.2 339 486.2z"/><path d="M338.3 489.5L341.3 488 339 486.2 336 488z"/><path d="M335.3 490.8L338.3 489.5 336 488 333 489.4z"/><path d="M332.3 491.9L335.3 490.8 333 489.4 330 490.7z"/><path d="M329.3 492.7L332.3 491.9 330 490.7 327 491.6z"/><path d="M451.2 461.3L454.2 460.5 451.9 459.5 448.9 460z"/><path d="M448.2 461.8L451.2 461.3 448.9 460 446 460.3z"/><path d="M445.3 462.1L448.2 461.8 446 460.3 443 460.4z"/><path d="M442.3 462.2L445.3 462.1 443 460.4 440 460.3z"/><path d="M439.3 462.1L442.3 462.2 440 460.3 437 459.9z"/></g>
<g class="c1"><path d="M436.3 461.7L439.3 462.1 437 459.9 434 459.2z"/><path d="M433.3 461.1L436.3 461.7 434 459.2 431 458.2z"/></g>
<g class="c2"><path d="M430.3 460.2L433.3 461.1 431 458.2 428 456.8z"/><path d="M427.3 459L430.3 460.2 428 456.8 425 455z"/></g>
<g class="c3"><path d="M424.3 457.6L427.3 459 425 455 422 452.8z"/></g>
<g class="c4"><path d="M421.3 455.9L424.3 457.6 422 452.8 419 450.3z"/></g>
<g class="c5"><path d="M418.3 454L421.3 455.9 419 450.3 416 447.6z"/><path d="M415.4 452L418.3 454 416 447.6 413.1 444.8z"/></g>
<g class="c6"><path d="M412.4 450.1L415.4 452 413.1 444.8 410.1 442z"/></g>
<g class="c7"><path d="M409.4 448.2L412.4 450.1 410.1 442 407.1 439.3z"/></g>
<g class="c8"><path d="M406.4 446.6L409.4 448.2 407.1 439.3 404.1 437z"/></g>
<g class="c9"><path d="M403.4 445.4L406.4 446.6 404.1 437 401.1 435.2z"/><path d="M400.4 444.7L403.4 445.4 401.1 435.2 398.1 434z"/></g>
<g class="c10"><path d="M397.4 444.6L400.4 444.7 398.1 434 395.1 433.5z"/><path d="M394.4 445.1L397.4 444.6 395.1 433.5 392.1 433.9z"/><path d="M391.4 446.2L394.4 445.1 392.1 433.9 389.1 435.1z"/><path d="M388.4 448L391.4 446.2 389.1 435.1 386.1 437.2z"/></g>
<g class="c9"><path d="M385.5 450.3L388.4 448 386.1 437.2 383.2 440z"/><path d="M382.5 453.1L385.5 450.3 383.2 440 380.2 443.5z"/></g>
<g class="c8"><path d="M379.5 456.3L382.5 453.1 380.2 443.5 377.2 447.4z"/></g>
<g class="c7"><path d="M376.5 459.8L379.5 456.3 377.2 447.4 374.2 451.7z"/></g>
<g class="c6"><path d="M373.5 463.3L376.5 459.8 374.2 451.7 371.2 456.1z"/></g>
<g class="c5"><path d="M370.5 466.9L373.5 463.3 371.2 456.1 368.2 460.6z"/><path d="M367.5 470.4L370.5 466.9 368.2 460.6 365.2 464.9z"/></g>
<g class="c4"><path d="M364.5 473.8L367.5 470.4 365.2 464.9 362.2 469z"/></g>
<g class="c3"><path d="M361.5 476.8L364.5 473.8 362.2 469 359.2 472.8z"/></g>
<g class="c2"><path d="M358.5 479.6L361.5 476.8 359.2 472.8 356.2 476.2z"/><path d="M355.5 482.2L358.5 479.6 356.2 476.2 353.3 479.2z"/></g>
<g class="c1"><path d="M352.6 484.4L355.5 482.2 353.3 479.2 350.3 481.9z"/><path d="M349.6 486.3L352.6 484.4 350.3 481.9 347.3 484.2z"/></g>
<g class="c0"><path d="M346.6 488.1L349.6 486.3 347.3 484.2 344.3 486.2z"/><path d="M343.6 489.6L346.6 488.1 344.3 486.2 341.3 488z"/><path d="M340.6 490.9L343.6 489.6 341.3 488 338.3 489.5z"/><path d="M337.6 492.1L340.6 490.9 338.3 489.5 335.3 490.8z"/><path d="M334.6 492.9L337.6 492.1 335.3 490.8 332.3 491.9z"/><path d="M450.5 463.2L453.5 462.4 451.2 461.3 448.2 461.8z"/><path d="M447.5 463.6L450.5 463.2 448.2 461.8 445.3 462.1z"/><path d="M444.6 463.9L447.5 463.6 445.3 462.1 442.3 462.2z"/><path d="M441.6 464L444.6 463.9 442.3 462.2 439.3 462.1z"/><path d="M438.6 463.9L441.6 464 439.3 462.1 436.3 461.7z"/></g>
<g class="c1"><path d="M435.6 463.7L438.6 463.9 436.3 461.7 433.3 461.1z"/><path d="M432.6 463.2L435.6 463.7 433.3 461.1 430.3 460.2z"/></g>
<g class="c2"><path d="M429.6 462.5L432.6 463.2 430.3 460.2 427.3 459z"/><path d="M426.6 461.6L429.6 462.5 427.3 459 424.3 457.6z"/></g>
<g class="c3"><path d="M423.6 460.6L426.6 461.6 424.3 457.6 421.3 455.9z"/><path d="M420.6 459.4L423.6 460.6 421.3 455.9 418.3 454z"/></g>
<g class="c4"><path d="M417.6 458.1L420.6 459.4 418.3 454 415.4 452z"/></g>
<g class="c5"><path d="M414.7 456.8L417.6 458.1 415.4 452 412.4 450.1z"/><path d="M411.7 455.7L414.7 456.8 412.4 450.1 409.4 448.2z"/></g>
<g class="c6"><path d="M408.7 454.7L411.7 455.7 409.4 448.2 406.4 446.6z"/><path d="M405.7 454L408.7 454.7 406.4 446.6 403.4 445.4z"/></g>
<g class="c7"><path d="M402.7 453.7L405.7 454 403.4 445.4 400.4 444.7z"/><path d="M399.7 453.7L402.7 453.7 400.4 444.7 397.4 444.6z"/><path d="M396.7 454.3L399.7 453.7 397.4 444.6 394.4 445.1z"/><path d="M393.7 455.4L396.7 454.3 394.4 445.1 391.4 446.2z"/><path d="M390.7 456.9L393.7 455.4 391.4 446.2 388.4 448z"/><path d="M387.7 458.8L390.7 456.9 388.4 448 385.5 450.3z"/></g>
<g class="c6"><path d="M384.8 461.2L387.7 458.8 385.5 450.3 382.5 453.1z"/><path d="M381.8 463.8L384.8 461.2 382.5 453.1 379.5 456.3z"/></g>
<g class="c5"><path d="M378.8 466.5L381.8 463.8 379.5 456.3 376.5 459.8z"/><path d="M375.8 469.4L378.8 466.5 376.5 459.8 373.5 463.3z"/></g>
<g class="c4"><path d="M372.8 472.3L375.8 469.4 373.5 463.3 370.5 466.9z"/></g>
<g class="c3"><path d="M369.8 475.1L372.8 472.3 370.5 466.9 367.5 470.4z"/><path d="M366.8 477.8L369.8 475.1 367.5 470.4 364.5 473.8z"/></g>
<g class="c2"><path d="M363.8 480.3L366.8 477.8 364.5 473.8 361.5 476.8z"/><path d="M360.8 482.6L363.8 480.3 361.5 476.8 358.5 479.6z"/></g>
<g class="c1"><path d="M357.8 484.7L360.8 482.6 358.5 479.6 355.5 482.2z"/><path d="M354.9 486.6L357.8 484.7 355.5 482.2 352.6 484.4z"/></g>
<g class="c0"><path d="M351.9 488.3L354.9 486.6 352.6 484.4 349.6 486.3z"/><path d="M348.9 489.8L351.9 488.3 349.6 486.3 346.6 488.1z"/><path d="M345.9 491.1L348.9 489.8 346.6 488.1 343.6 489.6z"/><path d="M342.9 492.3L345.9 491.1 343.6 489.6 340.6 490.9z"/><path d="M339.9 493.2L342.9 492.3 340.6 490.9 337.6 492.1z"/><path d="M452.8 464.3L455.8 463.4 453.5 462.4 450.5 463.2z"/><path d="M449.8 465L452.8 464.3 450.5 463.2 447.5 463.6z"/><path d="M446.9 465.4L449.8 465 447.5 463.6 444.6 463.9z"/><path d="M443.9 465.7L446.9 465.4 444.6 463.9 441.6 464z"/><path d="M440.9 465.9L443.9 465.7 441.6 464 438.6 463.9z"/><path d="M437.9 465.9L440.9 465.9 438.6 463.9 435.6 463.7z"/></g>
<g class="c1"><path d="M434.9 465.8L437.9 465.9 435.6 463.7 432.6 463.2z"/><path d="M431.9 465.5L434.9 465.8 432.6 463.2 429.6 462.5z"/><path d="M428.9 465.1L431.9 465.5 429.6 462.5 426.6 461.6z"/></g>
<g class="c2"><path d="M425.9 464.5L428.9 465.1 426.6 461.6 423.6 460.6z"/><path d="M422.9 463.8L425.9 464.5 423.6 460.6 420.6 459.4z"/></g>
<g class="c3"><path d="M419.9 463.1L422.9 463.8 420.6 459.4 417.6 458.1z"/><path d="M417 462.4L419.9 463.1 417.6 458.1 414.7 456.8z"/></g>
<g class="c4"><path d="M414 461.8L417 462.4 414.7 456.8 411.7 455.7z"/><path d="M411 461.3L414 461.8 411.7 455.7 408.7 454.7z"/></g>
<g class="c5"><path d="M408 461L411 461.3 408.7 454.7 405.7 454z"/><path d="M405 461L408 461 405.7 454 402.7 453.7z"/><path d="M402 461.2L405 461 402.7 453.7 399.7 453.7z"/><path d="M399 461.9L402 461.2 399.7 453.7 396.7 454.3z"/><path d="M396 462.9L399 461.9 396.7 454.3 393.7 455.4z"/><path d="M393 464.2L396 462.9 393.7 455.4 390.7 456.9z"/><path d="M390 465.8L393 464.2 390.7 456.9 387.7 458.8z"/><path d="M387.1 467.8L390 465.8 387.7 458.8 384.8 461.2z"/></g>
<g class="c4"><path d="M384.1 469.9L387.1 467.8 384.8 461.2 381.8 463.8z"/><path d="M381.1 472.1L384.1 469.9 381.8 463.8 378.8 466.5z"/></g>
<g class="c3"><path d="M378.1 474.5L381.1 472.1 378.8 466.5 375.8 469.4z"/><path d="M375.1 476.8L378.1 474.5 375.8 469.4 372.8 472.3z"/></g>
<g class="c2"><path d="M372.1 479.1L375.1 476.8 372.8 472.3 369.8 475.1z"/><path d="M369.1 481.3L372.1 479.1 369.8 475.1 366.8 477.8z"/></g>
<g class="c1"><path d="M366.1 483.3L369.1 481.3 366.8 477.8 363.8 480.3z"/><path d="M363.1 485.2L366.1 483.3 363.8 480.3 360.8 482.6z"/><path d="M360.1 487L363.1 485.2 360.8 482.6 357.8 484.7z"/></g>
<g class="c0"><path d="M357.1 488.6L360.1 487 357.8 484.7 354.9 486.6z"/><path d="M354.2 490L357.1 488.6 354.9 486.6 351.9 488.3z"/><path d="M351.2 491.3L354.2 490 351.9 488.3 348.9 489.8z"/><path d="M348.2 492.5L351.2 491.3 348.9 489.8 345.9 491.1z"/><path d="M345.2 493.4L348.2 492.5 345.9 491.1 342.9 492.3z"/><path d="M342.2 494.2L345.2 493.4 342.9 492.3 339.9 493.2z"/><path d="M452.1 466.1L455.1 465.3 452.8 464.3 449.8 465z"/><path d="M449.1 466.9L452.1 466.1 449.8 465 446.9 465.4z"/><path d="M446.2 467.3L449.1 466.9 446.9 465.4 443.9 465.7z"/><path d="M443.2 467.7L446.2 467.3 443.9 465.7 440.9 465.9z"/><path d="M440.2 467.9L443.2 467.7 440.9 465.9 437.9 465.9z"/><path d="M437.2 468L440.2 467.9 437.9 465.9 434.9 465.8z"/></g>
<g class="c1"><path d="M434.2 468.1L437.2 468 434.9 465.8 431.9 465.5z"/><path d="M431.2 468L434.2 468.1 431.9 465.5 428.9 465.1z"/><path d="M428.2 467.8L431.2 468 428.9 465.1 425.9 464.5z"/></g>
<g class="c2"><path d="M425.2 467.5L428.2 467.8 425.9 464.5 422.9 463.8z"/><path d="M422.2 467.3L425.2 467.5 422.9 463.8 419.9 463.1z"/><path d="M419.2 467L422.2 467.3 419.9 463.1 417 462.4z"/></g>
<g class="c3"><path d="M416.3 466.7L419.2 467 417 462.4 414 461.8z"/><path d="M413.3 466.6L416.3 466.7 414 461.8 411 461.3z"/><path d="M410.3 466.6L413.3 466.6 411 461.3 408 461z"/><path d="M407.3 466.8L410.3 466.6 408 461 405 461z"/></g>
<g class="c4"><path d="M404.3 467.3L407.3 466.8 405 461 402 461.2z"/><path d="M401.3 468L404.3 467.3 402 461.2 399 461.9z"/><path d="M398.3 468.9L401.3 468 399 461.9 396 462.9z"/><path d="M395.3 470.1L398.3 468.9 396 462.9 393 464.2z"/></g>
<g class="c3"><path d="M392.3 471.5L395.3 470.1 393 464.2 390 465.8z"/><path d="M389.3 473.1L392.3 471.5 390 465.8 387.1 467.8z"/><path d="M386.4 474.8L389.3 473.1 387.1 467.8 384.1 469.9z"/><path d="M383.4 476.7L386.4 474.8 384.1 469.9 381.1 472.1z"/></g>
<g class="c2"><path d="M380.4 478.6L383.4 476.7 381.1 472.1 378.1 474.5z"/><path d="M377.4 480.5L380.4 478.6 378.1 474.5 375.1 476.8z"/><path d="M374.4 482.4L377.4 480.5 375.1 476.8 372.1 479.1z"/></g>
<g class="c1"><path d="M371.4 484.2L374.4 482.4 372.1 479.1 369.1 481.3z"/><path d="M368.4 485.9L371.4 484.2 369.1 481.3 366.1 483.3z"/><path d="M365.4 487.5L368.4 485.9 366.1 483.3 363.1 485.2z"/></g>
<g class="c0"><path d="M362.4 489L365.4 487.5 363.1 485.2 360.1 487z"/><path d="M359.4 490.3L362.4 489 360.1 487 357.1 488.6z"/><path d="M356.5 491.6L359.4 490.3 357.1 488.6 354.2 490z"/><path d="M353.5 492.8L356.5 491.6 354.2 490 351.2 491.3z"/><path d="M350.5 493.6L353.5 492.8 351.2 491.3 348.2 492.5z"/><path d="M347.5 494.5L350.5 493.6 348.2 492.5 345.2 493.4z"/><path d="M451.4 468L454.4 467.2 452.1 466.1 449.1 466.9z"/><path d="M448.5 468.8L451.4 468 449.1 466.9 446.2 467.3z"/><path d="M445.5 469.2L448.5 468.8 446.2 467.3 443.2 467.7z"/><path d="M442.5 469.7L445.5 469.2 443.2 467.7 440.2 467.9z"/><path d="M439.5 470L442.5 469.7 440.2 467.9 437.2 468z"/><path d="M436.5 470.3L439.5 470 437.2 468 434.2 468.1z"/></g>
<g class="c1"><path d="M433.5 470.4L436.5 470.3 434.2 468.1 431.2 468z"/><path d="M430.5 470.5L433.5 470.4 431.2 468 428.2 467.8z"/><path d="M427.5 470.6L430.5 470.5 428.2 467.8 425.2 467.5z"/><path d="M424.5 470.6L427.5 470.6 425.2 467.5 422.2 467.3z"/><path d="M421.5 470.7L424.5 470.6 422.2 467.3 419.2 467z"/></g>
<g class="c2"><path d="M418.6 470.8L421.5 470.7 419.2 467 416.3 466.7z"/><path d="M415.6 470.9L418.6 470.8 416.3 466.7 413.3 466.6z"/><path d="M412.6 471.2L415.6 470.9 413.3 466.6 410.3 466.6z"/><path d="M409.6 471.5L412.6 471.2 410.3 466.6 407.3 466.8z"/><path d="M406.6 472.1L409.6 471.5 407.3 466.8 404.3 467.3z"/></g>
<g class="c3"><path d="M403.6 472.8L406.6 472.1 404.3 467.3 401.3 468z"/><path d="M400.6 473.7L403.6 472.8 401.3 468 398.3 468.9z"/></g>
<g class="c2"><path d="M397.6 474.8L400.6 473.7 398.3 468.9 395.3 470.1z"/><path d="M394.6 476L397.6 474.8 395.3 470.1 392.3 471.5z"/><path d="M391.6 477.4L394.6 476 392.3 471.5 389.3 473.1z"/><path d="M388.6 478.9L391.6 477.4 389.3 473.1 386.4 474.8z"/><path d="M385.7 480.4L388.6 478.9 386.4 474.8 383.4 476.7z"/></g>
<g class="c1"><path d="M382.7 482L385.7 480.4 383.4 476.7 380.4 478.6z"/><path d="M379.7 483.6L382.7 482 380.4 478.6 377.4 480.5z"/><path d="M376.7 485.1L379.7 483.6 377.4 480.5 374.4 482.4z"/><path d="M373.7 486.6L376.7 485.1 374.4 482.4 371.4 484.2z"/><path d="M370.7 488.1L373.7 486.6 371.4 484.2 368.4 485.9z"/></g>
<g class="c0"><path d="M367.7 489.4L370.7 488.1 368.4 485.9 365.4 487.5z"/><path d="M364.7 490.7L367.7 489.4 365.4 487.5 362.4 489z"/><path d="M361.7 491.9L364.7 490.7 362.4 489 359.4 490.3z"/><path d="M358.7 493L361.7 491.9 359.4 490.3 356.5 491.6z"/><path d="M355.8 493.9L358.7 493 356.5 491.6 353.5 492.8z"/><path d="M352.8 494.7L355.8 493.9 353.5 492.8 350.5 493.6z"/><path d="M450.7 469.8L453.7 469 451.4 468 448.5 468.8z"/><path d="M447.8 470.7L450.7 469.8 448.5 468.8 445.5 469.2z"/><path d="M444.8 471.2L447.8 470.7 445.5 469.2 442.5 469.7z"/><path d="M441.8 471.7L444.8 471.2 442.5 469.7 439.5 470z"/><path d="M438.8 472.1L441.8 471.7 439.5 470 436.5 470.3z"/><path d="M435.8 472.5L438.8 472.1 436.5 470.3 433.5 470.4z"/><path d="M432.8 472.8L435.8 472.5 433.5 470.4 430.5 470.5z"/></g>
<g class="c1"><path d="M429.8 473.1L432.8 472.8 430.5 470.5 427.5 470.6z"/><path d="M426.8 473.4L429.8 473.1 427.5 470.6 424.5 470.6z"/><path d="M423.8 473.7L426.8 473.4 424.5 470.6 421.5 470.7z"/><path d="M420.8 474L423.8 473.7 421.5 470.7 418.6 470.8z"/><path d="M417.9 474.3L420.8 474 418.6 470.8 415.6 470.9z"/><path d="M414.9 474.8L417.9 474.3 415.6 470.9 412.6 471.2z"/><path d="M411.9 475.3L414.9 474.8 412.6 471.2 409.6 471.5z"/></g>
<g class="c2"><path d="M408.9 475.9L411.9 475.3 409.6 471.5 406.6 472.1z"/><path d="M405.9 476.7L408.9 475.9 406.6 472.1 403.6 472.8z"/><path d="M402.9 477.5L405.9 476.7 403.6 472.8 400.6 473.7z"/><path d="M399.9 478.5L402.9 477.5 400.6 473.7 397.6 474.8z"/></g>
<g class="c1"><path d="M396.9 479.6L399.9 478.5 397.6 474.8 394.6 476z"/><path d="M393.9 480.8L396.9 479.6 394.6 476 391.6 477.4z"/><path d="M390.9 482.1L393.9 480.8 391.6 477.4 388.6 478.9z"/><path d="M388 483.4L390.9 482.1 388.6 478.9 385.7 480.4z"/><path d="M385 484.7L388 483.4 385.7 480.4 382.7 482z"/><path d="M382 486.1L385 484.7 382.7 482 379.7 483.6z"/><path d="M379 487.4L382 486.1 379.7 483.6 376.7 485.1z"/></g>
<g class="c0"><path d="M376 488.7L379 487.4 376.7 485.1 373.7 486.6z"/><path d="M373 490L376 488.7 373.7 486.6 370.7 488.1z"/><path d="M370 491.1L373 490 370.7 488.1 367.7 489.4z"/><path d="M367 492.3L370 491.1 367.7 489.4 364.7 490.7z"/><path d="M364 493.3L367 492.3 364.7 490.7 361.7 491.9z"/><path d="M361 494.1L364 493.3 361.7 491.9 358.7 493z"/><path d="M358.1 494.9L361 494.1 358.7 493 355.8 493.9z"/><path d="M447.1 472.5L450.1 471.7 447.8 470.7 444.8 471.2z"/><path d="M444.1 473.3L447.1 472.5 444.8 471.2 441.8 471.7z"/><path d="M441.1 473.8L444.1 473.3 441.8 471.7 438.8 472.1z"/><path d="M438.1 474.3L441.1 473.8 438.8 472.1 435.8 472.5z"/><path d="M435.1 474.8L438.1 474.3 435.8 472.5 432.8 472.8z"/><path d="M432.1 475.3L435.1 474.8 432.8 472.8 429.8 473.1z"/><path d="M429.1 475.7L432.1 475.3 429.8 473.1 426.8 473.4z"/><path d="M426.1 476.2L429.1 475.7 426.8 473.4 423.8 473.7z"/></g>
<g class="c1"><path d="M423.1 476.6L426.1 476.2 423.8 473.7 420.8 474z"/><path d="M420.1 477.1L423.1 476.6 420.8 474 417.9 474.3z"/><path d="M417.2 477.7L420.1 477.1 417.9 474.3 414.9 474.8z"/><path d="M414.2 478.3L417.2 477.7 414.9 474.8 411.9 475.3z"/><path d="M411.2 479L414.2 478.3 411.9 475.3 408.9 475.9z"/><path d="M408.2 479.7L411.2 479 408.9 475.9 405.9 476.7z"/><path d="M405.2 480.6L408.2 479.7 405.9 476.7 402.9 477.5z"/><path d="M402.2 481.5L405.2 480.6 402.9 477.5 399.9 478.5z"/><path d="M399.2 482.5L402.2 481.5 399.9 478.5 396.9 479.6z"/><path d="M396.2 483.6L399.2 482.5 396.9 479.6 393.9 480.8z"/><path d="M393.2 484.7L396.2 483.6 393.9 480.8 390.9 482.1z"/><path d="M390.2 485.9L393.2 484.7 390.9 482.1 388 483.4z"/></g>
<g class="c0"><path d="M387.3 487L390.2 485.9 388 483.4 385 484.7z"/><path d="M384.3 488.2L387.3 487 385 484.7 382 486.1z"/><path d="M381.3 489.4L384.3 488.2 382 486.1 379 487.4z"/><path d="M378.3 490.5L381.3 489.4 379 487.4 376 488.7z"/><path d="M375.3 491.6L378.3 490.5 376 488.7 373 490z"/><path d="M372.3 492.7L375.3 491.6 373 490 370 491.1z"/><path d="M369.3 493.6L372.3 492.7 370 491.1 367 492.3z"/><path d="M366.3 494.4L369.3 493.6 367 492.3 364 493.3z"/><path d="M446.4 474.4L449.4 473.6 447.1 472.5 444.1 473.3z"/><path d="M443.4 475.2L446.4 474.4 444.1 473.3 441.1 473.8z"/><path d="M440.4 475.9L443.4 475.2 441.1 473.8 438.1 474.3z"/><path d="M437.4 476.5L440.4 475.9 438.1 474.3 435.1 474.8z"/><path d="M434.4 477.1L437.4 476.5 435.1 474.8 432.1 475.3z"/><path d="M431.4 477.6L434.4 477.1 432.1 475.3 429.1 475.7z"/><path d="M428.4 478.2L431.4 477.6 429.1 475.7 426.1 476.2z"/><path d="M425.4 478.8L428.4 478.2 426.1 476.2 423.1 476.6z"/><path d="M422.4 479.4L425.4 478.8 423.1 476.6 420.1 477.1z"/><path d="M419.5 480L422.4 479.4 420.1 477.1 417.2 477.7z"/><path d="M416.5 480.7L419.5 480 417.2 477.7 414.2 478.3z"/><path d="M413.5 481.4L416.5 480.7 414.2 478.3 411.2 479z"/><path d="M410.5 482.2L413.5 481.4 411.2 479 408.2 479.7z"/><path d="M407.5 483.1L410.5 482.2 408.2 479.7 405.2 480.6z"/><path d="M404.5 483.9L407.5 483.1 405.2 480.6 402.2 481.5z"/><path d="M401.5 484.9L404.5 483.9 402.2 481.5 399.2 482.5z"/><path d="M398.5 485.9L401.5 484.9 399.2 482.5 396.2 483.6z"/><path d="M395.5 486.9L398.5 485.9 396.2 483.6 393.2 484.7z"/><path d="M392.5 487.9L395.5 486.9 393.2 484.7 390.2 485.9z"/><path d="M389.6 489L392.5 487.9 390.2 485.9 387.3 487z"/><path d="M386.6 490L389.6 489 387.3 487 384.3 488.2z"/><path d="M383.6 491.1L386.6 490 384.3 488.2 381.3 489.4z"/><path d="M380.6 492.1L383.6 491.1 381.3 489.4 378.3 490.5z"/><path d="M377.6 493L380.6 492.1 378.3 490.5 375.3 491.6z"/><path d="M374.6 493.8L377.6 493 375.3 491.6 372.3 492.7z"/><path d="M371.6 494.6L374.6 493.8 372.3 492.7 369.3 493.6z"/><path d="M442.7 477.1L445.7 476.2 443.4 475.2 440.4 475.9z"/><path d="M439.7 477.9L442.7 477.1 440.4 475.9 437.4 476.5z"/><path d="M436.7 478.6L439.7 477.9 437.4 476.5 434.4 477.1z"/><path d="M433.7 479.3L436.7 478.6 434.4 477.1 431.4 477.6z"/><path d="M430.7 479.9L433.7 479.3 431.4 477.6 428.4 478.2z"/><path d="M427.7 480.6L430.7 479.9 428.4 478.2 425.4 478.8z"/><path d="M424.7 481.3L427.7 480.6 425.4 478.8 422.4 479.4z"/><path d="M421.7 482L424.7 481.3 422.4 479.4 419.5 480z"/><path d="M418.8 482.7L421.7 482 419.5 480 416.5 480.7z"/><path d="M415.8 483.5L418.8 482.7 416.5 480.7 413.5 481.4z"/><path d="M412.8 484.3L415.8 483.5 413.5 481.4 410.5 482.2z"/><path d="M409.8 485.1L412.8 484.3 410.5 482.2 407.5 483.1z"/><path d="M406.8 485.9L409.8 485.1 407.5 483.1 404.5 483.9z"/><path d="M403.8 486.8L406.8 485.9 404.5 483.9 401.5 484.9z"/><path d="M400.8 487.8L403.8 486.8 401.5 484.9 398.5 485.9z"/><path d="M397.8 488.7L400.8 487.8 398.5 485.9 395.5 486.9z"/><path d="M394.8 489.7L397.8 488.7 395.5 486.9 392.5 487.9z"/><path d="M391.8 490.6L394.8 489.7 392.5 487.9 389.6 489z"/><path d="M388.9 491.6L391.8 490.6 389.6 489 386.6 490z"/><path d="M385.9 492.4L388.9 491.6 386.6 490 383.6 491.1z"/><path d="M382.9 493.3L385.9 492.4 383.6 491.1 380.6 492.1z"/><path d="M379.9 494.1L382.9 493.3 380.6 492.1 377.6 493z"/><path d="M439 479.7L442 478.9 439.7 477.9 436.7 478.6z"/><path d="M436 480.5L439 479.7 436.7 478.6 433.7 479.3z"/><path d="M433 481.4L436 480.5 433.7 479.3 430.7 479.9z"/><path d="M430 482.2L433 481.4 430.7 479.9 427.7 480.6z"/><path d="M427 482.9L430 482.2 427.7 480.6 424.7 481.3z"/><path d="M424 483.6L427 482.9 424.7 481.3 421.7 482z"/><path d="M421.1 484.4L424 483.6 421.7 482 418.8 482.7z"/><path d="M418.1 485.2L421.1 484.4 418.8 482.7 415.8 483.5z"/><path d="M415.1 486L418.1 485.2 415.8 483.5 412.8 484.3z"/><path d="M412.1 486.8L415.1 486 412.8 484.3 409.8 485.1z"/><path d="M409.1 487.6L412.1 486.8 409.8 485.1 406.8 485.9z"/><path d="M406.1 488.5L409.1 487.6 406.8 485.9 403.8 486.8z"/><path d="M403.1 489.4L406.1 488.5 403.8 486.8 400.8 487.8z"/><path d="M400.1 490.3L403.1 489.4 400.8 487.8 397.8 488.7z"/><path d="M397.1 491.1L400.1 490.3 397.8 488.7 394.8 489.7z"/><path d="M394.1 491.9L397.1 491.1 394.8 489.7 391.8 490.6z"/><path d="M391.2 492.7L394.1 491.9 391.8 490.6 388.9 491.6z"/><path d="M388.2 493.5L391.2 492.7 388.9 491.6 385.9 492.4z"/><path d="M429.3 484L432.3 483.2 430 482.2 427 482.9z"/><path d="M426.3 484.8L429.3 484 427 482.9 424 483.6z"/><path d="M423.3 485.6L426.3 484.8 424 483.6 421.1 484.4z"/><path d="M420.4 486.5L423.3 485.6 421.1 484.4 418.1 485.2z"/><path d="M417.4 487.3L420.4 486.5 418.1 485.2 415.1 486z"/><path d="M414.4 488.1L417.4 487.3 415.1 486 412.1 486.8z"/><path d="M411.4 488.9L414.4 488.1 412.1 486.8 409.1 487.6z"/><path d="M408.4 489.7L411.4 488.9 409.1 487.6 406.1 488.5z"/><path d="M405.4 490.5L408.4 489.7 406.1 488.5 403.1 489.4z"/><path d="M402.4 491.3L405.4 490.5 403.1 489.4 400.1 490.3z"/></g>
</g>
<path d="M96.3 219.5V449.4" stroke="#fff" stroke-width="1" fill="none"/>
<path d="M98.1 449.7L98.1 219.3" stroke="#6e6e6e" stroke-width="1.6" fill="none"/>
<path d="M98.1 449.7L327.5 555.2L626.5 474.2" stroke="#262626" stroke-width="1" stroke-opacity="0.7" fill="none"/>
<path d="M98.1 449.7L90.8 446.3M98.1 403.6L90.8 400.3M98.1 357.5L90.8 354.2M98.1 311.4L90.8 308.1M98.1 265.4L90.8 262M98.1 219.3L90.8 216M98.1 449.7L90.3 451.8M212.8 502.4L205.1 504.5M327.5 555.2L319.8 557.3M327.5 555.2L334.8 558.5M477 514.7L484.3 518M626.5 474.2L633.8 477.6" stroke="#2a2a2a" stroke-width="1.05" fill="none"/>
<text x="84.8" y="450.8" text-anchor="end">0</text>
<text x="84.8" y="404.8" text-anchor="end">0.2</text>
<text x="84.8" y="358.7" text-anchor="end">0.4</text>
<text x="84.8" y="312.6" text-anchor="end">0.6</text>
<text x="84.8" y="266.5" text-anchor="end">0.8</text>
<path d="M76.9 211.6Q79.6 210.6 80.6 208.2V220.4" stroke="#262626" stroke-width="1.7" fill="none"/>
<text x="77.9" y="470.6" text-anchor="middle">5</text>
<text x="193.7" y="524" text-anchor="middle">0</text>
<text x="307.3" y="575.6" text-anchor="middle">-5</text>
<text x="347.2" y="577.5" text-anchor="middle">-5</text>
<text x="494.7" y="538" text-anchor="middle">0</text>
<text x="644.4" y="497.1" text-anchor="middle">5</text>
<g>
<rect x="18.3" y="9.5" width="18" height="18" rx="1" fill="#f2f2f2" stroke="#b4b4b4" stroke-width="1"/>
<rect x="18.8" y="10" width="17" height="2.4" fill="#5b84b1"/>
<path d="M19.8 20.9L25.6 16.4L27.6 17.6L24.6 22.9Z" fill="#3d8fd6"/>
<path d="M24.6 22.9L27.6 17.6L29.1 14.2L28.9 19.5L26.6 25.2Z" fill="#b3262a"/>
<path d="M29.1 14.2L30.3 14.1L33.9 23.9L31.6 22.1L28.6 25.9L26.6 25.2L28.9 19.5Z" fill="#ec8a2a"/>
<path d="M26.6 25.2L28.6 25.9L29.8 23.6L28.2 22.6Z" fill="#f4b830"/>
<path d="M30.3 14.1L33.9 23.9L32 22.3L30.6 17Z" fill="#d5542a"/>
</g>
<path d="M542 17.5H553.8" stroke="#888" stroke-width="1"/>
<rect x="598.5" y="13.5" width="11.2" height="10.8" fill="none" stroke="#888" stroke-width="1"/>
<path d="M656 12.5L667.8 24.3M667.8 12.5L656 24.3" stroke="#888" stroke-width="1"/>
<path d="M676.8 50.6 Q679 47.6 682.2 50.8" stroke="#000" stroke-width="1.8" fill="none"/><path d="M685.8 48.2V54.5H679.4Z" fill="#000"/><path d="M681 49.5L684 52.5" stroke="#000" stroke-width="2"/>
<path d="M121.7 70V96" stroke="#8e8e8e" stroke-width="1"/><path d="M122.7 70V96" stroke="#fbfbfb" stroke-width="1"/>
<path d="M156.7 70V96" stroke="#8e8e8e" stroke-width="1"/><path d="M157.7 70V96" stroke="#fbfbfb" stroke-width="1"/>
<path d="M341.4 70V96" stroke="#8e8e8e" stroke-width="1"/><path d="M342.4 70V96" stroke="#fbfbfb" stroke-width="1"/>
<path d="M376.6 70V96" stroke="#8e8e8e" stroke-width="1"/><path d="M377.6 70V96" stroke="#fbfbfb" stroke-width="1"/>
<path d="M439.3 70V96" stroke="#8e8e8e" stroke-width="1"/><path d="M440.3 70V96" stroke="#fbfbfb" stroke-width="1"/>
<g>
<path d="M16.5 73.5H26.5L31 78V90.5H16.5Z" fill="#6a78aa"/>
<path d="M15.5 72.5H26L30 76.5V89.5H15.5Z" fill="#e6effc" stroke="#8c9fd0" stroke-width="1"/>
<path d="M26 72.5V76.5H30Z" fill="#5d6fa8"/>
<circle cx="16.4" cy="75.9" r="2.4" fill="#f07a42"/><circle cx="16.4" cy="75.9" r="1" fill="#f6d060"/>
<path d="M13.2 72.7L19.6 79.1M19.6 72.7L13.2 79.1M16.4 71.6V80.2M12.1 75.9H20.7" stroke="#f08a5a" stroke-width="0.8"/>
</g>
<g>
<path d="M40.5 77.5H46L47.5 79H55.5V89.5H40.5Z" fill="#d9b545" stroke="#b8922a" stroke-width="1"/>
<path d="M41 89.5L43.5 81.5H58L55.5 89.5Z" fill="#f7df70" stroke="#c09a30" stroke-width="1"/>
<path d="M49.5 75.5Q53 71 57 74.5" stroke="#5a7cb8" stroke-width="1.8" fill="none"/>
<path d="M55 73.5L59 73.2L57.5 77.2Z" fill="#3e5f9e"/>
</g>
<g>
<rect x="68.5" y="73" width="18" height="18" fill="#3f3fa8"/>
<rect x="69.5" y="73.8" width="16.4" height="16.4" fill="#5b5bc6"/>
<rect x="72.2" y="74.5" width="10.3" height="7.4" fill="#f4f4fa"/>
<rect x="74" y="84.3" width="7" height="5.2" fill="#e8e8f0"/>
<rect x="74.7" y="85" width="2.4" height="2.8" fill="#222"/>
</g>
<g>
<path d="M98 72.5H105L107 80H99Z" fill="#b8d4f0" stroke="#8aa8c8" stroke-width="0.7"/>
<path d="M96.5 80.5H111L112.5 84V88.5L110 91H98.5L96 88.5V83Z" fill="#b9b9b9" stroke="#8a8a8a" stroke-width="0.8"/>
<path d="M97 84.5H112" stroke="#e8e8e8" stroke-width="1.2"/>
<path d="M97.5 88H111" stroke="#7a7a7a" stroke-width="0.8"/>
<circle cx="110.5" cy="83" r="0.8" fill="#3a9a3a"/>
</g>
<path d="M136.3 74.2V88.3L139.8 85.1L142.6 90.8L145.3 89.4L142.6 83.9H147Z" fill="#fff" stroke="#1a1a1a" stroke-width="1" stroke-linejoin="round"/>
<path d="M176.4 83.7L182.4 89.8" stroke="#b07020" stroke-width="3.4" stroke-linecap="round"/><path d="M176.4 83.7L182.4 89.8" stroke="#f0a850" stroke-width="2" stroke-linecap="round"/>
<circle cx="171.4" cy="78.7" r="5.9" fill="#d8f0f8" stroke="#9a9ad8" stroke-width="1.4"/>
<path d="M168.20000000000002 78.7H174.6" stroke="#2a4a9a" stroke-width="1.8"/>
<path d="M171.4 75.5V81.9" stroke="#2a4a9a" stroke-width="1.8"/>
<path d="M204.1 83.7L210.1 89.8" stroke="#b07020" stroke-width="3.4" stroke-linecap="round"/><path d="M204.1 83.7L210.1 89.8" stroke="#f0a850" stroke-width="2" stroke-linecap="round"/>
<circle cx="199.1" cy="78.7" r="5.9" fill="#d8f0f8" stroke="#9a9ad8" stroke-width="1.4"/>
<path d="M195.9 78.7H202.29999999999998" stroke="#2a4a9a" stroke-width="1.8"/>
<path d="M222.5 83.5 Q220 81 221.5 79.8 Q223 79 225 81.5 L224.5 75.5 Q225 73.5 226.5 74.5 L227.5 79 L227.8 73.2 Q229 71.8 230.2 73 L230.6 79 L231.8 74 Q233.2 73 234 74.5 L233.8 79.5 L235.6 76.5 Q237.5 76 237.8 77.5 L236.5 84.5 Q235.5 89.5 232.5 91 H226.5 Q224 89 222.5 83.5Z" fill="#f6d8bc" stroke="#3e60c0" stroke-width="1.2" stroke-linejoin="round"/>
<g>
<path d="M250 77 A8 8 0 1 1 249.3 87.5" stroke="#2f4a8e" stroke-width="2.6" fill="none"/>
<path d="M246.5 73.5L253.5 74L248.5 80Z" fill="#2f4a8e"/>
<path d="M253 80L256.5 78.5L260 80V84.5L256.5 86L253 84.5Z" fill="#a8b8d8" stroke="#4a66a8" stroke-width="0.9"/>
<path d="M253 80L256.5 81.5L260 80M256.5 81.5V86" stroke="#4a66a8" stroke-width="0.8" fill="none"/>
</g>
<g>
<rect x="280.5" y="72.5" width="12" height="12" fill="#f2eab0" stroke="#a8a060" stroke-width="1"/>
<path d="M282.5 75.5H290.5M282.5 77.8H290.5M282.5 80.1H290.5M282.5 82.3H288" stroke="#c8c090" stroke-width="0.8"/>
<path d="M274 75Q275 80 278.5 83M283 88Q287 91 292.5 91" stroke="#2030e0" stroke-width="1" stroke-dasharray="1.6 1.2" fill="none"/>
<path d="M275 85.2H285M280 80.2V90.2" stroke="#111" stroke-width="2"/>
</g>
<g>
<path d="M321 74.2L310 84.5" stroke="#2a3a8a" stroke-width="4" stroke-linecap="round"/>
<path d="M321 74.2L310 84.5" stroke="#6a80d0" stroke-width="2.4" stroke-linecap="round"/>
<path d="M311 83 Q306 83 303.5 88 L302 91.5 L305.5 91 Q311 89 312.2 85Z" fill="#555"/>
<rect x="314.5" y="85.7" width="6" height="5.5" fill="#ee1010"/>
<path d="M329.5 81.3H335.9L332.7 84Z" fill="#222"/>
</g>
<g>
<rect x="352.8" y="72.3" width="13" height="11" fill="#e8ecf4" stroke="#3a5aa8" stroke-width="1"/>
<rect x="352.8" y="72.3" width="13" height="2" fill="#3a5aa8"/>
<rect x="350" y="76" width="12.5" height="11.5" fill="#eef0f6" stroke="#3a5aa8" stroke-width="1"/>
<rect x="350" y="76" width="12.5" height="2.2" fill="#3a5aa8"/>
<ellipse cx="357" cy="88" rx="3.6" ry="2.4" fill="none" stroke="#7a8aaa" stroke-width="1.6"/>
<ellipse cx="364.5" cy="88" rx="3.6" ry="2.4" fill="none" stroke="#7a8aaa" stroke-width="1.6"/>
</g>
<defs><linearGradient id="cbg" x1="0" y1="0" x2="0" y2="1">
<stop offset="0" stop-color="#5a70e0"/><stop offset="0.45" stop-color="#70d8d0"/><stop offset="0.8" stop-color="#f0e060"/><stop offset="1" stop-color="#f0a040"/></linearGradient></defs>
<rect x="389.3" y="72.9" width="11" height="17" rx="1.2" fill="url(#cbg)" stroke="#3e4a86" stroke-width="1.3"/>
<g>
<rect x="412.8" y="72.8" width="17.8" height="17.4" fill="#eef1f7" stroke="#3e4a86" stroke-width="1.4"/>
<rect x="415" y="76.6" width="5.4" height="4.6" fill="#e85a5a"/>
<rect x="415" y="83.2" width="5.4" height="4.6" fill="#5a60e0"/>
<path d="M422.5 78.8H427.6M422.5 85.3H427.6" stroke="#222" stroke-width="1.2"/>
</g>
<rect x="451.3" y="76.4" width="12.4" height="11.6" rx="0.8" fill="#a4a4a4" stroke="#8e8e8e" stroke-width="1"/>
<g>
<rect x="475.3" y="73.8" width="17.8" height="16.2" fill="#eef0f6" stroke="#3a5aa8" stroke-width="1.3"/>
<rect x="475.3" y="73.8" width="17.8" height="2.8" fill="#3a5aa8"/>
<rect x="480.2" y="77" width="8.6" height="8.8" fill="#fff"/>
<path d="M479.5 77V86M489.5 77V86" stroke="#7a8ac0" stroke-width="0.8" stroke-dasharray="1 1"/>
<rect x="476" y="86.2" width="16.4" height="2.3" fill="#d4d0b4"/>
</g>
<text x="362.5" y="130" text-anchor="middle" style="font-weight:bold;font-size:17px;fill:#000;letter-spacing:0.34px">2D-standard normal distribution</text>
</svg>
</body></html>
